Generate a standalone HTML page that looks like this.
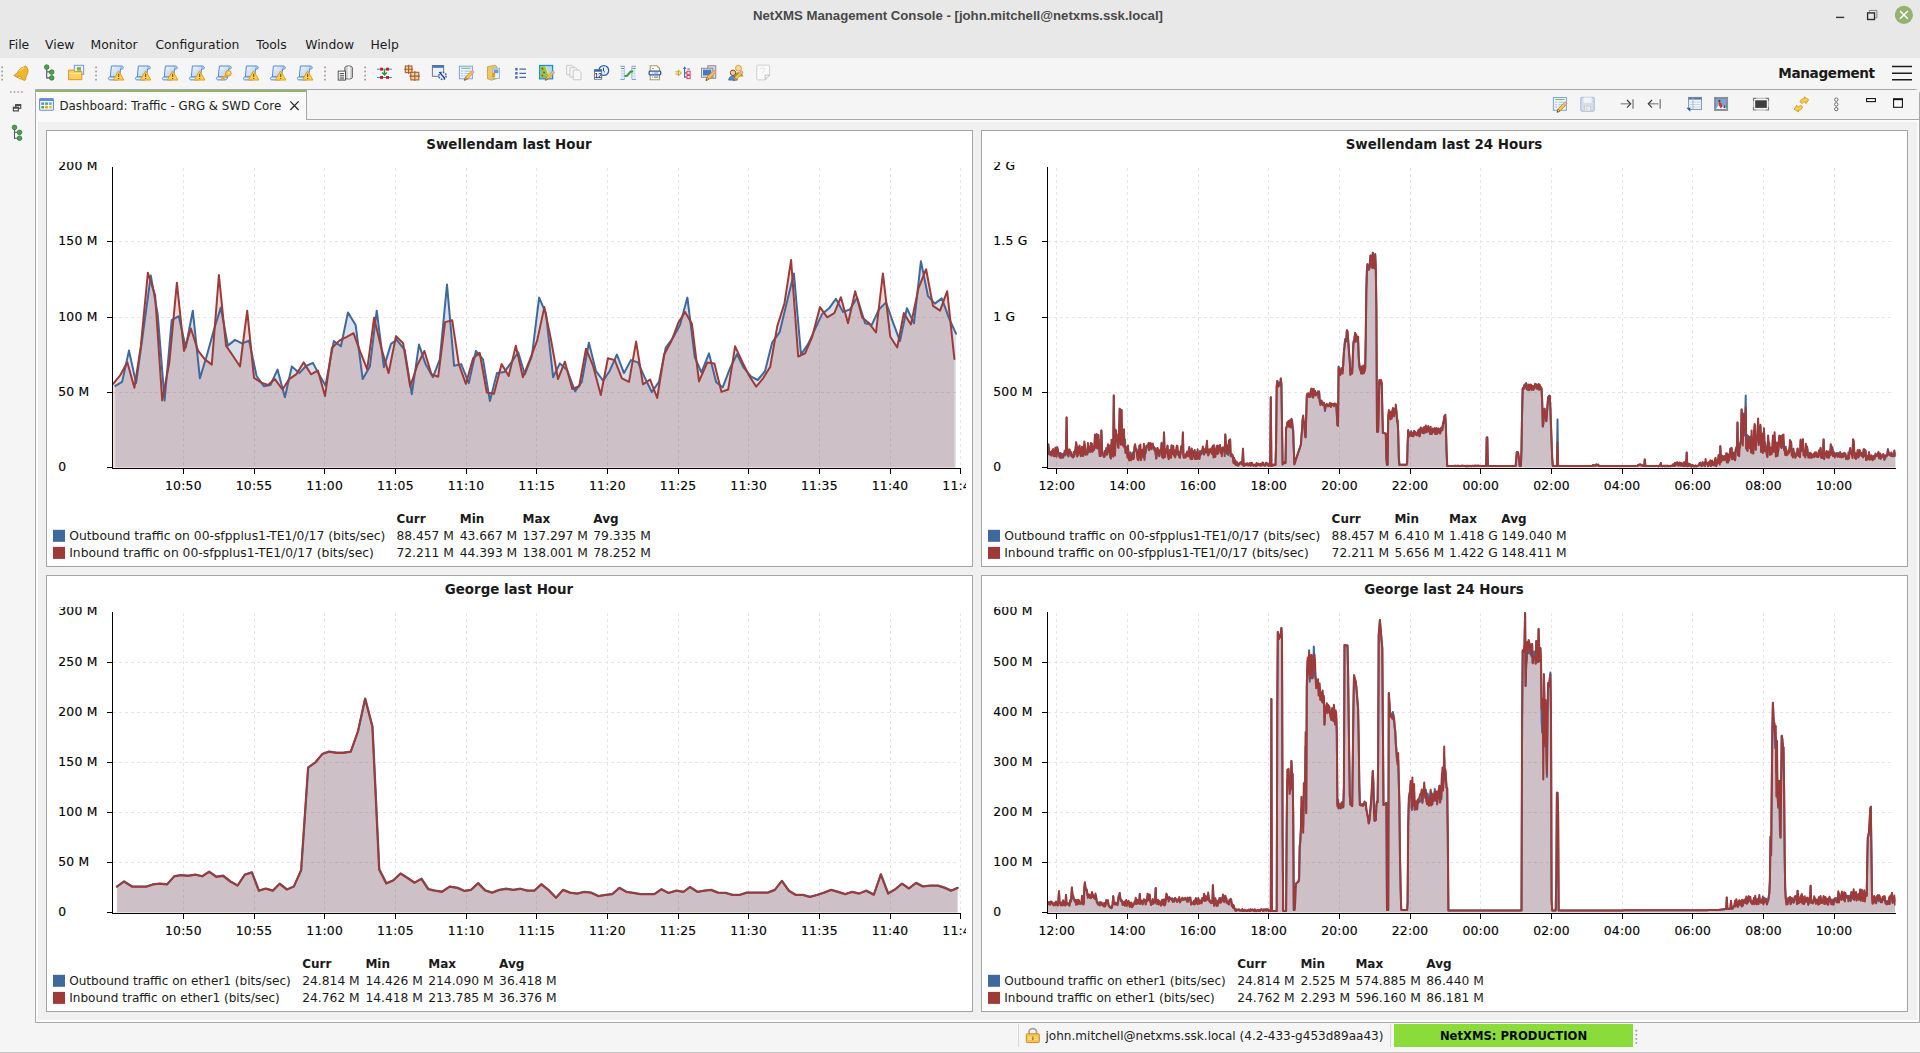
<!DOCTYPE html><html><head><meta charset="utf-8"><title>NetXMS Management Console</title><style>
html,body{margin:0;padding:0}
body{width:1920px;height:1053px;overflow:hidden;background:#f0f0f0;position:relative;font-family:'DejaVu Sans','Liberation Sans',sans-serif;color:#1a1a1a}
div{position:absolute;box-sizing:border-box}
svg{position:absolute;overflow:hidden}
.t{white-space:nowrap}
#titlebar{left:0;top:0;width:1920px;height:58px;background:#e8e8e8}
#title{left:0;width:1916px;top:6.700px;text-align:center;font:bold 13.2px/18px 'Liberation Sans',sans-serif;color:#484848}
.menu{top:36px;font-size:12.4px;line-height:18px;color:#1c1c1c}
#toolbar{left:0;top:58px;width:1920px;height:31px;background:#f5f5f5}
#persp{left:1778.3px;top:63.200px;letter-spacing:-0.36px;font-size:13.6px;font-weight:bold;line-height:20px;color:#1a1a1a}
#side{left:0;top:89px;width:35px;height:962px;background:#f5f5f5}
#tabarea{left:35px;top:89px;width:1885px;height:934px;background:#f0f0f0;border:1px solid #a8a8a8;border-radius:0 5px 0 0}
#tabinner{left:0;top:30px;width:1883px;height:902px;border:2px solid #fbfbfb;background:#f0f0f0}
#tabstrip{left:0;top:0;width:1883px;height:30px;background:#f5f5f5;border-bottom:1px solid #a8a8a8}
#tab{left:-1px;top:-1px;width:272px;height:31px;background:#fafafa;border:1px solid #a8a8a8;border-bottom:none;border-radius:3px 0 0 0}
#tabgreen{left:0;top:0;width:270px;height:2px;background:#8fb56a}
#tabtext{left:23.500px;top:6.800px;font-size:11.820px;line-height:18px;color:#222}
.panel{background:#fff;border:1px solid #a3a3a8;width:927px;height:437px}
.chart{left:0;top:0}
.ct{font:bold 13.4px 'DejaVu Sans',sans-serif;fill:#1a1a1a}
.al text{font:12.35px 'DejaVu Sans',sans-serif;letter-spacing:0.22px;fill:#000;stroke:#000;stroke-width:0.14px}
.lg text{font:12.3px 'DejaVu Sans',sans-serif;fill:#1a1a1a}
.lg text.lh{font-weight:bold;font-size:12px}
#status{left:0;top:1023px;width:1920px;height:30px;background:#f5f5f5}
#user{left:1045.5px;top:1027px;font-size:12.05px;line-height:18px;color:#1c1c1c}
#prod{left:1394px;top:1024px;width:239px;height:22.5px;background:#8bdc3a;text-align:center;color:#000;font:bold 11.600px/25px 'DejaVu Sans',sans-serif;color:#0a0a0a}
#winbottom{left:0;top:1052px;width:1920px;height:1px;background:#bdbdbd}
</style></head><body>
<div id="titlebar"></div>
<div id="title" class="t">NetXMS Management Console - [john.mitchell@netxms.ssk.local]</div>
<div class="menu t" style="left:8.5px">File</div>
<div class="menu t" style="left:45.1px">View</div>
<div class="menu t" style="left:90.5px">Monitor</div>
<div class="menu t" style="left:155.4px">Configuration</div>
<div class="menu t" style="left:256.2px">Tools</div>
<div class="menu t" style="left:305.2px">Window</div>
<div class="menu t" style="left:370.5px">Help</div>
<div id="toolbar"></div>
<div id="persp" class="t">Management</div>
<div id="side"></div>
<div id="status"></div>
<div id="tabarea"><div id="tabinner"></div><div id="tabstrip"></div><div id="tab"><div id="tabgreen"></div><div id="tabtext" class="t">Dashboard: Traffic - GRG &amp; SWD Core</div></div></div>
<div class="panel" style="left:46px;top:130px"></div>
<div class="panel" style="left:981px;top:130px"></div>
<div class="panel" style="left:46px;top:575px"></div>
<div class="panel" style="left:981px;top:575px"></div>
<svg class="chart" style="left:46px;top:130px" width="927" height="437" viewBox="46 130 927 437">
<path d="M113 392.5 H957.6 M113 317.5 H957.6 M113 241.5 H957.6 M183.5 167.7 V467.5 M254.5 167.7 V467.5 M324.5 167.7 V467.5 M395.5 167.7 V467.5 M466.5 167.7 V467.5 M536.5 167.7 V467.5 M607.5 167.7 V467.5 M678.5 167.7 V467.5 M748.5 167.7 V467.5 M819.5 167.7 V467.5 M890.5 167.7 V467.5 M960.5 167.7 V467.5" stroke="#e5e5e5" stroke-width="1" stroke-dasharray="3 3" fill="none" shape-rendering="crispEdges"/>
<clipPath id="c46_130"><rect x="112.5" y="166.7" width="848.1" height="301.3"/></clipPath>
<g clip-path="url(#c46_130)">
<path d="M115.4 385.9 L122.1 381.9 L129 350.6 L136.1 383.1 L142.7 335.6 L150.8 275.6 L157.7 314.3 L164.6 400.4 L171.7 320.2 L178.8 316.2 L185.7 347.5 L192.8 310.7 L199.9 378.3 L206.8 355.8 L213.9 329.7 L220.8 307.6 L227.9 345.6 L235 339.9 L241.9 343.4 L249.1 340.8 L256.6 376 L263.8 386.2 L270.4 385 L277.5 369.6 L284.9 397.3 L291.8 366.5 L299.4 373.1 L306 366 L312.9 362.9 L319.5 375.3 L325.5 385.5 L333.8 341.1 L340.9 346.3 L348 312.4 L355.6 324.9 L362.7 379.1 L369.9 366.5 L376.7 310.7 L383.9 367.2 L391 343.9 L396.7 339.9 L404.7 349.9 L411.8 394.2 L419 344.6 L425.6 364.1 L433 377.2 L439.8 359.4 L447 284.6 L454.1 365.8 L461.2 364.1 L468.8 383.1 L475.9 351 L483 359.4 L489.9 400.9 L497 373.1 L504.4 371.9 L511 362.9 L518.2 352.2 L524.8 374.3 L531.9 355.8 L539.1 297.6 L545.9 313.1 L553.1 377.2 L559.9 363.4 L567.1 370 L575.1 391.4 L581.8 381.9 L588.9 342.7 L596 371.2 L603.1 380.7 L609.5 371.2 L616.9 354.6 L624 373.1 L630.9 360.1 L638 362.4 L645.1 378.3 L651.8 392.1 L658.9 381.9 L665.8 347.5 L672.9 338 L680 324.9 L687.4 297.6 L694.7 357 L701.4 372.4 L709 353.4 L716.1 381.9 L722.7 387.4 L729.8 368.8 L737 354.1 L743.6 367.7 L751.2 376.7 L757.8 380 L765 371.2 L772.1 342.7 L779.7 332.1 L786.8 302.4 L793.9 273.4 L801 354.6 L808.2 343.9 L814.8 329.7 L821.9 314.3 L829.1 308.3 L835.9 298.8 L843.1 311.9 L849.9 309.5 L857.1 297.6 L865.1 323.3 L871.8 324.9 L878.9 309.5 L886 302.4 L893.1 322.6 L900 341.1 L906.9 308.3 L914 323.3 L920.9 261.3 L928 296 L934.9 303.6 L941.8 298.4 L948.9 317.8 L956 333.7 L956 467.5 L115.4 467.5 Z" fill="#3f699d" fill-opacity="0.2" stroke="none"/>
<path d="M113.1 383.8 L120.2 375.3 L127.3 362.2 L134.4 387.8 L140.8 346.3 L147.9 272.7 L155.1 295.3 L162.2 400.4 L169.3 362.9 L176.9 282.7 L184 351 L190.9 328.5 L198 350.6 L204.9 359.4 L211.8 364.6 L218.9 275.1 L226 345.6 L232.9 355.8 L240 366.5 L247.2 310.7 L254 377.9 L261.4 382.6 L268 385 L274.9 379.1 L282.5 389.5 L289.2 379.1 L296.5 374.1 L303.6 362.4 L311 374.3 L317.9 370.5 L325 396.1 L331.9 348 L339.7 340.4 L346.8 336.8 L353.5 333.2 L360.4 352.2 L367.2 369.3 L374.1 317.8 L381.5 348.7 L388.6 373.1 L396 336.1 L403.1 343.2 L410.2 386.6 L417.3 365.3 L424.4 351 L431.5 374.3 L438.2 376.7 L445.1 322.1 L452.2 320.2 L458.8 364.1 L465.9 383.8 L473.1 358.2 L479.7 352.9 L486.8 392.6 L494 393.8 L501.6 364.1 L508.7 376 L515.8 345.8 L522.9 377.2 L530 359.4 L537.2 340.4 L544.3 307.1 L550.9 339.2 L558 379.1 L564.9 361.7 L572.3 389 L579.2 386.2 L586 348.7 L592.9 365.3 L600.8 395 L607.9 358.2 L614.8 360.1 L621.9 378.3 L629 381.9 L636.1 341.6 L643 384.3 L650.1 379.5 L657.2 398 L664.1 354.6 L671.2 341.6 L678.4 322.6 L685 311.9 L691.9 323.8 L699 381.4 L707.3 362.4 L714.4 363.4 L721.5 391.9 L728.2 389.5 L735.1 346.3 L742.2 361.7 L749.3 376 L756.2 386.6 L763.1 378.3 L770.2 366.9 L777.3 326.1 L784.4 303.6 L791.1 260.1 L798.2 356.5 L805.1 353.4 L812.2 336.8 L820 307.1 L827.2 317.3 L834.3 313.1 L840.9 297.2 L848 323.3 L855.2 291.2 L862.3 317.8 L869.2 323.3 L876 332.5 L882.9 273.4 L890.3 336.8 L897.2 347.5 L903.8 313.1 L910.9 324.5 L918.5 288.1 L926.1 269.2 L933 305.9 L940.1 310.7 L947.2 291.2 L954.4 358.9 L954.4 467.5 L113.1 467.5 Z" fill="#9e3b39" fill-opacity="0.2" stroke="none"/>
<path d="M115.4 385.9 L122.1 381.9 L129 350.6 L136.1 383.1 L142.7 335.6 L150.8 275.6 L157.7 314.3 L164.6 400.4 L171.7 320.2 L178.8 316.2 L185.7 347.5 L192.8 310.7 L199.9 378.3 L206.8 355.8 L213.9 329.7 L220.8 307.6 L227.9 345.6 L235 339.9 L241.9 343.4 L249.1 340.8 L256.6 376 L263.8 386.2 L270.4 385 L277.5 369.6 L284.9 397.3 L291.8 366.5 L299.4 373.1 L306 366 L312.9 362.9 L319.5 375.3 L325.5 385.5 L333.8 341.1 L340.9 346.3 L348 312.4 L355.6 324.9 L362.7 379.1 L369.9 366.5 L376.7 310.7 L383.9 367.2 L391 343.9 L396.7 339.9 L404.7 349.9 L411.8 394.2 L419 344.6 L425.6 364.1 L433 377.2 L439.8 359.4 L447 284.6 L454.1 365.8 L461.2 364.1 L468.8 383.1 L475.9 351 L483 359.4 L489.9 400.9 L497 373.1 L504.4 371.9 L511 362.9 L518.2 352.2 L524.8 374.3 L531.9 355.8 L539.1 297.6 L545.9 313.1 L553.1 377.2 L559.9 363.4 L567.1 370 L575.1 391.4 L581.8 381.9 L588.9 342.7 L596 371.2 L603.1 380.7 L609.5 371.2 L616.9 354.6 L624 373.1 L630.9 360.1 L638 362.4 L645.1 378.3 L651.8 392.1 L658.9 381.9 L665.8 347.5 L672.9 338 L680 324.9 L687.4 297.6 L694.7 357 L701.4 372.4 L709 353.4 L716.1 381.9 L722.7 387.4 L729.8 368.8 L737 354.1 L743.6 367.7 L751.2 376.7 L757.8 380 L765 371.2 L772.1 342.7 L779.7 332.1 L786.8 302.4 L793.9 273.4 L801 354.6 L808.2 343.9 L814.8 329.7 L821.9 314.3 L829.1 308.3 L835.9 298.8 L843.1 311.9 L849.9 309.5 L857.1 297.6 L865.1 323.3 L871.8 324.9 L878.9 309.5 L886 302.4 L893.1 322.6 L900 341.1 L906.9 308.3 L914 323.3 L920.9 261.3 L928 296 L934.9 303.6 L941.8 298.4 L948.9 317.8 L956 333.7" fill="none" stroke="#3f699d" stroke-width="2" stroke-linejoin="round" stroke-linecap="round"/>
<path d="M113.1 383.8 L120.2 375.3 L127.3 362.2 L134.4 387.8 L140.8 346.3 L147.9 272.7 L155.1 295.3 L162.2 400.4 L169.3 362.9 L176.9 282.7 L184 351 L190.9 328.5 L198 350.6 L204.9 359.4 L211.8 364.6 L218.9 275.1 L226 345.6 L232.9 355.8 L240 366.5 L247.2 310.7 L254 377.9 L261.4 382.6 L268 385 L274.9 379.1 L282.5 389.5 L289.2 379.1 L296.5 374.1 L303.6 362.4 L311 374.3 L317.9 370.5 L325 396.1 L331.9 348 L339.7 340.4 L346.8 336.8 L353.5 333.2 L360.4 352.2 L367.2 369.3 L374.1 317.8 L381.5 348.7 L388.6 373.1 L396 336.1 L403.1 343.2 L410.2 386.6 L417.3 365.3 L424.4 351 L431.5 374.3 L438.2 376.7 L445.1 322.1 L452.2 320.2 L458.8 364.1 L465.9 383.8 L473.1 358.2 L479.7 352.9 L486.8 392.6 L494 393.8 L501.6 364.1 L508.7 376 L515.8 345.8 L522.9 377.2 L530 359.4 L537.2 340.4 L544.3 307.1 L550.9 339.2 L558 379.1 L564.9 361.7 L572.3 389 L579.2 386.2 L586 348.7 L592.9 365.3 L600.8 395 L607.9 358.2 L614.8 360.1 L621.9 378.3 L629 381.9 L636.1 341.6 L643 384.3 L650.1 379.5 L657.2 398 L664.1 354.6 L671.2 341.6 L678.4 322.6 L685 311.9 L691.9 323.8 L699 381.4 L707.3 362.4 L714.4 363.4 L721.5 391.9 L728.2 389.5 L735.1 346.3 L742.2 361.7 L749.3 376 L756.2 386.6 L763.1 378.3 L770.2 366.9 L777.3 326.1 L784.4 303.6 L791.1 260.1 L798.2 356.5 L805.1 353.4 L812.2 336.8 L820 307.1 L827.2 317.3 L834.3 313.1 L840.9 297.2 L848 323.3 L855.2 291.2 L862.3 317.8 L869.2 323.3 L876 332.5 L882.9 273.4 L890.3 336.8 L897.2 347.5 L903.8 313.1 L910.9 324.5 L918.5 288.1 L926.1 269.2 L933 305.9 L940.1 310.7 L947.2 291.2 L954.4 358.9" fill="none" stroke="#9e3b39" stroke-width="2" stroke-linejoin="round" stroke-linecap="round"/>
</g>
<path d="M112.5 166.7 V468.5 M112 468.4 H961.1 M106.9 467.5 H112.5 M106.9 392.5 H112.5 M106.9 317.5 H112.5 M106.9 241.5 H112.5 M183.5 467.5 V473.5 M254.5 467.5 V473.5 M324.5 467.5 V473.5 M395.5 467.5 V473.5 M466.5 467.5 V473.5 M536.5 467.5 V473.5 M607.5 467.5 V473.5 M678.5 467.5 V473.5 M748.5 467.5 V473.5 M819.5 467.5 V473.5 M890.5 467.5 V473.5 M960.5 467.5 V473.5" stroke="#000" stroke-width="1" fill="none" shape-rendering="crispEdges"/>
<text x="509" y="149" text-anchor="middle" class="ct">Swellendam last Hour</text>
<clipPath id="yc46_130"><rect x="46" y="162" width="70" height="320"/></clipPath>
<g clip-path="url(#yc46_130)" class="al">
<text x="58.3" y="470.8">0</text>
<text x="58.3" y="395.8">50 M</text>
<text x="58.3" y="320.8">100 M</text>
<text x="58.3" y="244.8">150 M</text>
<text x="58.3" y="170">200 M</text>
</g>
<clipPath id="xc46_130"><rect x="46" y="472.5" width="920" height="30"/></clipPath>
<g clip-path="url(#xc46_130)" class="al" text-anchor="middle">
<text x="183.4" y="490.3">10:50</text>
<text x="254.1" y="490.3">10:55</text>
<text x="324.7" y="490.3">11:00</text>
<text x="395.4" y="490.3">11:05</text>
<text x="466.1" y="490.3">11:10</text>
<text x="536.7" y="490.3">11:15</text>
<text x="607.4" y="490.3">11:20</text>
<text x="678.1" y="490.3">11:25</text>
<text x="748.7" y="490.3">11:30</text>
<text x="819.4" y="490.3">11:35</text>
<text x="890.1" y="490.3">11:40</text>
<text x="960.7" y="490.3">11:45</text>
</g>
<g class="lg">
<text x="396.4" y="522.5" class="lh">Curr</text>
<text x="459.7" y="522.5" class="lh">Min</text>
<text x="522.5" y="522.5" class="lh">Max</text>
<text x="593.3" y="522.5" class="lh">Avg</text>
<rect x="53" y="529.8" width="12" height="12" fill="#3f699d"/>
<text x="69.2" y="539.5" textLength="316.2" lengthAdjust="spacingAndGlyphs">Outbound traffic on 00-sfpplus1-TE1/0/17 (bits/sec)</text>
<text x="396.4" y="539.5">88.457 M</text>
<text x="459.7" y="539.5">43.667 M</text>
<text x="522.5" y="539.5">137.297 M</text>
<text x="593.3" y="539.5">79.335 M</text>
<rect x="53" y="546.9" width="12" height="12" fill="#9e3b39"/>
<text x="69.2" y="556.6" textLength="304.6" lengthAdjust="spacingAndGlyphs">Inbound traffic on 00-sfpplus1-TE1/0/17 (bits/sec)</text>
<text x="396.4" y="556.6">72.211 M</text>
<text x="459.7" y="556.6">44.393 M</text>
<text x="522.5" y="556.6">138.001 M</text>
<text x="593.3" y="556.6">78.252 M</text>
</g>
</svg>
<svg class="chart" style="left:981px;top:130px" width="927" height="437" viewBox="981 130 927 437">
<path d="M1048 392.5 H1892.6 M1048 317.5 H1892.6 M1048 241.5 H1892.6 M1056.5 167.7 V467.5 M1127.5 167.7 V467.5 M1198.5 167.7 V467.5 M1268.5 167.7 V467.5 M1339.5 167.7 V467.5 M1410.5 167.7 V467.5 M1480.5 167.7 V467.5 M1551.5 167.7 V467.5 M1622.5 167.7 V467.5 M1692.5 167.7 V467.5 M1763.5 167.7 V467.5 M1834.5 167.7 V467.5" stroke="#e5e5e5" stroke-width="1" stroke-dasharray="3 3" fill="none" shape-rendering="crispEdges"/>
<clipPath id="c981_130"><rect x="1047.5" y="166.7" width="848.1" height="301.3"/></clipPath>
<g clip-path="url(#c981_130)">
<path d="M1047.8 453.9 L1048.3 444.4 L1048.9 450.5 L1049.5 454.5 L1050.1 454.4 L1050.7 452.9 L1051.3 455.3 L1051.9 451.2 L1052.5 450.8 L1053.1 449.8 L1053.6 454.3 L1054.2 452.6 L1054.8 456 L1055.4 449.5 L1056 451.6 L1056.6 452.6 L1057.2 451 L1057.8 449.5 L1058.4 454.8 L1059 453.1 L1059.5 456.5 L1060.1 456.7 L1060.7 452.9 L1061.3 457.7 L1061.9 457.1 L1062.5 454 L1063.1 456.4 L1063.7 455.8 L1064.3 452.8 L1064.9 450.6 L1065.4 455.5 L1066 453.9 L1066.6 417.5 L1067.2 454.1 L1067.8 454.2 L1068.4 456.5 L1069 450.7 L1069.6 452.7 L1070.2 453.4 L1070.8 452 L1071.3 455.7 L1071.9 456 L1072.5 455.1 L1073.1 456.4 L1073.7 453.3 L1074.3 456.2 L1074.9 451.5 L1075.5 448.8 L1076.1 442.3 L1076.7 447.4 L1077.2 455.5 L1077.8 454.7 L1078.4 448.4 L1079 451.5 L1079.6 449.6 L1080.2 453.8 L1080.8 455.1 L1081.4 450.2 L1082 446.7 L1082.6 452.9 L1083.1 456.1 L1083.7 449.6 L1084.3 445.3 L1084.9 446.7 L1085.5 454.3 L1086.1 451.8 L1086.7 452.9 L1087.3 450.1 L1087.9 447.2 L1088.5 450.3 L1089 448.9 L1089.6 446.7 L1090.2 451.9 L1090.8 445.8 L1091.4 450.5 L1092 443.8 L1092.6 451.7 L1093.2 446.6 L1093.8 449.9 L1094.4 448.7 L1094.9 438.7 L1095.5 436.3 L1096.1 446 L1096.7 434 L1097.3 448.5 L1097.9 440.3 L1098.5 439.4 L1099.1 448.6 L1099.7 453.6 L1100.3 447 L1100.8 455.9 L1101.4 430.6 L1102 449 L1102.6 454.3 L1103.2 454.9 L1103.8 456.9 L1104.4 456.9 L1105 450.8 L1105.6 451.1 L1106.2 448 L1106.7 453.1 L1107.3 454.6 L1107.9 448.3 L1108.5 450.1 L1109.1 448.9 L1109.7 447 L1110.3 456.9 L1110.9 455.3 L1111.5 444.5 L1112.1 444.4 L1112.6 455.8 L1113.2 449.5 L1113.8 395.6 L1114.4 446 L1115 454.8 L1115.6 430.6 L1116.2 436.7 L1116.8 434.8 L1117.4 441 L1118 442.6 L1118.5 443 L1119.1 435.8 L1119.7 408.8 L1120.3 439.3 L1120.9 441.3 L1121.5 410 L1122.1 441.5 L1122.7 438.9 L1123.3 444.3 L1123.9 429.4 L1124.4 445.1 L1125 439.4 L1125.6 452.7 L1126.2 448.8 L1126.8 449.2 L1127.4 452.3 L1128 446.9 L1128.6 457.2 L1129.2 457.2 L1129.8 452.9 L1130.3 452.3 L1130.9 457.2 L1131.5 458.1 L1132.1 456.6 L1132.7 452.5 L1133.3 456.9 L1133.9 457.7 L1134.5 448 L1135.1 444.9 L1135.7 449.6 L1136.2 448.4 L1136.8 449.5 L1137.4 456.4 L1138 455.2 L1138.6 458.3 L1139.2 451.2 L1139.8 452.3 L1140.4 449.4 L1141 454.2 L1141.6 450.8 L1142.1 453.5 L1142.7 450.2 L1143.3 457.7 L1143.9 447.5 L1144.5 455.9 L1145.1 454 L1145.7 452.7 L1146.3 449.5 L1146.9 447.4 L1147.5 445.9 L1148 447.6 L1148.6 446.7 L1149.2 450.2 L1149.8 446 L1150.4 443.9 L1151 444.7 L1151.6 446.6 L1152.2 446.7 L1152.8 447.3 L1153.4 447.9 L1153.9 447.7 L1154.5 450.5 L1155.1 448.2 L1155.7 454.5 L1156.3 458.2 L1156.9 454.3 L1157.5 448.3 L1158.1 453.5 L1158.7 453.5 L1159.3 456.3 L1159.8 454.1 L1160.4 450.6 L1161 452.4 L1161.6 442.8 L1162.2 454.6 L1162.8 446.9 L1163.4 457.7 L1164 432.5 L1164.6 452.2 L1165.2 453 L1165.7 452.5 L1166.3 453.3 L1166.9 449.4 L1167.5 446.2 L1168.1 456.8 L1168.7 456.5 L1169.3 453 L1169.9 451.9 L1170.5 454.5 L1171.1 454.8 L1171.6 445.2 L1172.2 451.1 L1172.8 452.4 L1173.4 449.8 L1174 453 L1174.6 452.4 L1175.2 455.7 L1175.8 454.6 L1176.4 451 L1177 450.6 L1177.5 450.6 L1178.1 453.8 L1178.7 453.7 L1179.3 457.1 L1179.9 454 L1180.5 454.4 L1181.1 446.3 L1181.7 448.9 L1182.3 452 L1182.9 432.5 L1183.4 453.1 L1184 457.3 L1184.6 456.2 L1185.2 455 L1185.8 454.1 L1186.4 454.2 L1187 451.4 L1187.6 454.6 L1188.2 454.8 L1188.8 452.3 L1189.3 450.3 L1189.9 455.1 L1190.5 457.5 L1191.1 457.6 L1191.7 449.1 L1192.3 458.6 L1192.9 453.7 L1193.5 454.7 L1194.1 452.7 L1194.7 451.5 L1195.2 459 L1195.8 454.6 L1196.4 452.3 L1197 455.2 L1197.6 451.9 L1198.2 454.7 L1198.8 457.5 L1199.4 458.7 L1200 450.9 L1200.6 452.6 L1201.1 454.4 L1201.7 450.6 L1202.3 453.4 L1202.9 450.1 L1203.5 452.5 L1204.1 454.5 L1204.7 451.1 L1205.3 448.9 L1205.9 451.2 L1206.5 446.8 L1207 444.3 L1207.6 452.8 L1208.2 451.8 L1208.8 453 L1209.4 452.5 L1210 451 L1210.6 451 L1211.2 450.2 L1211.8 453.1 L1212.4 448.6 L1212.9 446.4 L1213.5 455.3 L1214.1 447.2 L1214.7 450.4 L1215.3 454.3 L1215.9 453.4 L1216.5 451.7 L1217.1 448.2 L1217.7 452 L1218.3 452.9 L1218.8 445.8 L1219.4 449.5 L1220 445.6 L1220.6 451.4 L1221.2 447.9 L1221.8 453.5 L1222.4 450.6 L1223 449.8 L1223.6 450.4 L1224.2 448.7 L1224.7 452.4 L1225.3 434.4 L1225.9 449.7 L1226.5 449.5 L1227.1 454 L1227.7 450.7 L1228.3 455 L1228.9 445.9 L1229.5 447.2 L1230.1 439.4 L1230.6 452.7 L1231.2 453.7 L1231.8 454.2 L1232.4 454.9 L1233 456.8 L1233.6 462.9 L1234.2 459.7 L1234.8 461.7 L1235.4 461.2 L1236 464.9 L1236.5 463.8 L1237.1 463.1 L1237.7 464.8 L1238.3 465.3 L1238.9 464.5 L1239.5 464.2 L1240.1 463 L1240.7 462.8 L1241.3 462 L1241.9 464 L1242.4 462.3 L1243 448.8 L1243.6 465.7 L1244.2 463.8 L1244.8 465 L1245.4 463.8 L1246 465 L1246.6 465.1 L1247.2 463.8 L1247.8 464.2 L1248.3 464.6 L1248.9 464.6 L1249.5 464.1 L1250.1 463.9 L1250.7 464.8 L1251.3 463 L1251.9 463.6 L1252.5 465.2 L1253.1 464.5 L1253.7 465.4 L1254.2 465 L1254.8 465.3 L1255.4 464.8 L1256 465.6 L1256.6 464.2 L1257.2 464.8 L1257.8 464.4 L1258.4 463.8 L1259 465.1 L1259.6 465 L1260.1 464.5 L1260.7 464.9 L1261.3 464.2 L1261.9 465.1 L1262.5 463.2 L1263.1 463.2 L1263.7 464.9 L1264.3 464.7 L1264.9 465.5 L1265.5 464.9 L1266 462.7 L1266.6 463.7 L1267.2 464.5 L1267.8 465 L1268.4 465.6 L1269 464.3 L1269.6 463.9 L1270.2 465.6 L1270.8 397.2 L1271.4 465.7 L1271.9 464.8 L1272.5 465.6 L1273.1 464.8 L1273.7 464.9 L1274.3 465 L1274.9 464.8 L1275.5 464.8 L1276.1 442.7 L1276.7 385.7 L1277.3 380.9 L1277.8 386.3 L1278.4 384.7 L1279 382.5 L1279.6 384 L1280.2 385.8 L1280.8 378.6 L1281.4 384.6 L1282 422.2 L1282.6 464.4 L1283.2 463.4 L1283.7 462.8 L1284.3 463 L1284.9 462.3 L1285.5 463.1 L1286.1 427.8 L1286.7 426.7 L1287.3 422.3 L1287.9 423.8 L1288.5 422.8 L1289.1 426.5 L1289.6 425 L1290.2 420.9 L1290.8 427.2 L1291.4 420.9 L1292 420.7 L1292.6 426.5 L1293.2 430.1 L1293.8 449.5 L1294.4 464.2 L1295 462.4 L1295.5 460.7 L1296.1 458.9 L1296.7 457.1 L1297.3 455.4 L1297.9 453.6 L1298.5 451.8 L1299.1 450.1 L1299.7 448.3 L1300.3 446.5 L1300.9 444.7 L1301.4 437.3 L1302 430 L1302.6 419.9 L1303.2 418.5 L1303.8 425.1 L1304.4 426.7 L1305 434.6 L1305.6 437.3 L1306.2 416.8 L1306.8 395 L1307.3 394.3 L1307.9 394.1 L1308.5 393.3 L1309.1 394 L1309.7 396.9 L1310.3 396.6 L1310.9 390.3 L1311.5 388.9 L1312.1 389.2 L1312.7 395.9 L1313.2 396.7 L1313.8 392 L1314.4 392.3 L1315 391 L1315.6 394.7 L1316.2 392.7 L1316.8 394.7 L1317.4 394.1 L1318 391.2 L1318.6 397.6 L1319.1 391.8 L1319.7 401.7 L1320.3 402.8 L1320.9 401.7 L1321.5 400.9 L1322.1 403.3 L1322.7 405.2 L1323.3 404.1 L1323.9 403 L1324.5 404.8 L1325 411.1 L1325.6 406.5 L1326.2 405.1 L1326.8 404.5 L1327.4 404.6 L1328 405.2 L1328.6 405.4 L1329.2 405.8 L1329.8 403.3 L1330.4 405.1 L1330.9 405.7 L1331.5 405.2 L1332.1 404.4 L1332.7 404.9 L1333.3 404.5 L1333.9 405 L1334.5 405 L1335.1 404.7 L1335.7 404.5 L1336.3 404.4 L1336.8 414 L1337.4 424.9 L1338 425.6 L1338.6 366.4 L1339.2 367.5 L1339.8 370.6 L1340.4 374.1 L1341 372.9 L1341.6 370.6 L1342.2 371.1 L1342.7 369.5 L1343.3 365 L1343.9 352.1 L1344.5 346.7 L1345.1 339.1 L1345.7 340.8 L1346.3 341.5 L1346.9 330.3 L1347.5 332.3 L1348.1 338 L1348.6 347.1 L1349.2 355.6 L1349.8 362.4 L1350.4 374.2 L1351 369.8 L1351.6 368.7 L1352.2 371.6 L1352.8 356.7 L1353.4 341.4 L1354 340.8 L1354.5 338 L1355.1 333 L1355.7 341.8 L1356.3 338.1 L1356.9 338.8 L1357.5 340.5 L1358.1 340.5 L1358.7 357.3 L1359.3 366.6 L1359.9 369.7 L1360.4 367.5 L1361 372 L1361.6 369.3 L1362.2 366.2 L1362.8 370.5 L1363.4 368.1 L1364 370.4 L1364.6 371.1 L1365.2 367.7 L1365.8 334.3 L1366.3 291.9 L1366.9 269.5 L1367.5 264.2 L1368.1 268.7 L1368.7 269.8 L1369.3 269.5 L1369.9 261.3 L1370.5 255.5 L1371.1 264.3 L1371.7 266.5 L1372.2 263.6 L1372.8 252.8 L1373.4 261.7 L1374 264.2 L1374.6 267.3 L1375.2 254.2 L1375.8 268.8 L1376.4 310.1 L1377 431.7 L1377.6 431.7 L1378.1 431.7 L1378.7 407.7 L1379.3 381.2 L1379.9 381.3 L1380.5 383.9 L1381.1 381.6 L1381.7 382.9 L1382.3 407.3 L1382.9 432.9 L1383.5 433 L1384 433.1 L1384.6 433.3 L1385.2 433.4 L1385.8 433.5 L1386.4 458.9 L1387 464.8 L1387.6 464.8 L1388.2 415.6 L1388.8 413.2 L1389.4 413.1 L1389.9 415.8 L1390.5 418.9 L1391.1 413.9 L1391.7 416.6 L1392.3 414.9 L1392.9 408.5 L1393.5 413.6 L1394.1 409.7 L1394.7 408.7 L1395.3 412.3 L1395.8 407.8 L1396.4 411.7 L1397 421.8 L1397.6 420.7 L1398.2 431.5 L1398.8 457.4 L1399.4 464.8 L1400 464.8 L1400.6 464.8 L1401.2 464.8 L1401.7 464.8 L1402.3 464.8 L1402.9 464.8 L1403.5 464.8 L1404.1 464.8 L1404.7 464.8 L1405.3 464.8 L1405.9 464.8 L1406.5 464.8 L1407.1 463.2 L1407.6 445.7 L1408.2 430.7 L1408.8 435 L1409.4 436.2 L1410 432.6 L1410.6 433.7 L1411.2 431.1 L1411.8 436 L1412.4 433.8 L1413 434.9 L1413.5 435.8 L1414.1 430.8 L1414.7 433.7 L1415.3 433.7 L1415.9 434.8 L1416.5 434 L1417.1 432.7 L1417.7 432.3 L1418.3 430.9 L1418.9 431.2 L1419.4 436.3 L1420 432.4 L1420.6 430.1 L1421.2 431 L1421.8 429.3 L1422.4 430.6 L1423 432.2 L1423.6 433.3 L1424.2 427.1 L1424.8 432.8 L1425.3 428.8 L1425.9 428.7 L1426.5 432.3 L1427.1 431.4 L1427.7 429.4 L1428.3 426.3 L1428.9 429.7 L1429.5 431.3 L1430.1 433.9 L1430.7 429.4 L1431.2 433.4 L1431.8 431.4 L1432.4 428.6 L1433 432.2 L1433.6 430.2 L1434.2 429.8 L1434.8 430.1 L1435.4 434 L1436 433 L1436.6 428.1 L1437.1 433.5 L1437.7 430.8 L1438.3 430.6 L1438.9 428.9 L1439.5 432.9 L1440.1 432.1 L1440.7 430.5 L1441.3 427.4 L1441.9 429.4 L1442.5 426.3 L1443 424.2 L1443.6 421.3 L1444.2 417.4 L1444.8 415.4 L1445.4 418.5 L1446 430.6 L1446.6 452.6 L1447.2 465.9 L1447.8 465.9 L1448.4 465.9 L1448.9 465.9 L1449.5 465.9 L1450.1 465.9 L1450.7 465.9 L1451.3 465.9 L1451.9 465.9 L1452.5 465.9 L1453.1 465.9 L1453.7 465.9 L1454.3 465.9 L1454.8 465.8 L1455.4 465.9 L1456 465.8 L1456.6 466 L1457.2 465.9 L1457.8 465.9 L1458.4 465.8 L1459 465.9 L1459.6 466 L1460.2 465.9 L1460.7 466 L1461.3 465.9 L1461.9 465.7 L1462.5 466 L1463.1 465.7 L1463.7 466.1 L1464.3 465.9 L1464.9 465.9 L1465.5 466 L1466.1 466.2 L1466.6 465.9 L1467.2 465.9 L1467.8 466.2 L1468.4 465.9 L1469 465.9 L1469.6 465.9 L1470.2 465.9 L1470.8 466.1 L1471.4 466.1 L1472 465.9 L1472.5 466.1 L1473.1 465.8 L1473.7 466.1 L1474.3 466.2 L1474.9 465.8 L1475.5 465.7 L1476.1 465.9 L1476.7 465.7 L1477.3 465.7 L1477.9 465.7 L1478.4 465.8 L1479 466.1 L1479.6 465.8 L1480.2 466 L1480.8 466 L1481.4 466 L1482 466 L1482.6 466 L1483.2 466 L1483.8 466 L1484.3 466 L1484.9 466 L1485.5 466 L1486.1 466 L1486.7 437.4 L1487.3 437.5 L1487.9 466 L1488.5 466 L1489.1 466 L1489.7 466 L1490.2 466 L1490.8 466 L1491.4 466 L1492 466 L1492.6 466 L1493.2 466 L1493.8 466 L1494.4 466 L1495 466 L1495.6 466 L1496.1 466 L1496.7 466 L1497.3 466 L1497.9 466 L1498.5 466 L1499.1 466 L1499.7 466 L1500.3 466 L1500.9 466 L1501.5 466 L1502 466 L1502.6 466 L1503.2 466 L1503.8 466 L1504.4 466 L1505 466 L1505.6 466 L1506.2 466 L1506.8 466 L1507.4 466 L1507.9 466 L1508.5 466 L1509.1 466 L1509.7 466 L1510.3 466 L1510.9 466 L1511.5 466 L1512.1 466 L1512.7 466 L1513.3 466 L1513.8 466 L1514.4 466 L1515 466 L1515.6 466 L1516.2 460.1 L1516.8 452 L1517.4 452.2 L1518 452.4 L1518.6 456.2 L1519.2 461.1 L1519.7 466 L1520.3 466 L1520.9 466 L1521.5 449.1 L1522.1 412.7 L1522.7 388.1 L1523.3 388.6 L1523.9 386.8 L1524.5 385.6 L1525.1 386.8 L1525.6 385.4 L1526.2 383.3 L1526.8 389.5 L1527.4 385.8 L1528 389.7 L1528.6 384.6 L1529.2 388.2 L1529.8 386.5 L1530.4 385.1 L1531 385.7 L1531.5 389.1 L1532.1 388 L1532.7 386.5 L1533.3 388.4 L1533.9 386.9 L1534.5 388.7 L1535.1 384.7 L1535.7 386.4 L1536.3 384.5 L1536.9 388.1 L1537.4 385.9 L1538 388.7 L1538.6 386.2 L1539.2 387.6 L1539.8 386.9 L1540.4 387.3 L1541 388.2 L1541.6 388.9 L1542.2 402.2 L1542.8 426.5 L1543.3 423.7 L1543.9 414.4 L1544.5 408.7 L1545.1 413.2 L1545.7 417.7 L1546.3 421.2 L1546.9 413.3 L1547.5 405.5 L1548.1 397.6 L1548.7 396.5 L1549.2 396.1 L1549.8 395.7 L1550.4 408.3 L1551 425.7 L1551.6 442.1 L1552.2 458 L1552.8 466 L1553.4 466 L1554 466 L1554.6 466 L1555.1 466 L1555.7 466 L1556.3 466 L1556.9 466 L1557.5 419.4 L1558.1 466 L1558.7 466 L1559.3 466 L1559.9 466 L1560.5 466 L1561 466 L1561.6 466 L1562.2 466 L1562.8 466 L1563.4 466 L1564 466 L1564.6 466 L1565.2 466 L1565.8 466 L1566.4 466 L1566.9 466 L1567.5 466 L1568.1 466 L1568.7 466 L1569.3 466 L1569.9 466 L1570.5 466 L1571.1 466 L1571.7 466 L1572.3 466 L1572.8 466 L1573.4 466 L1574 466 L1574.6 466 L1575.2 466 L1575.8 466 L1576.4 466 L1577 466 L1577.6 466 L1578.2 466 L1578.7 466 L1579.3 466 L1579.9 466 L1580.5 466 L1581.1 466 L1581.7 466 L1582.3 466 L1582.9 466 L1583.5 466 L1584.1 466 L1584.6 466 L1585.2 466 L1585.8 466 L1586.4 466 L1587 466 L1587.6 466 L1588.2 466 L1588.8 466 L1589.4 466 L1590 466 L1590.5 466 L1591.1 466 L1591.7 466 L1592.3 466 L1592.9 465.4 L1593.5 465 L1594.1 465.6 L1594.7 465.5 L1595.3 465.5 L1595.9 464.6 L1596.4 464.9 L1597 465.2 L1597.6 465.3 L1598.2 464.7 L1598.8 465.5 L1599.4 466 L1600 466 L1600.6 466 L1601.2 466 L1601.8 466 L1602.3 466 L1602.9 466 L1603.5 466 L1604.1 466 L1604.7 466 L1605.3 466 L1605.9 466 L1606.5 466 L1607.1 466 L1607.7 466 L1608.2 466 L1608.8 466 L1609.4 466 L1610 466 L1610.6 466 L1611.2 466 L1611.8 466 L1612.4 466 L1613 466 L1613.6 466 L1614.1 466 L1614.7 466 L1615.3 466 L1615.9 466 L1616.5 466 L1617.1 466 L1617.7 466 L1618.3 466 L1618.9 466 L1619.5 466 L1620 466 L1620.6 466 L1621.2 466 L1621.8 466 L1622.4 466 L1623 466 L1623.6 466 L1624.2 466 L1624.8 466 L1625.4 466 L1625.9 466 L1626.5 466 L1627.1 466 L1627.7 466 L1628.3 466 L1628.9 466 L1629.5 466 L1630.1 466 L1630.7 466 L1631.3 466 L1631.8 466 L1632.4 466 L1633 466 L1633.6 466 L1634.2 466 L1634.8 466 L1635.4 466 L1636 466 L1636.6 466 L1637.2 466 L1637.7 465.7 L1638.3 464.9 L1638.9 465.1 L1639.5 464.8 L1640.1 465.1 L1640.7 464.5 L1641.3 465.3 L1641.9 465.5 L1642.5 465.5 L1643.1 465.9 L1643.6 466 L1644.2 466 L1644.8 459.4 L1645.4 466 L1646 466 L1646.6 466.1 L1647.2 466 L1647.8 465.9 L1648.4 465.9 L1649 466 L1649.5 465.9 L1650.1 466.1 L1650.7 466 L1651.3 466 L1651.9 466.1 L1652.5 466 L1653.1 466 L1653.7 466 L1654.3 466.1 L1654.9 466 L1655.4 466 L1656 466 L1656.6 466 L1657.2 466.1 L1657.8 466 L1658.4 466.2 L1659 465.8 L1659.6 465.6 L1660.2 466 L1660.8 463.1 L1661.3 466 L1661.9 465.8 L1662.5 466.2 L1663.1 465.9 L1663.7 466 L1664.3 465.8 L1664.9 466.2 L1665.5 465.7 L1666.1 466 L1666.7 465.9 L1667.2 465.8 L1667.8 466.1 L1668.4 466.1 L1669 466 L1669.6 465.9 L1670.2 466.2 L1670.8 465.7 L1671.4 465.7 L1672 466.1 L1672.6 466 L1673.1 464.9 L1673.7 464.7 L1674.3 465.9 L1674.9 464.1 L1675.5 465.6 L1676.1 464.5 L1676.7 463 L1677.3 462.5 L1677.9 464.3 L1678.5 465.8 L1679 464.2 L1679.6 462.7 L1680.2 462.9 L1680.8 464.6 L1681.4 463.1 L1682 464.7 L1682.6 464.3 L1683.2 466.1 L1683.8 462.6 L1684.4 463.9 L1684.9 465.5 L1685.5 464.1 L1686.1 465.3 L1686.7 452.5 L1687.3 465.6 L1687.9 465.9 L1688.5 463.9 L1689.1 466 L1689.7 464.6 L1690.3 464.7 L1690.8 465.5 L1691.4 466.5 L1692 465.7 L1692.6 465 L1693.2 465.9 L1693.8 466.1 L1694.4 466.2 L1695 465.7 L1695.6 465.6 L1696.2 465.9 L1696.7 466.1 L1697.3 465.9 L1697.9 465.8 L1698.5 465.2 L1699.1 464.4 L1699.7 462.9 L1700.3 462.8 L1700.9 465.1 L1701.5 466 L1702.1 464.7 L1702.6 462.5 L1703.2 463.5 L1703.8 464.7 L1704.4 464.2 L1705 464.9 L1705.6 461.9 L1706.2 463.5 L1706.8 464 L1707.4 462.7 L1708 466.1 L1708.5 463.2 L1709.1 463.2 L1709.7 464 L1710.3 462.5 L1710.9 463 L1711.5 465.4 L1712.1 461.9 L1712.7 463.4 L1713.3 463.8 L1713.9 462.1 L1714.4 462.8 L1715 461.7 L1715.6 459.8 L1716.2 465.7 L1716.8 462.6 L1717.4 461.4 L1718 462.2 L1718.6 455.7 L1719.2 460.3 L1719.8 463 L1720.3 446.2 L1720.9 459.9 L1721.5 458 L1722.1 459 L1722.7 457.5 L1723.3 458.2 L1723.9 458.7 L1724.5 456 L1725.1 458.7 L1725.7 459.7 L1726.2 456 L1726.8 459.4 L1727.4 454.6 L1728 462.6 L1728.6 455.1 L1729.2 457.5 L1729.8 457.3 L1730.4 448.6 L1731 449.2 L1731.6 447.7 L1732.1 458.9 L1732.7 453.3 L1733.3 456.6 L1733.9 454.3 L1734.5 455.3 L1735.1 460.1 L1735.7 448.7 L1736.3 450.5 L1736.9 450.9 L1737.5 422.5 L1738 452.1 L1738.6 452.2 L1739.2 447.5 L1739.8 447.8 L1740.4 444.6 L1741 435.2 L1741.6 409.4 L1742.2 431.3 L1742.8 440.8 L1743.4 413.5 L1743.9 423.2 L1744.5 435.6 L1745.1 423.1 L1745.7 395.6 L1746.3 449.1 L1746.9 434.7 L1747.5 450.4 L1748.1 435.7 L1748.7 438.8 L1749.3 437 L1749.8 446.1 L1750.4 436.6 L1751 445.3 L1751.6 438.8 L1752.2 453.2 L1752.8 451 L1753.4 446.5 L1754 440.5 L1754.6 435.8 L1755.2 432.3 L1755.7 449.8 L1756.3 439.7 L1756.9 435.2 L1757.5 440.5 L1758.1 420.8 L1758.7 443.6 L1759.3 439.7 L1759.9 437 L1760.5 426.7 L1761.1 451.9 L1761.6 438.2 L1762.2 441 L1762.8 442 L1763.4 445.3 L1764 430.3 L1764.6 447.2 L1765.2 442.3 L1765.8 446.5 L1766.4 451.9 L1767 455.8 L1767.5 449.4 L1768.1 443.1 L1768.7 447 L1769.3 448.9 L1769.9 450.5 L1770.5 449.2 L1771.1 451.5 L1771.7 447.9 L1772.3 451.9 L1772.9 440.4 L1773.4 449.3 L1774 452 L1774.6 439.9 L1775.2 444.9 L1775.8 449.3 L1776.4 450.5 L1777 446.7 L1777.6 446.6 L1778.2 451.1 L1778.8 446.8 L1779.3 435.6 L1779.9 440.4 L1780.5 442.7 L1781.1 446.7 L1781.7 443 L1782.3 440.5 L1782.9 446.3 L1783.5 441.3 L1784.1 450 L1784.7 448.5 L1785.2 453 L1785.8 446.7 L1786.4 453.5 L1787 454.3 L1787.6 453.5 L1788.2 452.6 L1788.8 452.1 L1789.4 449.2 L1790 446.1 L1790.6 447.5 L1791.1 441.5 L1791.7 451.9 L1792.3 453.2 L1792.9 453.9 L1793.5 452.1 L1794.1 455.5 L1794.7 452.5 L1795.3 454.7 L1795.9 454.5 L1796.5 454.5 L1797 454.8 L1797.6 448.8 L1798.2 452.3 L1798.8 453.9 L1799.4 454 L1800 456.6 L1800.6 440.6 L1801.2 450.9 L1801.8 444.1 L1802.4 442.7 L1802.9 439.2 L1803.5 451.7 L1804.1 453 L1804.7 453.9 L1805.3 452.3 L1805.9 448 L1806.5 455.3 L1807.1 448.1 L1807.7 452 L1808.3 453.7 L1808.8 454.7 L1809.4 454.3 L1810 452.7 L1810.6 457 L1811.2 454.2 L1811.8 456.7 L1812.4 456.5 L1813 455.9 L1813.6 454.8 L1814.2 455.9 L1814.7 454.3 L1815.3 455.1 L1815.9 453.5 L1816.5 454.1 L1817.1 454.7 L1817.7 454.9 L1818.3 456.2 L1818.9 453.2 L1819.5 454.7 L1820.1 454 L1820.6 448.5 L1821.2 455.2 L1821.8 458.1 L1822.4 457.2 L1823 453.3 L1823.6 439.4 L1824.2 457.5 L1824.8 456 L1825.4 454.2 L1826 452.6 L1826.5 453.4 L1827.1 457.4 L1827.7 455.9 L1828.3 453.8 L1828.9 457 L1829.5 454.8 L1830.1 455.5 L1830.7 448.9 L1831.3 449.3 L1831.9 451.3 L1832.4 447.2 L1833 452 L1833.6 452 L1834.2 453.7 L1834.8 453.9 L1835.4 453.4 L1836 454.2 L1836.6 453 L1837.2 453.1 L1837.8 455.6 L1838.3 455.4 L1838.9 453 L1839.5 453.7 L1840.1 453.8 L1840.7 455.8 L1841.3 454.8 L1841.9 453.5 L1842.5 455.8 L1843.1 454.7 L1843.7 454.9 L1844.2 454.8 L1844.8 456.2 L1845.4 454.4 L1846 457.9 L1846.6 457.5 L1847.2 456.3 L1847.8 458.9 L1848.4 452.5 L1849 452.6 L1849.6 452.4 L1850.1 452.1 L1850.7 453.4 L1851.3 451.8 L1851.9 454.1 L1852.5 452.3 L1853.1 439.4 L1853.7 446.3 L1854.3 453.8 L1854.9 454.1 L1855.5 453.3 L1856 456.9 L1856.6 457.3 L1857.2 455.3 L1857.8 451 L1858.4 456.1 L1859 456.3 L1859.6 453 L1860.2 451.7 L1860.8 455.6 L1861.4 452.9 L1861.9 454.2 L1862.5 455.3 L1863.1 456.1 L1863.7 449.3 L1864.3 452.3 L1864.9 454.2 L1865.5 451.3 L1866.1 457.7 L1866.7 459.8 L1867.3 456.1 L1867.8 458.3 L1868.4 458.7 L1869 452.4 L1869.6 459.3 L1870.2 458.5 L1870.8 458.8 L1871.4 457.1 L1872 458.9 L1872.6 458.5 L1873.2 455.9 L1873.7 456.1 L1874.3 459.1 L1874.9 457.1 L1875.5 453.6 L1876.1 455.9 L1876.7 454.6 L1877.3 456.3 L1877.9 454.9 L1878.5 455.2 L1879.1 456.4 L1879.6 456.2 L1880.2 454.2 L1880.8 458.8 L1881.4 455.8 L1882 455.9 L1882.6 457.2 L1883.2 455.8 L1883.8 455.2 L1884.4 459.5 L1885 457.2 L1885.5 457.8 L1886.1 456.4 L1886.7 456.3 L1887.3 454.9 L1887.9 449 L1888.5 452.1 L1889.1 454.2 L1889.7 455.3 L1890.3 453.4 L1890.9 455.7 L1891.4 454 L1892 455.3 L1892.6 455.8 L1893.2 453.6 L1893.8 454.4 L1894.4 450.7 L1895 455.5 L1895.6 453.3 L1895.6 467.5 L1047.8 467.5 Z" fill="#3f699d" fill-opacity="0.2" stroke="none"/>
<path d="M1047.8 454 L1048.3 444.4 L1048.9 449.5 L1049.5 453.5 L1050.1 453 L1050.7 452.1 L1051.3 455.5 L1051.9 452.5 L1052.5 451.1 L1053.1 448.9 L1053.6 456.1 L1054.2 454.3 L1054.8 456.2 L1055.4 447.5 L1056 449 L1056.6 456.7 L1057.2 447 L1057.8 448.8 L1058.4 453 L1059 453.3 L1059.5 457 L1060.1 457.8 L1060.7 454.1 L1061.3 457.6 L1061.9 456.8 L1062.5 456.5 L1063.1 457.7 L1063.7 454.7 L1064.3 454.9 L1064.9 451.1 L1065.4 454.2 L1066 453.1 L1066.6 417.5 L1067.2 452.9 L1067.8 454.8 L1068.4 456.2 L1069 449.4 L1069.6 449.4 L1070.2 451.1 L1070.8 452.4 L1071.3 455.9 L1071.9 456.6 L1072.5 456.1 L1073.1 457.5 L1073.7 451.9 L1074.3 455.2 L1074.9 451 L1075.5 452.8 L1076.1 442.5 L1076.7 446.3 L1077.2 456.6 L1077.8 455.3 L1078.4 447.3 L1079 452.5 L1079.6 445.4 L1080.2 453 L1080.8 456.3 L1081.4 449.6 L1082 446.9 L1082.6 454.2 L1083.1 455.9 L1083.7 452.8 L1084.3 441.5 L1084.9 445 L1085.5 454.8 L1086.1 452.9 L1086.7 454.5 L1087.3 454.5 L1087.9 442.9 L1088.5 452.5 L1089 446.7 L1089.6 448.2 L1090.2 451.3 L1090.8 443 L1091.4 451.6 L1092 443.7 L1092.6 451.4 L1093.2 446.9 L1093.8 449.9 L1094.4 448.8 L1094.9 434.4 L1095.5 437.7 L1096.1 447.3 L1096.7 434.7 L1097.3 448.2 L1097.9 445.1 L1098.5 434.9 L1099.1 446 L1099.7 456.1 L1100.3 446.6 L1100.8 455.4 L1101.4 430.6 L1102 449 L1102.6 454.3 L1103.2 454.7 L1103.8 456.8 L1104.4 456.7 L1105 451 L1105.6 455.4 L1106.2 450.6 L1106.7 453.8 L1107.3 452.7 L1107.9 444.2 L1108.5 452.2 L1109.1 450.7 L1109.7 445.4 L1110.3 457.2 L1110.9 458.6 L1111.5 439.8 L1112.1 442.4 L1112.6 455.9 L1113.2 456.7 L1113.8 395.6 L1114.4 438.9 L1115 455.5 L1115.6 429.8 L1116.2 431.5 L1116.8 438 L1117.4 441.8 L1118 447.2 L1118.5 447.9 L1119.1 429.3 L1119.7 408.8 L1120.3 435.6 L1120.9 444.8 L1121.5 410 L1122.1 438 L1122.7 444.1 L1123.3 446.1 L1123.9 429.4 L1124.4 447.6 L1125 446.1 L1125.6 452.7 L1126.2 446.9 L1126.8 451.7 L1127.4 457.4 L1128 445.6 L1128.6 458.5 L1129.2 460.5 L1129.8 457.5 L1130.3 454.8 L1130.9 460.2 L1131.5 459 L1132.1 456.6 L1132.7 453.6 L1133.3 459.3 L1133.9 456.1 L1134.5 446.6 L1135.1 444.3 L1135.7 450.6 L1136.2 450 L1136.8 452 L1137.4 458.8 L1138 459.9 L1138.6 460.1 L1139.2 445.7 L1139.8 449.9 L1140.4 444.6 L1141 460.2 L1141.6 451.2 L1142.1 454 L1142.7 449.4 L1143.3 456.7 L1143.9 443.8 L1144.5 459.9 L1145.1 452.9 L1145.7 449.3 L1146.3 445.8 L1146.9 445.4 L1147.5 445.8 L1148 444.6 L1148.6 442.9 L1149.2 450 L1149.8 446 L1150.4 443.1 L1151 443.5 L1151.6 449.3 L1152.2 444.6 L1152.8 443.6 L1153.4 447.5 L1153.9 446.8 L1154.5 449.7 L1155.1 448.7 L1155.7 453.3 L1156.3 458.7 L1156.9 452.9 L1157.5 448 L1158.1 449.7 L1158.7 451.7 L1159.3 455.9 L1159.8 451.6 L1160.4 449.6 L1161 450.9 L1161.6 443.5 L1162.2 457.1 L1162.8 446.5 L1163.4 458.2 L1164 432.5 L1164.6 453 L1165.2 457 L1165.7 449.6 L1166.3 453.1 L1166.9 451.1 L1167.5 445.5 L1168.1 456.7 L1168.7 459.3 L1169.3 456.1 L1169.9 450 L1170.5 457.4 L1171.1 457.8 L1171.6 445.8 L1172.2 450.3 L1172.8 454 L1173.4 446 L1174 455.7 L1174.6 450.2 L1175.2 457.4 L1175.8 454.1 L1176.4 447.7 L1177 445.6 L1177.5 446.3 L1178.1 454.9 L1178.7 451.7 L1179.3 455.8 L1179.9 458.1 L1180.5 453.1 L1181.1 447.1 L1181.7 447.2 L1182.3 450 L1182.9 432.5 L1183.4 456.7 L1184 457.9 L1184.6 454.7 L1185.2 456.8 L1185.8 457.5 L1186.4 455.2 L1187 452.4 L1187.6 454.2 L1188.2 456.4 L1188.8 449.2 L1189.3 446.9 L1189.9 454.7 L1190.5 458.8 L1191.1 459.1 L1191.7 448.6 L1192.3 459 L1192.9 451.1 L1193.5 453.1 L1194.1 456.5 L1194.7 449.9 L1195.2 459.1 L1195.8 458.3 L1196.4 454.7 L1197 459.1 L1197.6 449.3 L1198.2 457.3 L1198.8 458.2 L1199.4 459 L1200 452.3 L1200.6 454.8 L1201.1 452.3 L1201.7 451.9 L1202.3 449.7 L1202.9 446.4 L1203.5 449.5 L1204.1 454.4 L1204.7 449.5 L1205.3 452.1 L1205.9 452.5 L1206.5 445.1 L1207 440.7 L1207.6 453.5 L1208.2 455.4 L1208.8 454.5 L1209.4 449.2 L1210 452 L1210.6 450.6 L1211.2 448.3 L1211.8 453.8 L1212.4 447.7 L1212.9 445.7 L1213.5 457.4 L1214.1 445.2 L1214.7 448.8 L1215.3 457 L1215.9 453 L1216.5 450.4 L1217.1 445.6 L1217.7 454.1 L1218.3 451.3 L1218.8 446.2 L1219.4 447.6 L1220 445 L1220.6 452.8 L1221.2 450 L1221.8 456.2 L1222.4 448.8 L1223 447.2 L1223.6 450.1 L1224.2 448.9 L1224.7 456.1 L1225.3 434.4 L1225.9 444.4 L1226.5 444.4 L1227.1 451.8 L1227.7 446.2 L1228.3 453.5 L1228.9 440.6 L1229.5 441.5 L1230.1 439.4 L1230.6 456.3 L1231.2 456.4 L1231.8 456.2 L1232.4 454.8 L1233 458.8 L1233.6 462.9 L1234.2 457.9 L1234.8 464 L1235.4 460.4 L1236 464.9 L1236.5 464.6 L1237.1 462.3 L1237.7 465.5 L1238.3 465.6 L1238.9 464 L1239.5 463 L1240.1 462.5 L1240.7 463.4 L1241.3 462.1 L1241.9 464.5 L1242.4 462.3 L1243 448.8 L1243.6 465.8 L1244.2 464.6 L1244.8 465.6 L1245.4 463.7 L1246 464.1 L1246.6 464.6 L1247.2 463.2 L1247.8 464.5 L1248.3 465.5 L1248.9 465.3 L1249.5 463.2 L1250.1 463 L1250.7 465.9 L1251.3 463.3 L1251.9 462.7 L1252.5 464.7 L1253.1 464.6 L1253.7 465.9 L1254.2 464.7 L1254.8 464.9 L1255.4 464.5 L1256 466.3 L1256.6 462.9 L1257.2 464.9 L1257.8 465.3 L1258.4 463.7 L1259 464.7 L1259.6 464.8 L1260.1 463.7 L1260.7 465.9 L1261.3 464.3 L1261.9 464.8 L1262.5 462.4 L1263.1 462.6 L1263.7 465.3 L1264.3 464.6 L1264.9 465.8 L1265.5 464.7 L1266 463.1 L1266.6 462.7 L1267.2 464.6 L1267.8 465.2 L1268.4 465.6 L1269 464 L1269.6 462.7 L1270.2 465.8 L1270.8 397.2 L1271.4 466 L1271.9 465.7 L1272.5 465.6 L1273.1 464.5 L1273.7 465.2 L1274.3 465 L1274.9 464.7 L1275.5 464.9 L1276.1 442.3 L1276.7 387.1 L1277.3 380.9 L1277.8 386.3 L1278.4 386.6 L1279 384.2 L1279.6 384.8 L1280.2 385.3 L1280.8 378.6 L1281.4 383.7 L1282 424 L1282.6 464.4 L1283.2 462.8 L1283.7 462.8 L1284.3 463.2 L1284.9 461.8 L1285.5 462.9 L1286.1 428.1 L1286.7 427.4 L1287.3 423.1 L1287.9 422.2 L1288.5 421 L1289.1 426.6 L1289.6 426.6 L1290.2 420.1 L1290.8 427.3 L1291.4 418.7 L1292 419.9 L1292.6 427.9 L1293.2 431.7 L1293.8 449.3 L1294.4 464.2 L1295 462.4 L1295.5 460.7 L1296.1 458.9 L1296.7 457.1 L1297.3 455.4 L1297.9 453.6 L1298.5 451.8 L1299.1 450.1 L1299.7 448.3 L1300.3 446.5 L1300.9 444.7 L1301.4 436.8 L1302 430.2 L1302.6 419.6 L1303.2 415.5 L1303.8 422.5 L1304.4 421.7 L1305 435.2 L1305.6 437.4 L1306.2 416.8 L1306.8 397.7 L1307.3 393.7 L1307.9 394 L1308.5 393.5 L1309.1 397.1 L1309.7 396.8 L1310.3 396.7 L1310.9 390.4 L1311.5 388.6 L1312.1 389.3 L1312.7 397.4 L1313.2 397.6 L1313.8 388.8 L1314.4 394.3 L1315 391 L1315.6 395.6 L1316.2 394.2 L1316.8 393.7 L1317.4 394.5 L1318 392.7 L1318.6 397.8 L1319.1 391.5 L1319.7 399.6 L1320.3 404.9 L1320.9 403 L1321.5 400.6 L1322.1 403.4 L1322.7 404.9 L1323.3 405 L1323.9 402.6 L1324.5 405.7 L1325 409.8 L1325.6 406.8 L1326.2 404.7 L1326.8 403.8 L1327.4 405.2 L1328 406.4 L1328.6 405.3 L1329.2 405.9 L1329.8 403 L1330.4 404.1 L1330.9 407.1 L1331.5 403.4 L1332.1 404.5 L1332.7 404.3 L1333.3 404 L1333.9 406.4 L1334.5 403.5 L1335.1 403.6 L1335.7 404.8 L1336.3 404.3 L1336.8 413.6 L1337.4 425.2 L1338 425.6 L1338.6 368 L1339.2 368.8 L1339.8 370 L1340.4 375.2 L1341 371.8 L1341.6 368.1 L1342.2 368.5 L1342.7 373.4 L1343.3 361.2 L1343.9 351.8 L1344.5 346 L1345.1 340.8 L1345.7 340.5 L1346.3 339.6 L1346.9 330.3 L1347.5 331.3 L1348.1 340.2 L1348.6 344.6 L1349.2 353.7 L1349.8 360.5 L1350.4 375 L1351 369.6 L1351.6 368.5 L1352.2 373.5 L1352.8 358.5 L1353.4 344.1 L1354 341.1 L1354.5 339.7 L1355.1 333 L1355.7 341.5 L1356.3 334.5 L1356.9 339.1 L1357.5 339.8 L1358.1 336.7 L1358.7 357 L1359.3 363.8 L1359.9 368.3 L1360.4 366.4 L1361 373.6 L1361.6 369 L1362.2 367.3 L1362.8 373.8 L1363.4 365.5 L1364 373.1 L1364.6 370.5 L1365.2 368.5 L1365.8 333.9 L1366.3 291.2 L1366.9 272.2 L1367.5 264.2 L1368.1 269.8 L1368.7 268.7 L1369.3 267.9 L1369.9 266.5 L1370.5 255.5 L1371.1 260.7 L1371.7 266.5 L1372.2 268 L1372.8 252.8 L1373.4 267.8 L1374 264.2 L1374.6 268.6 L1375.2 254.2 L1375.8 269.8 L1376.4 309.4 L1377 431.7 L1377.6 431.7 L1378.1 431.7 L1378.7 407.9 L1379.3 380.1 L1379.9 380.1 L1380.5 383.9 L1381.1 379.9 L1381.7 383 L1382.3 407.9 L1382.9 432.9 L1383.5 433 L1384 433.1 L1384.6 433.3 L1385.2 433.4 L1385.8 433.5 L1386.4 458.9 L1387 464.8 L1387.6 464.8 L1388.2 418.7 L1388.8 410 L1389.4 413.2 L1389.9 417.5 L1390.5 419.4 L1391.1 411.5 L1391.7 418.6 L1392.3 413 L1392.9 408.1 L1393.5 412.6 L1394.1 416.3 L1394.7 409.6 L1395.3 413.1 L1395.8 404.6 L1396.4 410.5 L1397 417.8 L1397.6 420.8 L1398.2 432.9 L1398.8 458.2 L1399.4 464.8 L1400 464.8 L1400.6 464.8 L1401.2 464.8 L1401.7 464.8 L1402.3 464.8 L1402.9 464.8 L1403.5 464.8 L1404.1 464.8 L1404.7 464.8 L1405.3 464.8 L1405.9 464.8 L1406.5 464.8 L1407.1 463.1 L1407.6 445 L1408.2 430.1 L1408.8 436.4 L1409.4 436.3 L1410 435.1 L1410.6 433.9 L1411.2 432.2 L1411.8 436.1 L1412.4 432.9 L1413 436.3 L1413.5 436.2 L1414.1 431.6 L1414.7 432.7 L1415.3 431.9 L1415.9 434.2 L1416.5 433.3 L1417.1 435.4 L1417.7 434.4 L1418.3 430.6 L1418.9 429.5 L1419.4 436.3 L1420 435 L1420.6 427.6 L1421.2 429.5 L1421.8 428 L1422.4 433.1 L1423 431.4 L1423.6 432.8 L1424.2 427.5 L1424.8 431.9 L1425.3 429.2 L1425.9 425.5 L1426.5 432.2 L1427.1 430.2 L1427.7 428.2 L1428.3 426.3 L1428.9 431.3 L1429.5 431.9 L1430.1 433.9 L1430.7 426.8 L1431.2 434 L1431.8 434 L1432.4 430.1 L1433 430.8 L1433.6 428.8 L1434.2 432.4 L1434.8 427.9 L1435.4 434 L1436 433.1 L1436.6 429.1 L1437.1 434 L1437.7 432.4 L1438.3 428.4 L1438.9 428.8 L1439.5 432.6 L1440.1 433.6 L1440.7 432 L1441.3 428.1 L1441.9 429.7 L1442.5 430.1 L1443 422.8 L1443.6 423.2 L1444.2 417.4 L1444.8 415.7 L1445.4 414.7 L1446 430 L1446.6 452.4 L1447.2 465.9 L1447.8 465.9 L1448.4 465.9 L1448.9 465.9 L1449.5 465.9 L1450.1 465.9 L1450.7 465.9 L1451.3 465.9 L1451.9 465.9 L1452.5 465.9 L1453.1 465.9 L1453.7 466 L1454.3 465.9 L1454.8 465.8 L1455.4 465.9 L1456 465.8 L1456.6 465.9 L1457.2 466 L1457.8 465.8 L1458.4 465.8 L1459 466 L1459.6 466.1 L1460.2 465.9 L1460.7 465.9 L1461.3 465.9 L1461.9 465.7 L1462.5 465.9 L1463.1 465.8 L1463.7 466.1 L1464.3 465.9 L1464.9 465.8 L1465.5 466.2 L1466.1 466.2 L1466.6 465.8 L1467.2 465.6 L1467.8 466.2 L1468.4 465.8 L1469 466.2 L1469.6 465.8 L1470.2 465.8 L1470.8 466.1 L1471.4 466.2 L1472 465.7 L1472.5 465.9 L1473.1 465.7 L1473.7 466.1 L1474.3 466.1 L1474.9 465.5 L1475.5 465.8 L1476.1 466 L1476.7 465.9 L1477.3 465.7 L1477.9 465.7 L1478.4 465.5 L1479 466.1 L1479.6 465.9 L1480.2 466 L1480.8 466 L1481.4 466 L1482 466 L1482.6 466 L1483.2 466 L1483.8 466 L1484.3 466 L1484.9 466 L1485.5 466 L1486.1 466 L1486.7 437.4 L1487.3 437.5 L1487.9 466 L1488.5 466 L1489.1 466 L1489.7 466 L1490.2 466 L1490.8 466 L1491.4 466 L1492 466 L1492.6 466 L1493.2 466 L1493.8 466 L1494.4 466 L1495 466 L1495.6 466 L1496.1 466 L1496.7 466 L1497.3 466 L1497.9 466 L1498.5 466 L1499.1 466 L1499.7 466 L1500.3 466 L1500.9 466 L1501.5 466 L1502 466 L1502.6 466 L1503.2 466 L1503.8 466 L1504.4 466 L1505 466 L1505.6 466 L1506.2 466 L1506.8 466 L1507.4 466 L1507.9 466 L1508.5 466 L1509.1 466 L1509.7 466 L1510.3 466 L1510.9 466 L1511.5 466 L1512.1 466 L1512.7 466 L1513.3 466 L1513.8 466 L1514.4 466 L1515 466 L1515.6 466 L1516.2 460.1 L1516.8 452 L1517.4 452.2 L1518 452.4 L1518.6 456.2 L1519.2 461.1 L1519.7 466 L1520.3 466 L1520.9 466 L1521.5 449 L1522.1 412.7 L1522.7 388.9 L1523.3 388.6 L1523.9 389 L1524.5 384.4 L1525.1 387.3 L1525.6 386.4 L1526.2 383.3 L1526.8 389 L1527.4 387.1 L1528 389.7 L1528.6 385.3 L1529.2 390.2 L1529.8 384.8 L1530.4 384.6 L1531 384.8 L1531.5 390 L1532.1 389 L1532.7 385.7 L1533.3 389.9 L1533.9 387.6 L1534.5 387.6 L1535.1 383.7 L1535.7 386.8 L1536.3 384.5 L1536.9 388.8 L1537.4 385.1 L1538 388 L1538.6 384 L1539.2 389.9 L1539.8 384.8 L1540.4 389.3 L1541 387.1 L1541.6 388.7 L1542.2 402.2 L1542.8 426.5 L1543.3 423.7 L1543.9 414.4 L1544.5 408.7 L1545.1 413.2 L1545.7 417.7 L1546.3 421.2 L1546.9 413.3 L1547.5 405.5 L1548.1 397.6 L1548.7 396.5 L1549.2 396.1 L1549.8 395.7 L1550.4 408.3 L1551 425.7 L1551.6 442.1 L1552.2 458 L1552.8 466 L1553.4 466 L1554 466 L1554.6 466 L1555.1 466 L1555.7 466 L1556.3 466 L1556.9 466 L1557.5 442.5 L1558.1 466 L1558.7 466 L1559.3 466 L1559.9 466 L1560.5 466 L1561 466 L1561.6 466 L1562.2 466 L1562.8 466 L1563.4 466 L1564 466 L1564.6 466 L1565.2 466 L1565.8 466 L1566.4 466 L1566.9 466 L1567.5 466 L1568.1 466 L1568.7 466 L1569.3 466 L1569.9 466 L1570.5 466 L1571.1 466 L1571.7 466 L1572.3 466 L1572.8 466 L1573.4 466 L1574 466 L1574.6 466 L1575.2 466 L1575.8 466 L1576.4 466 L1577 466 L1577.6 466 L1578.2 466 L1578.7 466 L1579.3 466 L1579.9 466 L1580.5 466 L1581.1 466 L1581.7 466 L1582.3 466 L1582.9 466 L1583.5 466 L1584.1 466 L1584.6 466 L1585.2 466 L1585.8 466 L1586.4 466 L1587 466 L1587.6 466 L1588.2 466 L1588.8 466 L1589.4 466 L1590 466 L1590.5 466 L1591.1 466 L1591.7 466 L1592.3 466 L1592.9 465 L1593.5 465.2 L1594.1 465.6 L1594.7 465.3 L1595.3 465.9 L1595.9 464.9 L1596.4 464.3 L1597 465.3 L1597.6 464.9 L1598.2 464.6 L1598.8 465.9 L1599.4 466 L1600 466 L1600.6 466 L1601.2 466 L1601.8 466 L1602.3 466 L1602.9 466 L1603.5 466 L1604.1 466 L1604.7 466 L1605.3 466 L1605.9 466 L1606.5 466 L1607.1 466 L1607.7 466 L1608.2 466 L1608.8 466 L1609.4 466 L1610 466 L1610.6 466 L1611.2 466 L1611.8 466 L1612.4 466 L1613 466 L1613.6 466 L1614.1 466 L1614.7 466 L1615.3 466 L1615.9 466 L1616.5 466 L1617.1 466 L1617.7 466 L1618.3 466 L1618.9 466 L1619.5 466 L1620 466 L1620.6 466 L1621.2 466 L1621.8 466 L1622.4 466 L1623 466 L1623.6 466 L1624.2 466 L1624.8 466 L1625.4 466 L1625.9 466 L1626.5 466 L1627.1 466 L1627.7 466 L1628.3 466 L1628.9 466 L1629.5 466 L1630.1 466 L1630.7 466 L1631.3 466 L1631.8 466 L1632.4 466 L1633 466 L1633.6 466 L1634.2 466 L1634.8 466 L1635.4 466 L1636 466 L1636.6 466 L1637.2 466 L1637.7 465.5 L1638.3 464.8 L1638.9 465.4 L1639.5 464.3 L1640.1 464.6 L1640.7 464.6 L1641.3 465.5 L1641.9 465.5 L1642.5 465.2 L1643.1 465.8 L1643.6 466 L1644.2 466 L1644.8 459.4 L1645.4 466 L1646 466 L1646.6 466.1 L1647.2 466 L1647.8 465.9 L1648.4 465.9 L1649 466 L1649.5 465.9 L1650.1 466.1 L1650.7 466 L1651.3 466.1 L1651.9 466.1 L1652.5 466 L1653.1 466 L1653.7 466 L1654.3 466.2 L1654.9 465.9 L1655.4 466 L1656 466.1 L1656.6 466.1 L1657.2 466.1 L1657.8 466.1 L1658.4 466.2 L1659 465.7 L1659.6 465.6 L1660.2 465.9 L1660.8 463.1 L1661.3 466 L1661.9 465.7 L1662.5 466.2 L1663.1 465.8 L1663.7 465.9 L1664.3 465.7 L1664.9 466.2 L1665.5 465.8 L1666.1 466.2 L1666.7 466 L1667.2 465.6 L1667.8 466.3 L1668.4 466.2 L1669 466.1 L1669.6 466.1 L1670.2 466.3 L1670.8 465.7 L1671.4 465.7 L1672 466.1 L1672.6 466 L1673.1 464.2 L1673.7 466.1 L1674.3 466.1 L1674.9 462.7 L1675.5 465.3 L1676.1 464.6 L1676.7 462.6 L1677.3 462.3 L1677.9 464.7 L1678.5 465.6 L1679 465.3 L1679.6 462.6 L1680.2 462.8 L1680.8 465.9 L1681.4 463.1 L1682 465.3 L1682.6 464.8 L1683.2 466 L1683.8 462.8 L1684.4 462.2 L1684.9 465.9 L1685.5 464 L1686.1 465.9 L1686.7 452.5 L1687.3 466.3 L1687.9 466.2 L1688.5 463.8 L1689.1 465.7 L1689.7 463.9 L1690.3 464.4 L1690.8 465.2 L1691.4 466.4 L1692 465.5 L1692.6 465 L1693.2 466 L1693.8 466.5 L1694.4 466.3 L1695 466.2 L1695.6 465.5 L1696.2 466.4 L1696.7 466.4 L1697.3 466.3 L1697.9 465.6 L1698.5 465.3 L1699.1 465.5 L1699.7 463.5 L1700.3 462.8 L1700.9 464.8 L1701.5 466.1 L1702.1 465.7 L1702.6 462.2 L1703.2 463.3 L1703.8 465.4 L1704.4 462.6 L1705 466.2 L1705.6 458.9 L1706.2 463.8 L1706.8 463.1 L1707.4 463 L1708 466.3 L1708.5 462.3 L1709.1 464.9 L1709.7 465.1 L1710.3 460.3 L1710.9 466.1 L1711.5 464.8 L1712.1 460.6 L1712.7 465 L1713.3 464.8 L1713.9 462.5 L1714.4 465.4 L1715 458.9 L1715.6 457.8 L1716.2 466.2 L1716.8 463.1 L1717.4 460.2 L1718 463.3 L1718.6 454.9 L1719.2 460.3 L1719.8 464.5 L1720.3 446.2 L1720.9 456.9 L1721.5 461.7 L1722.1 457.4 L1722.7 455.9 L1723.3 459.9 L1723.9 460.2 L1724.5 456.8 L1725.1 458.8 L1725.7 459.7 L1726.2 453.3 L1726.8 462.4 L1727.4 453.6 L1728 462.1 L1728.6 454.8 L1729.2 460.6 L1729.8 456.6 L1730.4 449.1 L1731 448.7 L1731.6 448.6 L1732.1 459.3 L1732.7 454.6 L1733.3 459 L1733.9 452.6 L1734.5 453.9 L1735.1 460.3 L1735.7 450.7 L1736.3 447 L1736.9 449 L1737.5 422.5 L1738 455.3 L1738.6 455.2 L1739.2 456.1 L1739.8 443.6 L1740.4 443.5 L1741 441.2 L1741.6 409.4 L1742.2 421 L1742.8 445.5 L1743.4 415.1 L1743.9 430.5 L1744.5 432.2 L1745.1 422.3 L1745.7 407.5 L1746.3 448.3 L1746.9 443.8 L1747.5 451 L1748.1 445 L1748.7 436.8 L1749.3 440.9 L1749.8 447.9 L1750.4 440.3 L1751 452.4 L1751.6 430.4 L1752.2 451.9 L1752.8 450 L1753.4 453.5 L1754 431.2 L1754.6 424 L1755.2 425.8 L1755.7 449.7 L1756.3 438.5 L1756.9 438.5 L1757.5 440.6 L1758.1 418.6 L1758.7 445.2 L1759.3 438.3 L1759.9 432.4 L1760.5 424.7 L1761.1 451.2 L1761.6 443 L1762.2 433.5 L1762.8 453.1 L1763.4 448.9 L1764 428.3 L1764.6 451.2 L1765.2 445.7 L1765.8 450.5 L1766.4 449.7 L1767 456.5 L1767.5 457.2 L1768.1 435.4 L1768.7 442.1 L1769.3 443.1 L1769.9 455 L1770.5 454.4 L1771.1 447.4 L1771.7 454.2 L1772.3 449 L1772.9 435.4 L1773.4 450.9 L1774 451.3 L1774.6 432.2 L1775.2 443.5 L1775.8 456.6 L1776.4 449.1 L1777 442.5 L1777.6 456 L1778.2 450.4 L1778.8 441.3 L1779.3 436.4 L1779.9 444.2 L1780.5 436 L1781.1 447.4 L1781.7 448 L1782.3 435.2 L1782.9 446 L1783.5 434.6 L1784.1 449.4 L1784.7 450.5 L1785.2 455 L1785.8 449.1 L1786.4 455.2 L1787 454.7 L1787.6 454.6 L1788.2 450.6 L1788.8 453.2 L1789.4 451 L1790 439.9 L1790.6 446.7 L1791.1 442.7 L1791.7 455.6 L1792.3 452.7 L1792.9 457.5 L1793.5 448.8 L1794.1 454.3 L1794.7 455.5 L1795.3 457.9 L1795.9 456.6 L1796.5 455.9 L1797 454.6 L1797.6 448.4 L1798.2 451.4 L1798.8 456.1 L1799.4 455.4 L1800 457.1 L1800.6 439.6 L1801.2 450.8 L1801.8 442.8 L1802.4 443.7 L1802.9 439.6 L1803.5 455.5 L1804.1 452.3 L1804.7 452.5 L1805.3 457.4 L1805.9 443.8 L1806.5 454.3 L1807.1 446.6 L1807.7 451.4 L1808.3 457.7 L1808.8 453.6 L1809.4 455.8 L1810 457.8 L1810.6 457.1 L1811.2 453.5 L1811.8 457.7 L1812.4 455.9 L1813 455 L1813.6 454 L1814.2 457.2 L1814.7 452.5 L1815.3 456.3 L1815.9 452.3 L1816.5 452.8 L1817.1 457.1 L1817.7 457.1 L1818.3 457.1 L1818.9 450.4 L1819.5 455.4 L1820.1 455.6 L1820.6 447.7 L1821.2 457.8 L1821.8 456.9 L1822.4 456.2 L1823 457.9 L1823.6 439.4 L1824.2 459.2 L1824.8 454.2 L1825.4 455 L1826 452.7 L1826.5 450.9 L1827.1 457.3 L1827.7 454.1 L1828.3 451.5 L1828.9 457.9 L1829.5 453.9 L1830.1 453.3 L1830.7 444.2 L1831.3 445.7 L1831.9 454.7 L1832.4 449.4 L1833 456.1 L1833.6 452.3 L1834.2 453.6 L1834.8 457.4 L1835.4 455 L1836 455.5 L1836.6 453.9 L1837.2 456 L1837.8 457 L1838.3 454.8 L1838.9 454.1 L1839.5 456.9 L1840.1 452.1 L1840.7 456.3 L1841.3 457.4 L1841.9 455.4 L1842.5 454.7 L1843.1 457.2 L1843.7 453.7 L1844.2 452.8 L1844.8 454.6 L1845.4 453.5 L1846 459.1 L1846.6 456.9 L1847.2 457.4 L1847.8 459.2 L1848.4 455.4 L1849 458.5 L1849.6 451.2 L1850.1 448.1 L1850.7 450.6 L1851.3 453.5 L1851.9 454.8 L1852.5 458.1 L1853.1 439.4 L1853.7 440.7 L1854.3 451.3 L1854.9 458 L1855.5 453.8 L1856 459.1 L1856.6 456.2 L1857.2 454.4 L1857.8 449.9 L1858.4 457.4 L1859 454.9 L1859.6 450 L1860.2 452 L1860.8 453 L1861.4 453 L1861.9 455.9 L1862.5 455.8 L1863.1 457.5 L1863.7 449.9 L1864.3 449.2 L1864.9 456.2 L1865.5 450.3 L1866.1 460.1 L1866.7 459.7 L1867.3 456.8 L1867.8 458.5 L1868.4 458.1 L1869 452.2 L1869.6 459.6 L1870.2 459.3 L1870.8 459.1 L1871.4 455.2 L1872 459 L1872.6 460.3 L1873.2 456.3 L1873.7 457.5 L1874.3 458.8 L1874.9 456.2 L1875.5 454.5 L1876.1 455.8 L1876.7 455.1 L1877.3 455.9 L1877.9 453.2 L1878.5 451.9 L1879.1 458.3 L1879.6 458.2 L1880.2 453.5 L1880.8 458.6 L1881.4 455.5 L1882 455.8 L1882.6 456.1 L1883.2 454 L1883.8 455.4 L1884.4 459.7 L1885 457.2 L1885.5 456.8 L1886.1 455 L1886.7 455.4 L1887.3 455 L1887.9 449.9 L1888.5 452.3 L1889.1 455.1 L1889.7 455 L1890.3 454.3 L1890.9 455.6 L1891.4 452.5 L1892 455.9 L1892.6 456.3 L1893.2 456.3 L1893.8 456.1 L1894.4 450.4 L1895 456 L1895.6 453.1 L1895.6 467.5 L1047.8 467.5 Z" fill="#9e3b39" fill-opacity="0.2" stroke="none"/>
<path d="M1047.8 453.9 L1048.3 444.4 L1048.9 450.5 L1049.5 454.5 L1050.1 454.4 L1050.7 452.9 L1051.3 455.3 L1051.9 451.2 L1052.5 450.8 L1053.1 449.8 L1053.6 454.3 L1054.2 452.6 L1054.8 456 L1055.4 449.5 L1056 451.6 L1056.6 452.6 L1057.2 451 L1057.8 449.5 L1058.4 454.8 L1059 453.1 L1059.5 456.5 L1060.1 456.7 L1060.7 452.9 L1061.3 457.7 L1061.9 457.1 L1062.5 454 L1063.1 456.4 L1063.7 455.8 L1064.3 452.8 L1064.9 450.6 L1065.4 455.5 L1066 453.9 L1066.6 417.5 L1067.2 454.1 L1067.8 454.2 L1068.4 456.5 L1069 450.7 L1069.6 452.7 L1070.2 453.4 L1070.8 452 L1071.3 455.7 L1071.9 456 L1072.5 455.1 L1073.1 456.4 L1073.7 453.3 L1074.3 456.2 L1074.9 451.5 L1075.5 448.8 L1076.1 442.3 L1076.7 447.4 L1077.2 455.5 L1077.8 454.7 L1078.4 448.4 L1079 451.5 L1079.6 449.6 L1080.2 453.8 L1080.8 455.1 L1081.4 450.2 L1082 446.7 L1082.6 452.9 L1083.1 456.1 L1083.7 449.6 L1084.3 445.3 L1084.9 446.7 L1085.5 454.3 L1086.1 451.8 L1086.7 452.9 L1087.3 450.1 L1087.9 447.2 L1088.5 450.3 L1089 448.9 L1089.6 446.7 L1090.2 451.9 L1090.8 445.8 L1091.4 450.5 L1092 443.8 L1092.6 451.7 L1093.2 446.6 L1093.8 449.9 L1094.4 448.7 L1094.9 438.7 L1095.5 436.3 L1096.1 446 L1096.7 434 L1097.3 448.5 L1097.9 440.3 L1098.5 439.4 L1099.1 448.6 L1099.7 453.6 L1100.3 447 L1100.8 455.9 L1101.4 430.6 L1102 449 L1102.6 454.3 L1103.2 454.9 L1103.8 456.9 L1104.4 456.9 L1105 450.8 L1105.6 451.1 L1106.2 448 L1106.7 453.1 L1107.3 454.6 L1107.9 448.3 L1108.5 450.1 L1109.1 448.9 L1109.7 447 L1110.3 456.9 L1110.9 455.3 L1111.5 444.5 L1112.1 444.4 L1112.6 455.8 L1113.2 449.5 L1113.8 395.6 L1114.4 446 L1115 454.8 L1115.6 430.6 L1116.2 436.7 L1116.8 434.8 L1117.4 441 L1118 442.6 L1118.5 443 L1119.1 435.8 L1119.7 408.8 L1120.3 439.3 L1120.9 441.3 L1121.5 410 L1122.1 441.5 L1122.7 438.9 L1123.3 444.3 L1123.9 429.4 L1124.4 445.1 L1125 439.4 L1125.6 452.7 L1126.2 448.8 L1126.8 449.2 L1127.4 452.3 L1128 446.9 L1128.6 457.2 L1129.2 457.2 L1129.8 452.9 L1130.3 452.3 L1130.9 457.2 L1131.5 458.1 L1132.1 456.6 L1132.7 452.5 L1133.3 456.9 L1133.9 457.7 L1134.5 448 L1135.1 444.9 L1135.7 449.6 L1136.2 448.4 L1136.8 449.5 L1137.4 456.4 L1138 455.2 L1138.6 458.3 L1139.2 451.2 L1139.8 452.3 L1140.4 449.4 L1141 454.2 L1141.6 450.8 L1142.1 453.5 L1142.7 450.2 L1143.3 457.7 L1143.9 447.5 L1144.5 455.9 L1145.1 454 L1145.7 452.7 L1146.3 449.5 L1146.9 447.4 L1147.5 445.9 L1148 447.6 L1148.6 446.7 L1149.2 450.2 L1149.8 446 L1150.4 443.9 L1151 444.7 L1151.6 446.6 L1152.2 446.7 L1152.8 447.3 L1153.4 447.9 L1153.9 447.7 L1154.5 450.5 L1155.1 448.2 L1155.7 454.5 L1156.3 458.2 L1156.9 454.3 L1157.5 448.3 L1158.1 453.5 L1158.7 453.5 L1159.3 456.3 L1159.8 454.1 L1160.4 450.6 L1161 452.4 L1161.6 442.8 L1162.2 454.6 L1162.8 446.9 L1163.4 457.7 L1164 432.5 L1164.6 452.2 L1165.2 453 L1165.7 452.5 L1166.3 453.3 L1166.9 449.4 L1167.5 446.2 L1168.1 456.8 L1168.7 456.5 L1169.3 453 L1169.9 451.9 L1170.5 454.5 L1171.1 454.8 L1171.6 445.2 L1172.2 451.1 L1172.8 452.4 L1173.4 449.8 L1174 453 L1174.6 452.4 L1175.2 455.7 L1175.8 454.6 L1176.4 451 L1177 450.6 L1177.5 450.6 L1178.1 453.8 L1178.7 453.7 L1179.3 457.1 L1179.9 454 L1180.5 454.4 L1181.1 446.3 L1181.7 448.9 L1182.3 452 L1182.9 432.5 L1183.4 453.1 L1184 457.3 L1184.6 456.2 L1185.2 455 L1185.8 454.1 L1186.4 454.2 L1187 451.4 L1187.6 454.6 L1188.2 454.8 L1188.8 452.3 L1189.3 450.3 L1189.9 455.1 L1190.5 457.5 L1191.1 457.6 L1191.7 449.1 L1192.3 458.6 L1192.9 453.7 L1193.5 454.7 L1194.1 452.7 L1194.7 451.5 L1195.2 459 L1195.8 454.6 L1196.4 452.3 L1197 455.2 L1197.6 451.9 L1198.2 454.7 L1198.8 457.5 L1199.4 458.7 L1200 450.9 L1200.6 452.6 L1201.1 454.4 L1201.7 450.6 L1202.3 453.4 L1202.9 450.1 L1203.5 452.5 L1204.1 454.5 L1204.7 451.1 L1205.3 448.9 L1205.9 451.2 L1206.5 446.8 L1207 444.3 L1207.6 452.8 L1208.2 451.8 L1208.8 453 L1209.4 452.5 L1210 451 L1210.6 451 L1211.2 450.2 L1211.8 453.1 L1212.4 448.6 L1212.9 446.4 L1213.5 455.3 L1214.1 447.2 L1214.7 450.4 L1215.3 454.3 L1215.9 453.4 L1216.5 451.7 L1217.1 448.2 L1217.7 452 L1218.3 452.9 L1218.8 445.8 L1219.4 449.5 L1220 445.6 L1220.6 451.4 L1221.2 447.9 L1221.8 453.5 L1222.4 450.6 L1223 449.8 L1223.6 450.4 L1224.2 448.7 L1224.7 452.4 L1225.3 434.4 L1225.9 449.7 L1226.5 449.5 L1227.1 454 L1227.7 450.7 L1228.3 455 L1228.9 445.9 L1229.5 447.2 L1230.1 439.4 L1230.6 452.7 L1231.2 453.7 L1231.8 454.2 L1232.4 454.9 L1233 456.8 L1233.6 462.9 L1234.2 459.7 L1234.8 461.7 L1235.4 461.2 L1236 464.9 L1236.5 463.8 L1237.1 463.1 L1237.7 464.8 L1238.3 465.3 L1238.9 464.5 L1239.5 464.2 L1240.1 463 L1240.7 462.8 L1241.3 462 L1241.9 464 L1242.4 462.3 L1243 448.8 L1243.6 465.7 L1244.2 463.8 L1244.8 465 L1245.4 463.8 L1246 465 L1246.6 465.1 L1247.2 463.8 L1247.8 464.2 L1248.3 464.6 L1248.9 464.6 L1249.5 464.1 L1250.1 463.9 L1250.7 464.8 L1251.3 463 L1251.9 463.6 L1252.5 465.2 L1253.1 464.5 L1253.7 465.4 L1254.2 465 L1254.8 465.3 L1255.4 464.8 L1256 465.6 L1256.6 464.2 L1257.2 464.8 L1257.8 464.4 L1258.4 463.8 L1259 465.1 L1259.6 465 L1260.1 464.5 L1260.7 464.9 L1261.3 464.2 L1261.9 465.1 L1262.5 463.2 L1263.1 463.2 L1263.7 464.9 L1264.3 464.7 L1264.9 465.5 L1265.5 464.9 L1266 462.7 L1266.6 463.7 L1267.2 464.5 L1267.8 465 L1268.4 465.6 L1269 464.3 L1269.6 463.9 L1270.2 465.6 L1270.8 397.2 L1271.4 465.7 L1271.9 464.8 L1272.5 465.6 L1273.1 464.8 L1273.7 464.9 L1274.3 465 L1274.9 464.8 L1275.5 464.8 L1276.1 442.7 L1276.7 385.7 L1277.3 380.9 L1277.8 386.3 L1278.4 384.7 L1279 382.5 L1279.6 384 L1280.2 385.8 L1280.8 378.6 L1281.4 384.6 L1282 422.2 L1282.6 464.4 L1283.2 463.4 L1283.7 462.8 L1284.3 463 L1284.9 462.3 L1285.5 463.1 L1286.1 427.8 L1286.7 426.7 L1287.3 422.3 L1287.9 423.8 L1288.5 422.8 L1289.1 426.5 L1289.6 425 L1290.2 420.9 L1290.8 427.2 L1291.4 420.9 L1292 420.7 L1292.6 426.5 L1293.2 430.1 L1293.8 449.5 L1294.4 464.2 L1295 462.4 L1295.5 460.7 L1296.1 458.9 L1296.7 457.1 L1297.3 455.4 L1297.9 453.6 L1298.5 451.8 L1299.1 450.1 L1299.7 448.3 L1300.3 446.5 L1300.9 444.7 L1301.4 437.3 L1302 430 L1302.6 419.9 L1303.2 418.5 L1303.8 425.1 L1304.4 426.7 L1305 434.6 L1305.6 437.3 L1306.2 416.8 L1306.8 395 L1307.3 394.3 L1307.9 394.1 L1308.5 393.3 L1309.1 394 L1309.7 396.9 L1310.3 396.6 L1310.9 390.3 L1311.5 388.9 L1312.1 389.2 L1312.7 395.9 L1313.2 396.7 L1313.8 392 L1314.4 392.3 L1315 391 L1315.6 394.7 L1316.2 392.7 L1316.8 394.7 L1317.4 394.1 L1318 391.2 L1318.6 397.6 L1319.1 391.8 L1319.7 401.7 L1320.3 402.8 L1320.9 401.7 L1321.5 400.9 L1322.1 403.3 L1322.7 405.2 L1323.3 404.1 L1323.9 403 L1324.5 404.8 L1325 411.1 L1325.6 406.5 L1326.2 405.1 L1326.8 404.5 L1327.4 404.6 L1328 405.2 L1328.6 405.4 L1329.2 405.8 L1329.8 403.3 L1330.4 405.1 L1330.9 405.7 L1331.5 405.2 L1332.1 404.4 L1332.7 404.9 L1333.3 404.5 L1333.9 405 L1334.5 405 L1335.1 404.7 L1335.7 404.5 L1336.3 404.4 L1336.8 414 L1337.4 424.9 L1338 425.6 L1338.6 366.4 L1339.2 367.5 L1339.8 370.6 L1340.4 374.1 L1341 372.9 L1341.6 370.6 L1342.2 371.1 L1342.7 369.5 L1343.3 365 L1343.9 352.1 L1344.5 346.7 L1345.1 339.1 L1345.7 340.8 L1346.3 341.5 L1346.9 330.3 L1347.5 332.3 L1348.1 338 L1348.6 347.1 L1349.2 355.6 L1349.8 362.4 L1350.4 374.2 L1351 369.8 L1351.6 368.7 L1352.2 371.6 L1352.8 356.7 L1353.4 341.4 L1354 340.8 L1354.5 338 L1355.1 333 L1355.7 341.8 L1356.3 338.1 L1356.9 338.8 L1357.5 340.5 L1358.1 340.5 L1358.7 357.3 L1359.3 366.6 L1359.9 369.7 L1360.4 367.5 L1361 372 L1361.6 369.3 L1362.2 366.2 L1362.8 370.5 L1363.4 368.1 L1364 370.4 L1364.6 371.1 L1365.2 367.7 L1365.8 334.3 L1366.3 291.9 L1366.9 269.5 L1367.5 264.2 L1368.1 268.7 L1368.7 269.8 L1369.3 269.5 L1369.9 261.3 L1370.5 255.5 L1371.1 264.3 L1371.7 266.5 L1372.2 263.6 L1372.8 252.8 L1373.4 261.7 L1374 264.2 L1374.6 267.3 L1375.2 254.2 L1375.8 268.8 L1376.4 310.1 L1377 431.7 L1377.6 431.7 L1378.1 431.7 L1378.7 407.7 L1379.3 381.2 L1379.9 381.3 L1380.5 383.9 L1381.1 381.6 L1381.7 382.9 L1382.3 407.3 L1382.9 432.9 L1383.5 433 L1384 433.1 L1384.6 433.3 L1385.2 433.4 L1385.8 433.5 L1386.4 458.9 L1387 464.8 L1387.6 464.8 L1388.2 415.6 L1388.8 413.2 L1389.4 413.1 L1389.9 415.8 L1390.5 418.9 L1391.1 413.9 L1391.7 416.6 L1392.3 414.9 L1392.9 408.5 L1393.5 413.6 L1394.1 409.7 L1394.7 408.7 L1395.3 412.3 L1395.8 407.8 L1396.4 411.7 L1397 421.8 L1397.6 420.7 L1398.2 431.5 L1398.8 457.4 L1399.4 464.8 L1400 464.8 L1400.6 464.8 L1401.2 464.8 L1401.7 464.8 L1402.3 464.8 L1402.9 464.8 L1403.5 464.8 L1404.1 464.8 L1404.7 464.8 L1405.3 464.8 L1405.9 464.8 L1406.5 464.8 L1407.1 463.2 L1407.6 445.7 L1408.2 430.7 L1408.8 435 L1409.4 436.2 L1410 432.6 L1410.6 433.7 L1411.2 431.1 L1411.8 436 L1412.4 433.8 L1413 434.9 L1413.5 435.8 L1414.1 430.8 L1414.7 433.7 L1415.3 433.7 L1415.9 434.8 L1416.5 434 L1417.1 432.7 L1417.7 432.3 L1418.3 430.9 L1418.9 431.2 L1419.4 436.3 L1420 432.4 L1420.6 430.1 L1421.2 431 L1421.8 429.3 L1422.4 430.6 L1423 432.2 L1423.6 433.3 L1424.2 427.1 L1424.8 432.8 L1425.3 428.8 L1425.9 428.7 L1426.5 432.3 L1427.1 431.4 L1427.7 429.4 L1428.3 426.3 L1428.9 429.7 L1429.5 431.3 L1430.1 433.9 L1430.7 429.4 L1431.2 433.4 L1431.8 431.4 L1432.4 428.6 L1433 432.2 L1433.6 430.2 L1434.2 429.8 L1434.8 430.1 L1435.4 434 L1436 433 L1436.6 428.1 L1437.1 433.5 L1437.7 430.8 L1438.3 430.6 L1438.9 428.9 L1439.5 432.9 L1440.1 432.1 L1440.7 430.5 L1441.3 427.4 L1441.9 429.4 L1442.5 426.3 L1443 424.2 L1443.6 421.3 L1444.2 417.4 L1444.8 415.4 L1445.4 418.5 L1446 430.6 L1446.6 452.6 L1447.2 465.9 L1447.8 465.9 L1448.4 465.9 L1448.9 465.9 L1449.5 465.9 L1450.1 465.9 L1450.7 465.9 L1451.3 465.9 L1451.9 465.9 L1452.5 465.9 L1453.1 465.9 L1453.7 465.9 L1454.3 465.9 L1454.8 465.8 L1455.4 465.9 L1456 465.8 L1456.6 466 L1457.2 465.9 L1457.8 465.9 L1458.4 465.8 L1459 465.9 L1459.6 466 L1460.2 465.9 L1460.7 466 L1461.3 465.9 L1461.9 465.7 L1462.5 466 L1463.1 465.7 L1463.7 466.1 L1464.3 465.9 L1464.9 465.9 L1465.5 466 L1466.1 466.2 L1466.6 465.9 L1467.2 465.9 L1467.8 466.2 L1468.4 465.9 L1469 465.9 L1469.6 465.9 L1470.2 465.9 L1470.8 466.1 L1471.4 466.1 L1472 465.9 L1472.5 466.1 L1473.1 465.8 L1473.7 466.1 L1474.3 466.2 L1474.9 465.8 L1475.5 465.7 L1476.1 465.9 L1476.7 465.7 L1477.3 465.7 L1477.9 465.7 L1478.4 465.8 L1479 466.1 L1479.6 465.8 L1480.2 466 L1480.8 466 L1481.4 466 L1482 466 L1482.6 466 L1483.2 466 L1483.8 466 L1484.3 466 L1484.9 466 L1485.5 466 L1486.1 466 L1486.7 437.4 L1487.3 437.5 L1487.9 466 L1488.5 466 L1489.1 466 L1489.7 466 L1490.2 466 L1490.8 466 L1491.4 466 L1492 466 L1492.6 466 L1493.2 466 L1493.8 466 L1494.4 466 L1495 466 L1495.6 466 L1496.1 466 L1496.7 466 L1497.3 466 L1497.9 466 L1498.5 466 L1499.1 466 L1499.7 466 L1500.3 466 L1500.9 466 L1501.5 466 L1502 466 L1502.6 466 L1503.2 466 L1503.8 466 L1504.4 466 L1505 466 L1505.6 466 L1506.2 466 L1506.8 466 L1507.4 466 L1507.9 466 L1508.5 466 L1509.1 466 L1509.7 466 L1510.3 466 L1510.9 466 L1511.5 466 L1512.1 466 L1512.7 466 L1513.3 466 L1513.8 466 L1514.4 466 L1515 466 L1515.6 466 L1516.2 460.1 L1516.8 452 L1517.4 452.2 L1518 452.4 L1518.6 456.2 L1519.2 461.1 L1519.7 466 L1520.3 466 L1520.9 466 L1521.5 449.1 L1522.1 412.7 L1522.7 388.1 L1523.3 388.6 L1523.9 386.8 L1524.5 385.6 L1525.1 386.8 L1525.6 385.4 L1526.2 383.3 L1526.8 389.5 L1527.4 385.8 L1528 389.7 L1528.6 384.6 L1529.2 388.2 L1529.8 386.5 L1530.4 385.1 L1531 385.7 L1531.5 389.1 L1532.1 388 L1532.7 386.5 L1533.3 388.4 L1533.9 386.9 L1534.5 388.7 L1535.1 384.7 L1535.7 386.4 L1536.3 384.5 L1536.9 388.1 L1537.4 385.9 L1538 388.7 L1538.6 386.2 L1539.2 387.6 L1539.8 386.9 L1540.4 387.3 L1541 388.2 L1541.6 388.9 L1542.2 402.2 L1542.8 426.5 L1543.3 423.7 L1543.9 414.4 L1544.5 408.7 L1545.1 413.2 L1545.7 417.7 L1546.3 421.2 L1546.9 413.3 L1547.5 405.5 L1548.1 397.6 L1548.7 396.5 L1549.2 396.1 L1549.8 395.7 L1550.4 408.3 L1551 425.7 L1551.6 442.1 L1552.2 458 L1552.8 466 L1553.4 466 L1554 466 L1554.6 466 L1555.1 466 L1555.7 466 L1556.3 466 L1556.9 466 L1557.5 419.4 L1558.1 466 L1558.7 466 L1559.3 466 L1559.9 466 L1560.5 466 L1561 466 L1561.6 466 L1562.2 466 L1562.8 466 L1563.4 466 L1564 466 L1564.6 466 L1565.2 466 L1565.8 466 L1566.4 466 L1566.9 466 L1567.5 466 L1568.1 466 L1568.7 466 L1569.3 466 L1569.9 466 L1570.5 466 L1571.1 466 L1571.7 466 L1572.3 466 L1572.8 466 L1573.4 466 L1574 466 L1574.6 466 L1575.2 466 L1575.8 466 L1576.4 466 L1577 466 L1577.6 466 L1578.2 466 L1578.7 466 L1579.3 466 L1579.9 466 L1580.5 466 L1581.1 466 L1581.7 466 L1582.3 466 L1582.9 466 L1583.5 466 L1584.1 466 L1584.6 466 L1585.2 466 L1585.8 466 L1586.4 466 L1587 466 L1587.6 466 L1588.2 466 L1588.8 466 L1589.4 466 L1590 466 L1590.5 466 L1591.1 466 L1591.7 466 L1592.3 466 L1592.9 465.4 L1593.5 465 L1594.1 465.6 L1594.7 465.5 L1595.3 465.5 L1595.9 464.6 L1596.4 464.9 L1597 465.2 L1597.6 465.3 L1598.2 464.7 L1598.8 465.5 L1599.4 466 L1600 466 L1600.6 466 L1601.2 466 L1601.8 466 L1602.3 466 L1602.9 466 L1603.5 466 L1604.1 466 L1604.7 466 L1605.3 466 L1605.9 466 L1606.5 466 L1607.1 466 L1607.7 466 L1608.2 466 L1608.8 466 L1609.4 466 L1610 466 L1610.6 466 L1611.2 466 L1611.8 466 L1612.4 466 L1613 466 L1613.6 466 L1614.1 466 L1614.7 466 L1615.3 466 L1615.9 466 L1616.5 466 L1617.1 466 L1617.7 466 L1618.3 466 L1618.9 466 L1619.5 466 L1620 466 L1620.6 466 L1621.2 466 L1621.8 466 L1622.4 466 L1623 466 L1623.6 466 L1624.2 466 L1624.8 466 L1625.4 466 L1625.9 466 L1626.5 466 L1627.1 466 L1627.7 466 L1628.3 466 L1628.9 466 L1629.5 466 L1630.1 466 L1630.7 466 L1631.3 466 L1631.8 466 L1632.4 466 L1633 466 L1633.6 466 L1634.2 466 L1634.8 466 L1635.4 466 L1636 466 L1636.6 466 L1637.2 466 L1637.7 465.7 L1638.3 464.9 L1638.9 465.1 L1639.5 464.8 L1640.1 465.1 L1640.7 464.5 L1641.3 465.3 L1641.9 465.5 L1642.5 465.5 L1643.1 465.9 L1643.6 466 L1644.2 466 L1644.8 459.4 L1645.4 466 L1646 466 L1646.6 466.1 L1647.2 466 L1647.8 465.9 L1648.4 465.9 L1649 466 L1649.5 465.9 L1650.1 466.1 L1650.7 466 L1651.3 466 L1651.9 466.1 L1652.5 466 L1653.1 466 L1653.7 466 L1654.3 466.1 L1654.9 466 L1655.4 466 L1656 466 L1656.6 466 L1657.2 466.1 L1657.8 466 L1658.4 466.2 L1659 465.8 L1659.6 465.6 L1660.2 466 L1660.8 463.1 L1661.3 466 L1661.9 465.8 L1662.5 466.2 L1663.1 465.9 L1663.7 466 L1664.3 465.8 L1664.9 466.2 L1665.5 465.7 L1666.1 466 L1666.7 465.9 L1667.2 465.8 L1667.8 466.1 L1668.4 466.1 L1669 466 L1669.6 465.9 L1670.2 466.2 L1670.8 465.7 L1671.4 465.7 L1672 466.1 L1672.6 466 L1673.1 464.9 L1673.7 464.7 L1674.3 465.9 L1674.9 464.1 L1675.5 465.6 L1676.1 464.5 L1676.7 463 L1677.3 462.5 L1677.9 464.3 L1678.5 465.8 L1679 464.2 L1679.6 462.7 L1680.2 462.9 L1680.8 464.6 L1681.4 463.1 L1682 464.7 L1682.6 464.3 L1683.2 466.1 L1683.8 462.6 L1684.4 463.9 L1684.9 465.5 L1685.5 464.1 L1686.1 465.3 L1686.7 452.5 L1687.3 465.6 L1687.9 465.9 L1688.5 463.9 L1689.1 466 L1689.7 464.6 L1690.3 464.7 L1690.8 465.5 L1691.4 466.5 L1692 465.7 L1692.6 465 L1693.2 465.9 L1693.8 466.1 L1694.4 466.2 L1695 465.7 L1695.6 465.6 L1696.2 465.9 L1696.7 466.1 L1697.3 465.9 L1697.9 465.8 L1698.5 465.2 L1699.1 464.4 L1699.7 462.9 L1700.3 462.8 L1700.9 465.1 L1701.5 466 L1702.1 464.7 L1702.6 462.5 L1703.2 463.5 L1703.8 464.7 L1704.4 464.2 L1705 464.9 L1705.6 461.9 L1706.2 463.5 L1706.8 464 L1707.4 462.7 L1708 466.1 L1708.5 463.2 L1709.1 463.2 L1709.7 464 L1710.3 462.5 L1710.9 463 L1711.5 465.4 L1712.1 461.9 L1712.7 463.4 L1713.3 463.8 L1713.9 462.1 L1714.4 462.8 L1715 461.7 L1715.6 459.8 L1716.2 465.7 L1716.8 462.6 L1717.4 461.4 L1718 462.2 L1718.6 455.7 L1719.2 460.3 L1719.8 463 L1720.3 446.2 L1720.9 459.9 L1721.5 458 L1722.1 459 L1722.7 457.5 L1723.3 458.2 L1723.9 458.7 L1724.5 456 L1725.1 458.7 L1725.7 459.7 L1726.2 456 L1726.8 459.4 L1727.4 454.6 L1728 462.6 L1728.6 455.1 L1729.2 457.5 L1729.8 457.3 L1730.4 448.6 L1731 449.2 L1731.6 447.7 L1732.1 458.9 L1732.7 453.3 L1733.3 456.6 L1733.9 454.3 L1734.5 455.3 L1735.1 460.1 L1735.7 448.7 L1736.3 450.5 L1736.9 450.9 L1737.5 422.5 L1738 452.1 L1738.6 452.2 L1739.2 447.5 L1739.8 447.8 L1740.4 444.6 L1741 435.2 L1741.6 409.4 L1742.2 431.3 L1742.8 440.8 L1743.4 413.5 L1743.9 423.2 L1744.5 435.6 L1745.1 423.1 L1745.7 395.6 L1746.3 449.1 L1746.9 434.7 L1747.5 450.4 L1748.1 435.7 L1748.7 438.8 L1749.3 437 L1749.8 446.1 L1750.4 436.6 L1751 445.3 L1751.6 438.8 L1752.2 453.2 L1752.8 451 L1753.4 446.5 L1754 440.5 L1754.6 435.8 L1755.2 432.3 L1755.7 449.8 L1756.3 439.7 L1756.9 435.2 L1757.5 440.5 L1758.1 420.8 L1758.7 443.6 L1759.3 439.7 L1759.9 437 L1760.5 426.7 L1761.1 451.9 L1761.6 438.2 L1762.2 441 L1762.8 442 L1763.4 445.3 L1764 430.3 L1764.6 447.2 L1765.2 442.3 L1765.8 446.5 L1766.4 451.9 L1767 455.8 L1767.5 449.4 L1768.1 443.1 L1768.7 447 L1769.3 448.9 L1769.9 450.5 L1770.5 449.2 L1771.1 451.5 L1771.7 447.9 L1772.3 451.9 L1772.9 440.4 L1773.4 449.3 L1774 452 L1774.6 439.9 L1775.2 444.9 L1775.8 449.3 L1776.4 450.5 L1777 446.7 L1777.6 446.6 L1778.2 451.1 L1778.8 446.8 L1779.3 435.6 L1779.9 440.4 L1780.5 442.7 L1781.1 446.7 L1781.7 443 L1782.3 440.5 L1782.9 446.3 L1783.5 441.3 L1784.1 450 L1784.7 448.5 L1785.2 453 L1785.8 446.7 L1786.4 453.5 L1787 454.3 L1787.6 453.5 L1788.2 452.6 L1788.8 452.1 L1789.4 449.2 L1790 446.1 L1790.6 447.5 L1791.1 441.5 L1791.7 451.9 L1792.3 453.2 L1792.9 453.9 L1793.5 452.1 L1794.1 455.5 L1794.7 452.5 L1795.3 454.7 L1795.9 454.5 L1796.5 454.5 L1797 454.8 L1797.6 448.8 L1798.2 452.3 L1798.8 453.9 L1799.4 454 L1800 456.6 L1800.6 440.6 L1801.2 450.9 L1801.8 444.1 L1802.4 442.7 L1802.9 439.2 L1803.5 451.7 L1804.1 453 L1804.7 453.9 L1805.3 452.3 L1805.9 448 L1806.5 455.3 L1807.1 448.1 L1807.7 452 L1808.3 453.7 L1808.8 454.7 L1809.4 454.3 L1810 452.7 L1810.6 457 L1811.2 454.2 L1811.8 456.7 L1812.4 456.5 L1813 455.9 L1813.6 454.8 L1814.2 455.9 L1814.7 454.3 L1815.3 455.1 L1815.9 453.5 L1816.5 454.1 L1817.1 454.7 L1817.7 454.9 L1818.3 456.2 L1818.9 453.2 L1819.5 454.7 L1820.1 454 L1820.6 448.5 L1821.2 455.2 L1821.8 458.1 L1822.4 457.2 L1823 453.3 L1823.6 439.4 L1824.2 457.5 L1824.8 456 L1825.4 454.2 L1826 452.6 L1826.5 453.4 L1827.1 457.4 L1827.7 455.9 L1828.3 453.8 L1828.9 457 L1829.5 454.8 L1830.1 455.5 L1830.7 448.9 L1831.3 449.3 L1831.9 451.3 L1832.4 447.2 L1833 452 L1833.6 452 L1834.2 453.7 L1834.8 453.9 L1835.4 453.4 L1836 454.2 L1836.6 453 L1837.2 453.1 L1837.8 455.6 L1838.3 455.4 L1838.9 453 L1839.5 453.7 L1840.1 453.8 L1840.7 455.8 L1841.3 454.8 L1841.9 453.5 L1842.5 455.8 L1843.1 454.7 L1843.7 454.9 L1844.2 454.8 L1844.8 456.2 L1845.4 454.4 L1846 457.9 L1846.6 457.5 L1847.2 456.3 L1847.8 458.9 L1848.4 452.5 L1849 452.6 L1849.6 452.4 L1850.1 452.1 L1850.7 453.4 L1851.3 451.8 L1851.9 454.1 L1852.5 452.3 L1853.1 439.4 L1853.7 446.3 L1854.3 453.8 L1854.9 454.1 L1855.5 453.3 L1856 456.9 L1856.6 457.3 L1857.2 455.3 L1857.8 451 L1858.4 456.1 L1859 456.3 L1859.6 453 L1860.2 451.7 L1860.8 455.6 L1861.4 452.9 L1861.9 454.2 L1862.5 455.3 L1863.1 456.1 L1863.7 449.3 L1864.3 452.3 L1864.9 454.2 L1865.5 451.3 L1866.1 457.7 L1866.7 459.8 L1867.3 456.1 L1867.8 458.3 L1868.4 458.7 L1869 452.4 L1869.6 459.3 L1870.2 458.5 L1870.8 458.8 L1871.4 457.1 L1872 458.9 L1872.6 458.5 L1873.2 455.9 L1873.7 456.1 L1874.3 459.1 L1874.9 457.1 L1875.5 453.6 L1876.1 455.9 L1876.7 454.6 L1877.3 456.3 L1877.9 454.9 L1878.5 455.2 L1879.1 456.4 L1879.6 456.2 L1880.2 454.2 L1880.8 458.8 L1881.4 455.8 L1882 455.9 L1882.6 457.2 L1883.2 455.8 L1883.8 455.2 L1884.4 459.5 L1885 457.2 L1885.5 457.8 L1886.1 456.4 L1886.7 456.3 L1887.3 454.9 L1887.9 449 L1888.5 452.1 L1889.1 454.2 L1889.7 455.3 L1890.3 453.4 L1890.9 455.7 L1891.4 454 L1892 455.3 L1892.6 455.8 L1893.2 453.6 L1893.8 454.4 L1894.4 450.7 L1895 455.5 L1895.6 453.3" fill="none" stroke="#3f699d" stroke-width="2" stroke-linejoin="round" stroke-linecap="round"/>
<path d="M1047.8 454 L1048.3 444.4 L1048.9 449.5 L1049.5 453.5 L1050.1 453 L1050.7 452.1 L1051.3 455.5 L1051.9 452.5 L1052.5 451.1 L1053.1 448.9 L1053.6 456.1 L1054.2 454.3 L1054.8 456.2 L1055.4 447.5 L1056 449 L1056.6 456.7 L1057.2 447 L1057.8 448.8 L1058.4 453 L1059 453.3 L1059.5 457 L1060.1 457.8 L1060.7 454.1 L1061.3 457.6 L1061.9 456.8 L1062.5 456.5 L1063.1 457.7 L1063.7 454.7 L1064.3 454.9 L1064.9 451.1 L1065.4 454.2 L1066 453.1 L1066.6 417.5 L1067.2 452.9 L1067.8 454.8 L1068.4 456.2 L1069 449.4 L1069.6 449.4 L1070.2 451.1 L1070.8 452.4 L1071.3 455.9 L1071.9 456.6 L1072.5 456.1 L1073.1 457.5 L1073.7 451.9 L1074.3 455.2 L1074.9 451 L1075.5 452.8 L1076.1 442.5 L1076.7 446.3 L1077.2 456.6 L1077.8 455.3 L1078.4 447.3 L1079 452.5 L1079.6 445.4 L1080.2 453 L1080.8 456.3 L1081.4 449.6 L1082 446.9 L1082.6 454.2 L1083.1 455.9 L1083.7 452.8 L1084.3 441.5 L1084.9 445 L1085.5 454.8 L1086.1 452.9 L1086.7 454.5 L1087.3 454.5 L1087.9 442.9 L1088.5 452.5 L1089 446.7 L1089.6 448.2 L1090.2 451.3 L1090.8 443 L1091.4 451.6 L1092 443.7 L1092.6 451.4 L1093.2 446.9 L1093.8 449.9 L1094.4 448.8 L1094.9 434.4 L1095.5 437.7 L1096.1 447.3 L1096.7 434.7 L1097.3 448.2 L1097.9 445.1 L1098.5 434.9 L1099.1 446 L1099.7 456.1 L1100.3 446.6 L1100.8 455.4 L1101.4 430.6 L1102 449 L1102.6 454.3 L1103.2 454.7 L1103.8 456.8 L1104.4 456.7 L1105 451 L1105.6 455.4 L1106.2 450.6 L1106.7 453.8 L1107.3 452.7 L1107.9 444.2 L1108.5 452.2 L1109.1 450.7 L1109.7 445.4 L1110.3 457.2 L1110.9 458.6 L1111.5 439.8 L1112.1 442.4 L1112.6 455.9 L1113.2 456.7 L1113.8 395.6 L1114.4 438.9 L1115 455.5 L1115.6 429.8 L1116.2 431.5 L1116.8 438 L1117.4 441.8 L1118 447.2 L1118.5 447.9 L1119.1 429.3 L1119.7 408.8 L1120.3 435.6 L1120.9 444.8 L1121.5 410 L1122.1 438 L1122.7 444.1 L1123.3 446.1 L1123.9 429.4 L1124.4 447.6 L1125 446.1 L1125.6 452.7 L1126.2 446.9 L1126.8 451.7 L1127.4 457.4 L1128 445.6 L1128.6 458.5 L1129.2 460.5 L1129.8 457.5 L1130.3 454.8 L1130.9 460.2 L1131.5 459 L1132.1 456.6 L1132.7 453.6 L1133.3 459.3 L1133.9 456.1 L1134.5 446.6 L1135.1 444.3 L1135.7 450.6 L1136.2 450 L1136.8 452 L1137.4 458.8 L1138 459.9 L1138.6 460.1 L1139.2 445.7 L1139.8 449.9 L1140.4 444.6 L1141 460.2 L1141.6 451.2 L1142.1 454 L1142.7 449.4 L1143.3 456.7 L1143.9 443.8 L1144.5 459.9 L1145.1 452.9 L1145.7 449.3 L1146.3 445.8 L1146.9 445.4 L1147.5 445.8 L1148 444.6 L1148.6 442.9 L1149.2 450 L1149.8 446 L1150.4 443.1 L1151 443.5 L1151.6 449.3 L1152.2 444.6 L1152.8 443.6 L1153.4 447.5 L1153.9 446.8 L1154.5 449.7 L1155.1 448.7 L1155.7 453.3 L1156.3 458.7 L1156.9 452.9 L1157.5 448 L1158.1 449.7 L1158.7 451.7 L1159.3 455.9 L1159.8 451.6 L1160.4 449.6 L1161 450.9 L1161.6 443.5 L1162.2 457.1 L1162.8 446.5 L1163.4 458.2 L1164 432.5 L1164.6 453 L1165.2 457 L1165.7 449.6 L1166.3 453.1 L1166.9 451.1 L1167.5 445.5 L1168.1 456.7 L1168.7 459.3 L1169.3 456.1 L1169.9 450 L1170.5 457.4 L1171.1 457.8 L1171.6 445.8 L1172.2 450.3 L1172.8 454 L1173.4 446 L1174 455.7 L1174.6 450.2 L1175.2 457.4 L1175.8 454.1 L1176.4 447.7 L1177 445.6 L1177.5 446.3 L1178.1 454.9 L1178.7 451.7 L1179.3 455.8 L1179.9 458.1 L1180.5 453.1 L1181.1 447.1 L1181.7 447.2 L1182.3 450 L1182.9 432.5 L1183.4 456.7 L1184 457.9 L1184.6 454.7 L1185.2 456.8 L1185.8 457.5 L1186.4 455.2 L1187 452.4 L1187.6 454.2 L1188.2 456.4 L1188.8 449.2 L1189.3 446.9 L1189.9 454.7 L1190.5 458.8 L1191.1 459.1 L1191.7 448.6 L1192.3 459 L1192.9 451.1 L1193.5 453.1 L1194.1 456.5 L1194.7 449.9 L1195.2 459.1 L1195.8 458.3 L1196.4 454.7 L1197 459.1 L1197.6 449.3 L1198.2 457.3 L1198.8 458.2 L1199.4 459 L1200 452.3 L1200.6 454.8 L1201.1 452.3 L1201.7 451.9 L1202.3 449.7 L1202.9 446.4 L1203.5 449.5 L1204.1 454.4 L1204.7 449.5 L1205.3 452.1 L1205.9 452.5 L1206.5 445.1 L1207 440.7 L1207.6 453.5 L1208.2 455.4 L1208.8 454.5 L1209.4 449.2 L1210 452 L1210.6 450.6 L1211.2 448.3 L1211.8 453.8 L1212.4 447.7 L1212.9 445.7 L1213.5 457.4 L1214.1 445.2 L1214.7 448.8 L1215.3 457 L1215.9 453 L1216.5 450.4 L1217.1 445.6 L1217.7 454.1 L1218.3 451.3 L1218.8 446.2 L1219.4 447.6 L1220 445 L1220.6 452.8 L1221.2 450 L1221.8 456.2 L1222.4 448.8 L1223 447.2 L1223.6 450.1 L1224.2 448.9 L1224.7 456.1 L1225.3 434.4 L1225.9 444.4 L1226.5 444.4 L1227.1 451.8 L1227.7 446.2 L1228.3 453.5 L1228.9 440.6 L1229.5 441.5 L1230.1 439.4 L1230.6 456.3 L1231.2 456.4 L1231.8 456.2 L1232.4 454.8 L1233 458.8 L1233.6 462.9 L1234.2 457.9 L1234.8 464 L1235.4 460.4 L1236 464.9 L1236.5 464.6 L1237.1 462.3 L1237.7 465.5 L1238.3 465.6 L1238.9 464 L1239.5 463 L1240.1 462.5 L1240.7 463.4 L1241.3 462.1 L1241.9 464.5 L1242.4 462.3 L1243 448.8 L1243.6 465.8 L1244.2 464.6 L1244.8 465.6 L1245.4 463.7 L1246 464.1 L1246.6 464.6 L1247.2 463.2 L1247.8 464.5 L1248.3 465.5 L1248.9 465.3 L1249.5 463.2 L1250.1 463 L1250.7 465.9 L1251.3 463.3 L1251.9 462.7 L1252.5 464.7 L1253.1 464.6 L1253.7 465.9 L1254.2 464.7 L1254.8 464.9 L1255.4 464.5 L1256 466.3 L1256.6 462.9 L1257.2 464.9 L1257.8 465.3 L1258.4 463.7 L1259 464.7 L1259.6 464.8 L1260.1 463.7 L1260.7 465.9 L1261.3 464.3 L1261.9 464.8 L1262.5 462.4 L1263.1 462.6 L1263.7 465.3 L1264.3 464.6 L1264.9 465.8 L1265.5 464.7 L1266 463.1 L1266.6 462.7 L1267.2 464.6 L1267.8 465.2 L1268.4 465.6 L1269 464 L1269.6 462.7 L1270.2 465.8 L1270.8 397.2 L1271.4 466 L1271.9 465.7 L1272.5 465.6 L1273.1 464.5 L1273.7 465.2 L1274.3 465 L1274.9 464.7 L1275.5 464.9 L1276.1 442.3 L1276.7 387.1 L1277.3 380.9 L1277.8 386.3 L1278.4 386.6 L1279 384.2 L1279.6 384.8 L1280.2 385.3 L1280.8 378.6 L1281.4 383.7 L1282 424 L1282.6 464.4 L1283.2 462.8 L1283.7 462.8 L1284.3 463.2 L1284.9 461.8 L1285.5 462.9 L1286.1 428.1 L1286.7 427.4 L1287.3 423.1 L1287.9 422.2 L1288.5 421 L1289.1 426.6 L1289.6 426.6 L1290.2 420.1 L1290.8 427.3 L1291.4 418.7 L1292 419.9 L1292.6 427.9 L1293.2 431.7 L1293.8 449.3 L1294.4 464.2 L1295 462.4 L1295.5 460.7 L1296.1 458.9 L1296.7 457.1 L1297.3 455.4 L1297.9 453.6 L1298.5 451.8 L1299.1 450.1 L1299.7 448.3 L1300.3 446.5 L1300.9 444.7 L1301.4 436.8 L1302 430.2 L1302.6 419.6 L1303.2 415.5 L1303.8 422.5 L1304.4 421.7 L1305 435.2 L1305.6 437.4 L1306.2 416.8 L1306.8 397.7 L1307.3 393.7 L1307.9 394 L1308.5 393.5 L1309.1 397.1 L1309.7 396.8 L1310.3 396.7 L1310.9 390.4 L1311.5 388.6 L1312.1 389.3 L1312.7 397.4 L1313.2 397.6 L1313.8 388.8 L1314.4 394.3 L1315 391 L1315.6 395.6 L1316.2 394.2 L1316.8 393.7 L1317.4 394.5 L1318 392.7 L1318.6 397.8 L1319.1 391.5 L1319.7 399.6 L1320.3 404.9 L1320.9 403 L1321.5 400.6 L1322.1 403.4 L1322.7 404.9 L1323.3 405 L1323.9 402.6 L1324.5 405.7 L1325 409.8 L1325.6 406.8 L1326.2 404.7 L1326.8 403.8 L1327.4 405.2 L1328 406.4 L1328.6 405.3 L1329.2 405.9 L1329.8 403 L1330.4 404.1 L1330.9 407.1 L1331.5 403.4 L1332.1 404.5 L1332.7 404.3 L1333.3 404 L1333.9 406.4 L1334.5 403.5 L1335.1 403.6 L1335.7 404.8 L1336.3 404.3 L1336.8 413.6 L1337.4 425.2 L1338 425.6 L1338.6 368 L1339.2 368.8 L1339.8 370 L1340.4 375.2 L1341 371.8 L1341.6 368.1 L1342.2 368.5 L1342.7 373.4 L1343.3 361.2 L1343.9 351.8 L1344.5 346 L1345.1 340.8 L1345.7 340.5 L1346.3 339.6 L1346.9 330.3 L1347.5 331.3 L1348.1 340.2 L1348.6 344.6 L1349.2 353.7 L1349.8 360.5 L1350.4 375 L1351 369.6 L1351.6 368.5 L1352.2 373.5 L1352.8 358.5 L1353.4 344.1 L1354 341.1 L1354.5 339.7 L1355.1 333 L1355.7 341.5 L1356.3 334.5 L1356.9 339.1 L1357.5 339.8 L1358.1 336.7 L1358.7 357 L1359.3 363.8 L1359.9 368.3 L1360.4 366.4 L1361 373.6 L1361.6 369 L1362.2 367.3 L1362.8 373.8 L1363.4 365.5 L1364 373.1 L1364.6 370.5 L1365.2 368.5 L1365.8 333.9 L1366.3 291.2 L1366.9 272.2 L1367.5 264.2 L1368.1 269.8 L1368.7 268.7 L1369.3 267.9 L1369.9 266.5 L1370.5 255.5 L1371.1 260.7 L1371.7 266.5 L1372.2 268 L1372.8 252.8 L1373.4 267.8 L1374 264.2 L1374.6 268.6 L1375.2 254.2 L1375.8 269.8 L1376.4 309.4 L1377 431.7 L1377.6 431.7 L1378.1 431.7 L1378.7 407.9 L1379.3 380.1 L1379.9 380.1 L1380.5 383.9 L1381.1 379.9 L1381.7 383 L1382.3 407.9 L1382.9 432.9 L1383.5 433 L1384 433.1 L1384.6 433.3 L1385.2 433.4 L1385.8 433.5 L1386.4 458.9 L1387 464.8 L1387.6 464.8 L1388.2 418.7 L1388.8 410 L1389.4 413.2 L1389.9 417.5 L1390.5 419.4 L1391.1 411.5 L1391.7 418.6 L1392.3 413 L1392.9 408.1 L1393.5 412.6 L1394.1 416.3 L1394.7 409.6 L1395.3 413.1 L1395.8 404.6 L1396.4 410.5 L1397 417.8 L1397.6 420.8 L1398.2 432.9 L1398.8 458.2 L1399.4 464.8 L1400 464.8 L1400.6 464.8 L1401.2 464.8 L1401.7 464.8 L1402.3 464.8 L1402.9 464.8 L1403.5 464.8 L1404.1 464.8 L1404.7 464.8 L1405.3 464.8 L1405.9 464.8 L1406.5 464.8 L1407.1 463.1 L1407.6 445 L1408.2 430.1 L1408.8 436.4 L1409.4 436.3 L1410 435.1 L1410.6 433.9 L1411.2 432.2 L1411.8 436.1 L1412.4 432.9 L1413 436.3 L1413.5 436.2 L1414.1 431.6 L1414.7 432.7 L1415.3 431.9 L1415.9 434.2 L1416.5 433.3 L1417.1 435.4 L1417.7 434.4 L1418.3 430.6 L1418.9 429.5 L1419.4 436.3 L1420 435 L1420.6 427.6 L1421.2 429.5 L1421.8 428 L1422.4 433.1 L1423 431.4 L1423.6 432.8 L1424.2 427.5 L1424.8 431.9 L1425.3 429.2 L1425.9 425.5 L1426.5 432.2 L1427.1 430.2 L1427.7 428.2 L1428.3 426.3 L1428.9 431.3 L1429.5 431.9 L1430.1 433.9 L1430.7 426.8 L1431.2 434 L1431.8 434 L1432.4 430.1 L1433 430.8 L1433.6 428.8 L1434.2 432.4 L1434.8 427.9 L1435.4 434 L1436 433.1 L1436.6 429.1 L1437.1 434 L1437.7 432.4 L1438.3 428.4 L1438.9 428.8 L1439.5 432.6 L1440.1 433.6 L1440.7 432 L1441.3 428.1 L1441.9 429.7 L1442.5 430.1 L1443 422.8 L1443.6 423.2 L1444.2 417.4 L1444.8 415.7 L1445.4 414.7 L1446 430 L1446.6 452.4 L1447.2 465.9 L1447.8 465.9 L1448.4 465.9 L1448.9 465.9 L1449.5 465.9 L1450.1 465.9 L1450.7 465.9 L1451.3 465.9 L1451.9 465.9 L1452.5 465.9 L1453.1 465.9 L1453.7 466 L1454.3 465.9 L1454.8 465.8 L1455.4 465.9 L1456 465.8 L1456.6 465.9 L1457.2 466 L1457.8 465.8 L1458.4 465.8 L1459 466 L1459.6 466.1 L1460.2 465.9 L1460.7 465.9 L1461.3 465.9 L1461.9 465.7 L1462.5 465.9 L1463.1 465.8 L1463.7 466.1 L1464.3 465.9 L1464.9 465.8 L1465.5 466.2 L1466.1 466.2 L1466.6 465.8 L1467.2 465.6 L1467.8 466.2 L1468.4 465.8 L1469 466.2 L1469.6 465.8 L1470.2 465.8 L1470.8 466.1 L1471.4 466.2 L1472 465.7 L1472.5 465.9 L1473.1 465.7 L1473.7 466.1 L1474.3 466.1 L1474.9 465.5 L1475.5 465.8 L1476.1 466 L1476.7 465.9 L1477.3 465.7 L1477.9 465.7 L1478.4 465.5 L1479 466.1 L1479.6 465.9 L1480.2 466 L1480.8 466 L1481.4 466 L1482 466 L1482.6 466 L1483.2 466 L1483.8 466 L1484.3 466 L1484.9 466 L1485.5 466 L1486.1 466 L1486.7 437.4 L1487.3 437.5 L1487.9 466 L1488.5 466 L1489.1 466 L1489.7 466 L1490.2 466 L1490.8 466 L1491.4 466 L1492 466 L1492.6 466 L1493.2 466 L1493.8 466 L1494.4 466 L1495 466 L1495.6 466 L1496.1 466 L1496.7 466 L1497.3 466 L1497.9 466 L1498.5 466 L1499.1 466 L1499.7 466 L1500.3 466 L1500.9 466 L1501.5 466 L1502 466 L1502.6 466 L1503.2 466 L1503.8 466 L1504.4 466 L1505 466 L1505.6 466 L1506.2 466 L1506.8 466 L1507.4 466 L1507.9 466 L1508.5 466 L1509.1 466 L1509.7 466 L1510.3 466 L1510.9 466 L1511.5 466 L1512.1 466 L1512.7 466 L1513.3 466 L1513.8 466 L1514.4 466 L1515 466 L1515.6 466 L1516.2 460.1 L1516.8 452 L1517.4 452.2 L1518 452.4 L1518.6 456.2 L1519.2 461.1 L1519.7 466 L1520.3 466 L1520.9 466 L1521.5 449 L1522.1 412.7 L1522.7 388.9 L1523.3 388.6 L1523.9 389 L1524.5 384.4 L1525.1 387.3 L1525.6 386.4 L1526.2 383.3 L1526.8 389 L1527.4 387.1 L1528 389.7 L1528.6 385.3 L1529.2 390.2 L1529.8 384.8 L1530.4 384.6 L1531 384.8 L1531.5 390 L1532.1 389 L1532.7 385.7 L1533.3 389.9 L1533.9 387.6 L1534.5 387.6 L1535.1 383.7 L1535.7 386.8 L1536.3 384.5 L1536.9 388.8 L1537.4 385.1 L1538 388 L1538.6 384 L1539.2 389.9 L1539.8 384.8 L1540.4 389.3 L1541 387.1 L1541.6 388.7 L1542.2 402.2 L1542.8 426.5 L1543.3 423.7 L1543.9 414.4 L1544.5 408.7 L1545.1 413.2 L1545.7 417.7 L1546.3 421.2 L1546.9 413.3 L1547.5 405.5 L1548.1 397.6 L1548.7 396.5 L1549.2 396.1 L1549.8 395.7 L1550.4 408.3 L1551 425.7 L1551.6 442.1 L1552.2 458 L1552.8 466 L1553.4 466 L1554 466 L1554.6 466 L1555.1 466 L1555.7 466 L1556.3 466 L1556.9 466 L1557.5 442.5 L1558.1 466 L1558.7 466 L1559.3 466 L1559.9 466 L1560.5 466 L1561 466 L1561.6 466 L1562.2 466 L1562.8 466 L1563.4 466 L1564 466 L1564.6 466 L1565.2 466 L1565.8 466 L1566.4 466 L1566.9 466 L1567.5 466 L1568.1 466 L1568.7 466 L1569.3 466 L1569.9 466 L1570.5 466 L1571.1 466 L1571.7 466 L1572.3 466 L1572.8 466 L1573.4 466 L1574 466 L1574.6 466 L1575.2 466 L1575.8 466 L1576.4 466 L1577 466 L1577.6 466 L1578.2 466 L1578.7 466 L1579.3 466 L1579.9 466 L1580.5 466 L1581.1 466 L1581.7 466 L1582.3 466 L1582.9 466 L1583.5 466 L1584.1 466 L1584.6 466 L1585.2 466 L1585.8 466 L1586.4 466 L1587 466 L1587.6 466 L1588.2 466 L1588.8 466 L1589.4 466 L1590 466 L1590.5 466 L1591.1 466 L1591.7 466 L1592.3 466 L1592.9 465 L1593.5 465.2 L1594.1 465.6 L1594.7 465.3 L1595.3 465.9 L1595.9 464.9 L1596.4 464.3 L1597 465.3 L1597.6 464.9 L1598.2 464.6 L1598.8 465.9 L1599.4 466 L1600 466 L1600.6 466 L1601.2 466 L1601.8 466 L1602.3 466 L1602.9 466 L1603.5 466 L1604.1 466 L1604.7 466 L1605.3 466 L1605.9 466 L1606.5 466 L1607.1 466 L1607.7 466 L1608.2 466 L1608.8 466 L1609.4 466 L1610 466 L1610.6 466 L1611.2 466 L1611.8 466 L1612.4 466 L1613 466 L1613.6 466 L1614.1 466 L1614.7 466 L1615.3 466 L1615.9 466 L1616.5 466 L1617.1 466 L1617.7 466 L1618.3 466 L1618.9 466 L1619.5 466 L1620 466 L1620.6 466 L1621.2 466 L1621.8 466 L1622.4 466 L1623 466 L1623.6 466 L1624.2 466 L1624.8 466 L1625.4 466 L1625.9 466 L1626.5 466 L1627.1 466 L1627.7 466 L1628.3 466 L1628.9 466 L1629.5 466 L1630.1 466 L1630.7 466 L1631.3 466 L1631.8 466 L1632.4 466 L1633 466 L1633.6 466 L1634.2 466 L1634.8 466 L1635.4 466 L1636 466 L1636.6 466 L1637.2 466 L1637.7 465.5 L1638.3 464.8 L1638.9 465.4 L1639.5 464.3 L1640.1 464.6 L1640.7 464.6 L1641.3 465.5 L1641.9 465.5 L1642.5 465.2 L1643.1 465.8 L1643.6 466 L1644.2 466 L1644.8 459.4 L1645.4 466 L1646 466 L1646.6 466.1 L1647.2 466 L1647.8 465.9 L1648.4 465.9 L1649 466 L1649.5 465.9 L1650.1 466.1 L1650.7 466 L1651.3 466.1 L1651.9 466.1 L1652.5 466 L1653.1 466 L1653.7 466 L1654.3 466.2 L1654.9 465.9 L1655.4 466 L1656 466.1 L1656.6 466.1 L1657.2 466.1 L1657.8 466.1 L1658.4 466.2 L1659 465.7 L1659.6 465.6 L1660.2 465.9 L1660.8 463.1 L1661.3 466 L1661.9 465.7 L1662.5 466.2 L1663.1 465.8 L1663.7 465.9 L1664.3 465.7 L1664.9 466.2 L1665.5 465.8 L1666.1 466.2 L1666.7 466 L1667.2 465.6 L1667.8 466.3 L1668.4 466.2 L1669 466.1 L1669.6 466.1 L1670.2 466.3 L1670.8 465.7 L1671.4 465.7 L1672 466.1 L1672.6 466 L1673.1 464.2 L1673.7 466.1 L1674.3 466.1 L1674.9 462.7 L1675.5 465.3 L1676.1 464.6 L1676.7 462.6 L1677.3 462.3 L1677.9 464.7 L1678.5 465.6 L1679 465.3 L1679.6 462.6 L1680.2 462.8 L1680.8 465.9 L1681.4 463.1 L1682 465.3 L1682.6 464.8 L1683.2 466 L1683.8 462.8 L1684.4 462.2 L1684.9 465.9 L1685.5 464 L1686.1 465.9 L1686.7 452.5 L1687.3 466.3 L1687.9 466.2 L1688.5 463.8 L1689.1 465.7 L1689.7 463.9 L1690.3 464.4 L1690.8 465.2 L1691.4 466.4 L1692 465.5 L1692.6 465 L1693.2 466 L1693.8 466.5 L1694.4 466.3 L1695 466.2 L1695.6 465.5 L1696.2 466.4 L1696.7 466.4 L1697.3 466.3 L1697.9 465.6 L1698.5 465.3 L1699.1 465.5 L1699.7 463.5 L1700.3 462.8 L1700.9 464.8 L1701.5 466.1 L1702.1 465.7 L1702.6 462.2 L1703.2 463.3 L1703.8 465.4 L1704.4 462.6 L1705 466.2 L1705.6 458.9 L1706.2 463.8 L1706.8 463.1 L1707.4 463 L1708 466.3 L1708.5 462.3 L1709.1 464.9 L1709.7 465.1 L1710.3 460.3 L1710.9 466.1 L1711.5 464.8 L1712.1 460.6 L1712.7 465 L1713.3 464.8 L1713.9 462.5 L1714.4 465.4 L1715 458.9 L1715.6 457.8 L1716.2 466.2 L1716.8 463.1 L1717.4 460.2 L1718 463.3 L1718.6 454.9 L1719.2 460.3 L1719.8 464.5 L1720.3 446.2 L1720.9 456.9 L1721.5 461.7 L1722.1 457.4 L1722.7 455.9 L1723.3 459.9 L1723.9 460.2 L1724.5 456.8 L1725.1 458.8 L1725.7 459.7 L1726.2 453.3 L1726.8 462.4 L1727.4 453.6 L1728 462.1 L1728.6 454.8 L1729.2 460.6 L1729.8 456.6 L1730.4 449.1 L1731 448.7 L1731.6 448.6 L1732.1 459.3 L1732.7 454.6 L1733.3 459 L1733.9 452.6 L1734.5 453.9 L1735.1 460.3 L1735.7 450.7 L1736.3 447 L1736.9 449 L1737.5 422.5 L1738 455.3 L1738.6 455.2 L1739.2 456.1 L1739.8 443.6 L1740.4 443.5 L1741 441.2 L1741.6 409.4 L1742.2 421 L1742.8 445.5 L1743.4 415.1 L1743.9 430.5 L1744.5 432.2 L1745.1 422.3 L1745.7 407.5 L1746.3 448.3 L1746.9 443.8 L1747.5 451 L1748.1 445 L1748.7 436.8 L1749.3 440.9 L1749.8 447.9 L1750.4 440.3 L1751 452.4 L1751.6 430.4 L1752.2 451.9 L1752.8 450 L1753.4 453.5 L1754 431.2 L1754.6 424 L1755.2 425.8 L1755.7 449.7 L1756.3 438.5 L1756.9 438.5 L1757.5 440.6 L1758.1 418.6 L1758.7 445.2 L1759.3 438.3 L1759.9 432.4 L1760.5 424.7 L1761.1 451.2 L1761.6 443 L1762.2 433.5 L1762.8 453.1 L1763.4 448.9 L1764 428.3 L1764.6 451.2 L1765.2 445.7 L1765.8 450.5 L1766.4 449.7 L1767 456.5 L1767.5 457.2 L1768.1 435.4 L1768.7 442.1 L1769.3 443.1 L1769.9 455 L1770.5 454.4 L1771.1 447.4 L1771.7 454.2 L1772.3 449 L1772.9 435.4 L1773.4 450.9 L1774 451.3 L1774.6 432.2 L1775.2 443.5 L1775.8 456.6 L1776.4 449.1 L1777 442.5 L1777.6 456 L1778.2 450.4 L1778.8 441.3 L1779.3 436.4 L1779.9 444.2 L1780.5 436 L1781.1 447.4 L1781.7 448 L1782.3 435.2 L1782.9 446 L1783.5 434.6 L1784.1 449.4 L1784.7 450.5 L1785.2 455 L1785.8 449.1 L1786.4 455.2 L1787 454.7 L1787.6 454.6 L1788.2 450.6 L1788.8 453.2 L1789.4 451 L1790 439.9 L1790.6 446.7 L1791.1 442.7 L1791.7 455.6 L1792.3 452.7 L1792.9 457.5 L1793.5 448.8 L1794.1 454.3 L1794.7 455.5 L1795.3 457.9 L1795.9 456.6 L1796.5 455.9 L1797 454.6 L1797.6 448.4 L1798.2 451.4 L1798.8 456.1 L1799.4 455.4 L1800 457.1 L1800.6 439.6 L1801.2 450.8 L1801.8 442.8 L1802.4 443.7 L1802.9 439.6 L1803.5 455.5 L1804.1 452.3 L1804.7 452.5 L1805.3 457.4 L1805.9 443.8 L1806.5 454.3 L1807.1 446.6 L1807.7 451.4 L1808.3 457.7 L1808.8 453.6 L1809.4 455.8 L1810 457.8 L1810.6 457.1 L1811.2 453.5 L1811.8 457.7 L1812.4 455.9 L1813 455 L1813.6 454 L1814.2 457.2 L1814.7 452.5 L1815.3 456.3 L1815.9 452.3 L1816.5 452.8 L1817.1 457.1 L1817.7 457.1 L1818.3 457.1 L1818.9 450.4 L1819.5 455.4 L1820.1 455.6 L1820.6 447.7 L1821.2 457.8 L1821.8 456.9 L1822.4 456.2 L1823 457.9 L1823.6 439.4 L1824.2 459.2 L1824.8 454.2 L1825.4 455 L1826 452.7 L1826.5 450.9 L1827.1 457.3 L1827.7 454.1 L1828.3 451.5 L1828.9 457.9 L1829.5 453.9 L1830.1 453.3 L1830.7 444.2 L1831.3 445.7 L1831.9 454.7 L1832.4 449.4 L1833 456.1 L1833.6 452.3 L1834.2 453.6 L1834.8 457.4 L1835.4 455 L1836 455.5 L1836.6 453.9 L1837.2 456 L1837.8 457 L1838.3 454.8 L1838.9 454.1 L1839.5 456.9 L1840.1 452.1 L1840.7 456.3 L1841.3 457.4 L1841.9 455.4 L1842.5 454.7 L1843.1 457.2 L1843.7 453.7 L1844.2 452.8 L1844.8 454.6 L1845.4 453.5 L1846 459.1 L1846.6 456.9 L1847.2 457.4 L1847.8 459.2 L1848.4 455.4 L1849 458.5 L1849.6 451.2 L1850.1 448.1 L1850.7 450.6 L1851.3 453.5 L1851.9 454.8 L1852.5 458.1 L1853.1 439.4 L1853.7 440.7 L1854.3 451.3 L1854.9 458 L1855.5 453.8 L1856 459.1 L1856.6 456.2 L1857.2 454.4 L1857.8 449.9 L1858.4 457.4 L1859 454.9 L1859.6 450 L1860.2 452 L1860.8 453 L1861.4 453 L1861.9 455.9 L1862.5 455.8 L1863.1 457.5 L1863.7 449.9 L1864.3 449.2 L1864.9 456.2 L1865.5 450.3 L1866.1 460.1 L1866.7 459.7 L1867.3 456.8 L1867.8 458.5 L1868.4 458.1 L1869 452.2 L1869.6 459.6 L1870.2 459.3 L1870.8 459.1 L1871.4 455.2 L1872 459 L1872.6 460.3 L1873.2 456.3 L1873.7 457.5 L1874.3 458.8 L1874.9 456.2 L1875.5 454.5 L1876.1 455.8 L1876.7 455.1 L1877.3 455.9 L1877.9 453.2 L1878.5 451.9 L1879.1 458.3 L1879.6 458.2 L1880.2 453.5 L1880.8 458.6 L1881.4 455.5 L1882 455.8 L1882.6 456.1 L1883.2 454 L1883.8 455.4 L1884.4 459.7 L1885 457.2 L1885.5 456.8 L1886.1 455 L1886.7 455.4 L1887.3 455 L1887.9 449.9 L1888.5 452.3 L1889.1 455.1 L1889.7 455 L1890.3 454.3 L1890.9 455.6 L1891.4 452.5 L1892 455.9 L1892.6 456.3 L1893.2 456.3 L1893.8 456.1 L1894.4 450.4 L1895 456 L1895.6 453.1" fill="none" stroke="#9e3b39" stroke-width="2" stroke-linejoin="round" stroke-linecap="round"/>
</g>
<path d="M1047.5 166.7 V468.5 M1047 468.4 H1896.1 M1041.9 467.5 H1047.5 M1041.9 392.5 H1047.5 M1041.9 317.5 H1047.5 M1041.9 241.5 H1047.5 M1056.5 467.5 V473.5 M1127.5 467.5 V473.5 M1198.5 467.5 V473.5 M1268.5 467.5 V473.5 M1339.5 467.5 V473.5 M1410.5 467.5 V473.5 M1480.5 467.5 V473.5 M1551.5 467.5 V473.5 M1622.5 467.5 V473.5 M1692.5 467.5 V473.5 M1763.5 467.5 V473.5 M1834.5 467.5 V473.5" stroke="#000" stroke-width="1" fill="none" shape-rendering="crispEdges"/>
<text x="1444" y="149" text-anchor="middle" class="ct">Swellendam last 24 Hours</text>
<clipPath id="yc981_130"><rect x="981" y="162" width="70" height="320"/></clipPath>
<g clip-path="url(#yc981_130)" class="al">
<text x="993.3" y="470.8">0</text>
<text x="993.3" y="395.8">500 M</text>
<text x="993.3" y="320.8">1 G</text>
<text x="993.3" y="244.8">1.5 G</text>
<text x="993.3" y="170">2 G</text>
</g>
<clipPath id="xc981_130"><rect x="981" y="472.5" width="920" height="30"/></clipPath>
<g clip-path="url(#xc981_130)" class="al" text-anchor="middle">
<text x="1056.8" y="490.3">12:00</text>
<text x="1127.5" y="490.3">14:00</text>
<text x="1198.1" y="490.3">16:00</text>
<text x="1268.8" y="490.3">18:00</text>
<text x="1339.5" y="490.3">20:00</text>
<text x="1410.1" y="490.3">22:00</text>
<text x="1480.8" y="490.3">00:00</text>
<text x="1551.5" y="490.3">02:00</text>
<text x="1622.1" y="490.3">04:00</text>
<text x="1692.8" y="490.3">06:00</text>
<text x="1763.5" y="490.3">08:00</text>
<text x="1834.1" y="490.3">10:00</text>
</g>
<g class="lg">
<text x="1331.6" y="522.5" class="lh">Curr</text>
<text x="1394.4" y="522.5" class="lh">Min</text>
<text x="1449.1" y="522.5" class="lh">Max</text>
<text x="1501.3" y="522.5" class="lh">Avg</text>
<rect x="988" y="529.8" width="12" height="12" fill="#3f699d"/>
<text x="1004.2" y="539.5" textLength="316.2" lengthAdjust="spacingAndGlyphs">Outbound traffic on 00-sfpplus1-TE1/0/17 (bits/sec)</text>
<text x="1331.6" y="539.5">88.457 M</text>
<text x="1394.4" y="539.5">6.410 M</text>
<text x="1449.1" y="539.5">1.418 G</text>
<text x="1501.3" y="539.5">149.040 M</text>
<rect x="988" y="546.9" width="12" height="12" fill="#9e3b39"/>
<text x="1004.2" y="556.6" textLength="304.6" lengthAdjust="spacingAndGlyphs">Inbound traffic on 00-sfpplus1-TE1/0/17 (bits/sec)</text>
<text x="1331.6" y="556.6">72.211 M</text>
<text x="1394.4" y="556.6">5.656 M</text>
<text x="1449.1" y="556.6">1.422 G</text>
<text x="1501.3" y="556.6">148.411 M</text>
</g>
</svg>
<svg class="chart" style="left:46px;top:575px" width="927" height="437" viewBox="46 575 927 437">
<path d="M113 862.5 H957.6 M113 812.5 H957.6 M113 762.5 H957.6 M113 712.5 H957.6 M113 662.5 H957.6 M183.5 612.7 V912.5 M254.5 612.7 V912.5 M324.5 612.7 V912.5 M395.5 612.7 V912.5 M466.5 612.7 V912.5 M536.5 612.7 V912.5 M607.5 612.7 V912.5 M678.5 612.7 V912.5 M748.5 612.7 V912.5 M819.5 612.7 V912.5 M890.5 612.7 V912.5 M960.5 612.7 V912.5" stroke="#e5e5e5" stroke-width="1" stroke-dasharray="3 3" fill="none" shape-rendering="crispEdges"/>
<clipPath id="c46_575"><rect x="112.5" y="611.7" width="848.1" height="301.3"/></clipPath>
<g clip-path="url(#c46_575)">
<path d="M117.1 886.4 L124.2 881.3 L132.2 886.4 L139.5 886.4 L146.6 886.4 L153.2 884.3 L160 883.4 L167.1 884.3 L174.4 876.1 L181.2 875 L188.5 875.6 L195.5 874.5 L202.4 876.1 L209.2 871.5 L216.5 876.6 L223.3 875.6 L230.6 881.3 L237.7 885.4 L245 874.5 L252 872.2 L259.1 890.5 L265.9 888.4 L273 890.5 L279.8 883.6 L287.1 889.3 L294 886.4 L301.3 870 L308.3 767.4 L315.6 762.2 L322.5 753.8 L329.3 751.5 L336.6 752.6 L343.6 752.6 L350.9 751.5 L358.2 731 L365.3 698.4 L372.6 726.4 L379.4 869.3 L386.5 883.2 L393.5 880.2 L400.6 873.4 L407.4 877.5 L414.7 882.5 L421.6 878.6 L428.4 888.9 L435.2 890.5 L442.1 891.6 L450 886.4 L457.7 887.7 L464.8 890.8 L471.2 889.7 L478.3 883 L485.3 890.3 L492.3 892.5 L499.4 889.7 L506.4 888.6 L513.4 889.7 L520.5 888.6 L527.5 890.5 L534.5 890.5 L541.5 884.1 L548.6 889.7 L556.2 897.6 L563.2 889.7 L570.2 892.5 L577.3 893.4 L584.3 891.7 L591.3 892.5 L598.4 895.9 L605.7 894.8 L612.4 893.9 L619.5 887.7 L626.5 891.7 L633.5 892.8 L640.5 893.9 L647.6 893.9 L654.6 893.9 L661.6 889.1 L668.7 892.8 L676.5 890.5 L683.6 891.7 L690 886.9 L697.6 891.7 L704.7 890.5 L711.1 889.7 L718.2 892.5 L725.8 892.8 L732.8 894.8 L739.8 894.8 L746.9 892.5 L753.9 892.5 L760.9 892.5 L768 892.5 L775 889.7 L782 880.7 L789 890.5 L796.1 894.8 L803.1 894.8 L810.1 896.7 L817.2 894.8 L824.2 892.5 L831.2 889.7 L838.3 891.7 L845.3 893.9 L852.3 891.7 L859.4 893.4 L866.4 890.5 L874 894.5 L881 874.2 L888.3 893.4 L895.4 889.1 L902.1 883.5 L909.1 888.3 L916.2 882.7 L923.2 886.3 L930.2 885.5 L938.1 885.5 L944.6 887.5 L951.3 890.5 L957.8 887.7 L957.8 912.5 L117.1 912.5 Z" fill="#3f699d" fill-opacity="0.2" stroke="none"/>
<path d="M116.8 886.7 L123.9 881.6 L131.9 886.7 L139.2 886.7 L146.3 886.7 L152.9 884.6 L159.7 883.7 L166.8 884.6 L174.1 876.4 L180.9 875.3 L188.2 875.9 L195.2 874.8 L202.1 876.4 L208.9 871.8 L216.2 876.9 L223 875.9 L230.3 881.6 L237.4 885.7 L244.7 874.8 L251.7 872.5 L258.8 890.8 L265.6 888.7 L272.7 890.8 L279.5 883.9 L286.8 889.6 L293.7 886.7 L301 870.3 L308 767.7 L315.3 762.5 L322.2 754.1 L329 751.8 L336.3 752.9 L343.3 752.9 L350.6 751.8 L357.9 731.3 L365 698.7 L372.3 726.7 L379.1 869.6 L386.2 883.5 L393.2 880.5 L400.3 873.7 L407.1 877.8 L414.4 882.8 L421.3 878.9 L428.1 889.2 L434.9 890.8 L441.8 891.9 L449.7 886.7 L457.4 888 L464.5 891.1 L470.9 890 L478 883.2 L485 890.6 L492 892.8 L499.1 890 L506.1 888.9 L513.1 890 L520.2 888.9 L527.2 890.8 L534.2 890.8 L541.2 884.4 L548.3 890 L555.9 897.9 L562.9 890 L569.9 892.8 L577 893.7 L584 892 L591 892.8 L598.1 896.2 L605.4 895.1 L612.1 894.2 L619.2 888 L626.2 892 L633.2 893.1 L640.2 894.2 L647.3 894.2 L654.3 894.2 L661.3 889.4 L668.4 893.1 L676.2 890.8 L683.3 892 L689.8 887.2 L697.3 892 L704.4 890.8 L710.8 890 L717.9 892.8 L725.5 893.1 L732.5 895.1 L739.5 895.1 L746.6 892.8 L753.6 892.8 L760.6 892.8 L767.7 892.8 L774.7 890 L781.7 881 L788.8 890.8 L795.8 895.1 L802.8 895.1 L809.8 897 L816.9 895.1 L823.9 892.8 L830.9 890 L838 892 L845 894.2 L852 892 L859.1 893.7 L866.1 890.8 L873.7 894.8 L880.7 874.5 L888 893.7 L895.1 889.4 L901.8 883.8 L908.8 888.6 L915.9 883 L922.9 886.6 L929.9 885.8 L937.8 885.8 L944.3 887.8 L951 890.8 L957.5 888 L957.5 912.5 L116.8 912.5 Z" fill="#9e3b39" fill-opacity="0.2" stroke="none"/>
<path d="M117.1 886.4 L124.2 881.3 L132.2 886.4 L139.5 886.4 L146.6 886.4 L153.2 884.3 L160 883.4 L167.1 884.3 L174.4 876.1 L181.2 875 L188.5 875.6 L195.5 874.5 L202.4 876.1 L209.2 871.5 L216.5 876.6 L223.3 875.6 L230.6 881.3 L237.7 885.4 L245 874.5 L252 872.2 L259.1 890.5 L265.9 888.4 L273 890.5 L279.8 883.6 L287.1 889.3 L294 886.4 L301.3 870 L308.3 767.4 L315.6 762.2 L322.5 753.8 L329.3 751.5 L336.6 752.6 L343.6 752.6 L350.9 751.5 L358.2 731 L365.3 698.4 L372.6 726.4 L379.4 869.3 L386.5 883.2 L393.5 880.2 L400.6 873.4 L407.4 877.5 L414.7 882.5 L421.6 878.6 L428.4 888.9 L435.2 890.5 L442.1 891.6 L450 886.4 L457.7 887.7 L464.8 890.8 L471.2 889.7 L478.3 883 L485.3 890.3 L492.3 892.5 L499.4 889.7 L506.4 888.6 L513.4 889.7 L520.5 888.6 L527.5 890.5 L534.5 890.5 L541.5 884.1 L548.6 889.7 L556.2 897.6 L563.2 889.7 L570.2 892.5 L577.3 893.4 L584.3 891.7 L591.3 892.5 L598.4 895.9 L605.7 894.8 L612.4 893.9 L619.5 887.7 L626.5 891.7 L633.5 892.8 L640.5 893.9 L647.6 893.9 L654.6 893.9 L661.6 889.1 L668.7 892.8 L676.5 890.5 L683.6 891.7 L690 886.9 L697.6 891.7 L704.7 890.5 L711.1 889.7 L718.2 892.5 L725.8 892.8 L732.8 894.8 L739.8 894.8 L746.9 892.5 L753.9 892.5 L760.9 892.5 L768 892.5 L775 889.7 L782 880.7 L789 890.5 L796.1 894.8 L803.1 894.8 L810.1 896.7 L817.2 894.8 L824.2 892.5 L831.2 889.7 L838.3 891.7 L845.3 893.9 L852.3 891.7 L859.4 893.4 L866.4 890.5 L874 894.5 L881 874.2 L888.3 893.4 L895.4 889.1 L902.1 883.5 L909.1 888.3 L916.2 882.7 L923.2 886.3 L930.2 885.5 L938.1 885.5 L944.6 887.5 L951.3 890.5 L957.8 887.7" fill="none" stroke="#3f699d" stroke-width="2" stroke-linejoin="round" stroke-linecap="round"/>
<path d="M116.8 886.7 L123.9 881.6 L131.9 886.7 L139.2 886.7 L146.3 886.7 L152.9 884.6 L159.7 883.7 L166.8 884.6 L174.1 876.4 L180.9 875.3 L188.2 875.9 L195.2 874.8 L202.1 876.4 L208.9 871.8 L216.2 876.9 L223 875.9 L230.3 881.6 L237.4 885.7 L244.7 874.8 L251.7 872.5 L258.8 890.8 L265.6 888.7 L272.7 890.8 L279.5 883.9 L286.8 889.6 L293.7 886.7 L301 870.3 L308 767.7 L315.3 762.5 L322.2 754.1 L329 751.8 L336.3 752.9 L343.3 752.9 L350.6 751.8 L357.9 731.3 L365 698.7 L372.3 726.7 L379.1 869.6 L386.2 883.5 L393.2 880.5 L400.3 873.7 L407.1 877.8 L414.4 882.8 L421.3 878.9 L428.1 889.2 L434.9 890.8 L441.8 891.9 L449.7 886.7 L457.4 888 L464.5 891.1 L470.9 890 L478 883.2 L485 890.6 L492 892.8 L499.1 890 L506.1 888.9 L513.1 890 L520.2 888.9 L527.2 890.8 L534.2 890.8 L541.2 884.4 L548.3 890 L555.9 897.9 L562.9 890 L569.9 892.8 L577 893.7 L584 892 L591 892.8 L598.1 896.2 L605.4 895.1 L612.1 894.2 L619.2 888 L626.2 892 L633.2 893.1 L640.2 894.2 L647.3 894.2 L654.3 894.2 L661.3 889.4 L668.4 893.1 L676.2 890.8 L683.3 892 L689.8 887.2 L697.3 892 L704.4 890.8 L710.8 890 L717.9 892.8 L725.5 893.1 L732.5 895.1 L739.5 895.1 L746.6 892.8 L753.6 892.8 L760.6 892.8 L767.7 892.8 L774.7 890 L781.7 881 L788.8 890.8 L795.8 895.1 L802.8 895.1 L809.8 897 L816.9 895.1 L823.9 892.8 L830.9 890 L838 892 L845 894.2 L852 892 L859.1 893.7 L866.1 890.8 L873.7 894.8 L880.7 874.5 L888 893.7 L895.1 889.4 L901.8 883.8 L908.8 888.6 L915.9 883 L922.9 886.6 L929.9 885.8 L937.8 885.8 L944.3 887.8 L951 890.8 L957.5 888" fill="none" stroke="#9e3b39" stroke-width="2" stroke-linejoin="round" stroke-linecap="round"/>
</g>
<path d="M112.5 611.7 V913.5 M112 913.4 H961.1 M106.9 912.5 H112.5 M106.9 862.5 H112.5 M106.9 812.5 H112.5 M106.9 762.5 H112.5 M106.9 712.5 H112.5 M106.9 662.5 H112.5 M183.5 912.5 V918.5 M254.5 912.5 V918.5 M324.5 912.5 V918.5 M395.5 912.5 V918.5 M466.5 912.5 V918.5 M536.5 912.5 V918.5 M607.5 912.5 V918.5 M678.5 912.5 V918.5 M748.5 912.5 V918.5 M819.5 912.5 V918.5 M890.5 912.5 V918.5 M960.5 912.5 V918.5" stroke="#000" stroke-width="1" fill="none" shape-rendering="crispEdges"/>
<text x="509" y="594" text-anchor="middle" class="ct">George last Hour</text>
<clipPath id="yc46_575"><rect x="46" y="607" width="70" height="320"/></clipPath>
<g clip-path="url(#yc46_575)" class="al">
<text x="58.3" y="915.8">0</text>
<text x="58.3" y="865.8">50 M</text>
<text x="58.3" y="815.8">100 M</text>
<text x="58.3" y="765.8">150 M</text>
<text x="58.3" y="715.8">200 M</text>
<text x="58.3" y="665.8">250 M</text>
<text x="58.3" y="615">300 M</text>
</g>
<clipPath id="xc46_575"><rect x="46" y="917.5" width="920" height="30"/></clipPath>
<g clip-path="url(#xc46_575)" class="al" text-anchor="middle">
<text x="183.4" y="935.3">10:50</text>
<text x="254.1" y="935.3">10:55</text>
<text x="324.7" y="935.3">11:00</text>
<text x="395.4" y="935.3">11:05</text>
<text x="466.1" y="935.3">11:10</text>
<text x="536.7" y="935.3">11:15</text>
<text x="607.4" y="935.3">11:20</text>
<text x="678.1" y="935.3">11:25</text>
<text x="748.7" y="935.3">11:30</text>
<text x="819.4" y="935.3">11:35</text>
<text x="890.1" y="935.3">11:40</text>
<text x="960.7" y="935.3">11:45</text>
</g>
<g class="lg">
<text x="302.2" y="967.5" class="lh">Curr</text>
<text x="365.4" y="967.5" class="lh">Min</text>
<text x="428.2" y="967.5" class="lh">Max</text>
<text x="499.1" y="967.5" class="lh">Avg</text>
<rect x="53" y="974.8" width="12" height="12" fill="#3f699d"/>
<text x="69.2" y="984.5" textLength="221.6" lengthAdjust="spacingAndGlyphs">Outbound traffic on ether1 (bits/sec)</text>
<text x="302.2" y="984.5">24.814 M</text>
<text x="365.4" y="984.5">14.426 M</text>
<text x="428.2" y="984.5">214.090 M</text>
<text x="499.1" y="984.5">36.418 M</text>
<rect x="53" y="991.9" width="12" height="12" fill="#9e3b39"/>
<text x="69.2" y="1001.6" textLength="210.6" lengthAdjust="spacingAndGlyphs">Inbound traffic on ether1 (bits/sec)</text>
<text x="302.2" y="1001.6">24.762 M</text>
<text x="365.4" y="1001.6">14.418 M</text>
<text x="428.2" y="1001.6">213.785 M</text>
<text x="499.1" y="1001.6">36.376 M</text>
</g>
</svg>
<svg class="chart" style="left:981px;top:575px" width="927" height="437" viewBox="981 575 927 437">
<path d="M1048 862.5 H1892.6 M1048 812.5 H1892.6 M1048 762.5 H1892.6 M1048 712.5 H1892.6 M1048 662.5 H1892.6 M1056.5 612.7 V912.5 M1127.5 612.7 V912.5 M1198.5 612.7 V912.5 M1268.5 612.7 V912.5 M1339.5 612.7 V912.5 M1410.5 612.7 V912.5 M1480.5 612.7 V912.5 M1551.5 612.7 V912.5 M1622.5 612.7 V912.5 M1692.5 612.7 V912.5 M1763.5 612.7 V912.5 M1834.5 612.7 V912.5" stroke="#e5e5e5" stroke-width="1" stroke-dasharray="3 3" fill="none" shape-rendering="crispEdges"/>
<clipPath id="c981_575"><rect x="1047.5" y="611.7" width="848.1" height="301.3"/></clipPath>
<g clip-path="url(#c981_575)">
<path d="M1047.8 903 L1048.3 903.2 L1048.9 903.6 L1049.5 902.1 L1050.1 904.6 L1050.7 902.9 L1051.3 901.9 L1051.9 903.5 L1052.5 902.3 L1053.1 904.6 L1053.6 903.4 L1054.2 904.1 L1054.8 902.8 L1055.4 903.5 L1056 901.9 L1056.6 903.1 L1057.2 903.7 L1057.8 905.5 L1058.4 900.6 L1059 891.2 L1059.5 902.4 L1060.1 903.7 L1060.7 903.9 L1061.3 903.8 L1061.9 902.4 L1062.5 904 L1063.1 900.5 L1063.7 903.8 L1064.3 904.1 L1064.9 902.1 L1065.4 905.2 L1066 895 L1066.6 904.2 L1067.2 902.8 L1067.8 903.1 L1068.4 903.4 L1069 905.3 L1069.6 904.2 L1070.2 900.7 L1070.8 901.7 L1071.3 899.1 L1071.9 887.5 L1072.5 897.9 L1073.1 895.4 L1073.7 899.9 L1074.3 900.1 L1074.9 901.8 L1075.5 900.2 L1076.1 902.3 L1076.7 903 L1077.2 901.3 L1077.8 903.5 L1078.4 901.4 L1079 901.1 L1079.6 903.2 L1080.2 903.7 L1080.8 903.1 L1081.4 903.2 L1082 899.1 L1082.6 899.5 L1083.1 903.7 L1083.7 903.2 L1084.3 889.5 L1084.9 882.7 L1085.5 887.3 L1086.1 890.1 L1086.7 890.2 L1087.3 895.2 L1087.9 895.2 L1088.5 895.9 L1089 895.1 L1089.6 895.4 L1090.2 897.7 L1090.8 897.7 L1091.4 897.4 L1092 894.7 L1092.6 896.5 L1093.2 894.4 L1093.8 896.4 L1094.4 898.4 L1094.9 897.1 L1095.5 895.7 L1096.1 897.6 L1096.7 900.9 L1097.3 902.5 L1097.9 904.6 L1098.5 902.9 L1099.1 903.5 L1099.7 905.3 L1100.3 903.2 L1100.8 902.3 L1101.4 904.2 L1102 903.8 L1102.6 904.6 L1103.2 905.1 L1103.8 906.1 L1104.4 903.1 L1105 905.3 L1105.6 904 L1106.2 900 L1106.7 902.5 L1107.3 902.7 L1107.9 900.8 L1108.5 904.5 L1109.1 906.2 L1109.7 906.5 L1110.3 906.7 L1110.9 907.6 L1111.5 908.2 L1112.1 905.7 L1112.6 905 L1113.2 896.2 L1113.8 903.8 L1114.4 904.3 L1115 903.9 L1115.6 903.4 L1116.2 904.2 L1116.8 903.9 L1117.4 904.7 L1118 902.5 L1118.5 898 L1119.1 896.8 L1119.7 893.1 L1120.3 897.5 L1120.9 901.1 L1121.5 900.9 L1122.1 900.8 L1122.7 905 L1123.3 903.9 L1123.9 904.1 L1124.4 902.4 L1125 904.1 L1125.6 901.9 L1126.2 901.4 L1126.8 905.4 L1127.4 903.6 L1128 903.3 L1128.6 902.7 L1129.2 904 L1129.8 906.9 L1130.3 904.7 L1130.9 903.3 L1131.5 904.7 L1132.1 906.5 L1132.7 905.1 L1133.3 904.4 L1133.9 903.3 L1134.5 902.9 L1135.1 901.9 L1135.7 900.5 L1136.2 899.9 L1136.8 901 L1137.4 899.7 L1138 903 L1138.6 901.2 L1139.2 903.8 L1139.8 894 L1140.4 902.1 L1141 901.6 L1141.6 902.2 L1142.1 902.1 L1142.7 903.1 L1143.3 901.9 L1143.9 899.5 L1144.5 899.7 L1145.1 900.7 L1145.7 903.9 L1146.3 900.9 L1146.9 899.6 L1147.5 896.4 L1148 900.1 L1148.6 896.9 L1149.2 897 L1149.8 895.6 L1150.4 900.8 L1151 903 L1151.6 901.3 L1152.2 904 L1152.8 900.7 L1153.4 902 L1153.9 901.6 L1154.5 902.5 L1155.1 899.8 L1155.7 888.1 L1156.3 903.3 L1156.9 904 L1157.5 902.6 L1158.1 901.8 L1158.7 904 L1159.3 901.1 L1159.8 904 L1160.4 902.9 L1161 903.7 L1161.6 901.7 L1162.2 901.1 L1162.8 903.1 L1163.4 905 L1164 899.8 L1164.6 904.1 L1165.2 902.4 L1165.7 898.1 L1166.3 896.6 L1166.9 897.1 L1167.5 899 L1168.1 898 L1168.7 898.9 L1169.3 896.7 L1169.9 899.2 L1170.5 898.2 L1171.1 898.4 L1171.6 899.5 L1172.2 898.2 L1172.8 899.6 L1173.4 899.8 L1174 899.9 L1174.6 898.5 L1175.2 898.4 L1175.8 899.7 L1176.4 900.9 L1177 901.8 L1177.5 901.6 L1178.1 899.1 L1178.7 900.2 L1179.3 899.2 L1179.9 902 L1180.5 901.2 L1181.1 900.5 L1181.7 899.8 L1182.3 899.4 L1182.9 899.3 L1183.4 900 L1184 899.7 L1184.6 898.9 L1185.2 899.4 L1185.8 899.5 L1186.4 898.7 L1187 900 L1187.6 899 L1188.2 901.7 L1188.8 898.8 L1189.3 899.1 L1189.9 899.2 L1190.5 900.1 L1191.1 904.2 L1191.7 903.1 L1192.3 903.5 L1192.9 903.3 L1193.5 901.5 L1194.1 900.5 L1194.7 904.3 L1195.2 902.7 L1195.8 898.6 L1196.4 900.6 L1197 903 L1197.6 903.7 L1198.2 899.9 L1198.8 899.5 L1199.4 902.7 L1200 902.6 L1200.6 900.7 L1201.1 902 L1201.7 902.2 L1202.3 898.6 L1202.9 899.3 L1203.5 899.6 L1204.1 896.1 L1204.7 901.1 L1205.3 897.9 L1205.9 900.5 L1206.5 897.2 L1207 897.7 L1207.6 899.4 L1208.2 894.7 L1208.8 897.6 L1209.4 901 L1210 901.7 L1210.6 900.7 L1211.2 902.2 L1211.8 902.2 L1212.4 902.8 L1212.9 885.2 L1213.5 898 L1214.1 905 L1214.7 901.1 L1215.3 899.7 L1215.9 902.4 L1216.5 904.9 L1217.1 900.9 L1217.7 904.3 L1218.3 900.7 L1218.8 901.4 L1219.4 897.9 L1220 899.6 L1220.6 899.2 L1221.2 900.7 L1221.8 899 L1222.4 898.8 L1223 895.8 L1223.6 900.7 L1224.2 900.8 L1224.7 898.1 L1225.3 895.9 L1225.9 899.1 L1226.5 898.4 L1227.1 901.1 L1227.7 903.6 L1228.3 902.4 L1228.9 904.5 L1229.5 900.2 L1230.1 901.8 L1230.6 900 L1231.2 901.1 L1231.8 904.3 L1232.4 905.3 L1233 906.7 L1233.6 905.6 L1234.2 908.2 L1234.8 909.5 L1235.4 910.6 L1236 910.5 L1236.5 909.8 L1237.1 910.3 L1237.7 910 L1238.3 909.8 L1238.9 909.9 L1239.5 909.8 L1240.1 910.4 L1240.7 910.7 L1241.3 910.8 L1241.9 910.1 L1242.4 909.5 L1243 911 L1243.6 911.1 L1244.2 910.2 L1244.8 910.1 L1245.4 910.7 L1246 910.6 L1246.6 910.5 L1247.2 910.7 L1247.8 910.5 L1248.3 910.2 L1248.9 909.6 L1249.5 911 L1250.1 911.1 L1250.7 909.9 L1251.3 909.9 L1251.9 910.4 L1252.5 909.5 L1253.1 909.8 L1253.7 910.4 L1254.2 910.9 L1254.8 909.5 L1255.4 910.9 L1256 910.5 L1256.6 910.6 L1257.2 910.6 L1257.8 910.3 L1258.4 910.7 L1259 910.3 L1259.6 909.9 L1260.1 910.3 L1260.7 909.8 L1261.3 909.5 L1261.9 909.6 L1262.5 910.1 L1263.1 911 L1263.7 909.5 L1264.3 909.4 L1264.9 910.4 L1265.5 909.9 L1266 910 L1266.6 910.5 L1267.2 909.4 L1267.8 909.9 L1268.4 910.2 L1269 910.9 L1269.6 910.5 L1270.2 911 L1270.8 911 L1271.4 699 L1271.9 911 L1272.5 911 L1273.1 911 L1273.7 911 L1274.3 911 L1274.9 911 L1275.5 911 L1276.1 911 L1276.7 911 L1277.3 703.4 L1277.8 632 L1278.4 635.2 L1279 638.4 L1279.6 635.2 L1280.2 635.1 L1280.8 633.5 L1281.4 628 L1282 638 L1282.6 835.8 L1283.2 911 L1283.7 911 L1284.3 911 L1284.9 911 L1285.5 911 L1286.1 911 L1286.7 821.5 L1287.3 780.3 L1287.9 777.7 L1288.5 770 L1289.1 782.1 L1289.6 783.1 L1290.2 787.4 L1290.8 788.9 L1291.4 761 L1292 779 L1292.6 773.7 L1293.2 813 L1293.8 910 L1294.4 910 L1295 905.7 L1295.5 888.9 L1296.1 883.6 L1296.7 883.1 L1297.3 882.6 L1297.9 882 L1298.5 881.5 L1299.1 878.4 L1299.7 846.9 L1300.3 841.1 L1300.9 828.7 L1301.4 808.2 L1302 817.4 L1302.6 817.8 L1303.2 826.4 L1303.8 798.2 L1304.4 782.3 L1305 795.2 L1305.6 746.6 L1306.2 810.8 L1306.8 687.1 L1307.3 669.8 L1307.9 665.8 L1308.5 665.3 L1309.1 650.2 L1309.7 681.8 L1310.3 669 L1310.9 677.7 L1311.5 655 L1312.1 667.4 L1312.7 674.3 L1313.2 677.4 L1313.8 646.4 L1314.4 660.4 L1315 672 L1315.6 678.3 L1316.2 681.4 L1316.8 686.4 L1317.4 682.1 L1318 681.5 L1318.6 690.8 L1319.1 686.6 L1319.7 687.3 L1320.3 697.1 L1320.9 698.7 L1321.5 693.5 L1322.1 701.4 L1322.7 694.5 L1323.3 703.3 L1323.9 699.4 L1324.5 724.7 L1325 714.3 L1325.6 710.8 L1326.2 706.4 L1326.8 704.8 L1327.4 712.7 L1328 708.8 L1328.6 710.2 L1329.2 706.4 L1329.8 710.2 L1330.4 714.3 L1330.9 714.8 L1331.5 720.1 L1332.1 711.5 L1332.7 711.5 L1333.3 719.3 L1333.9 711.7 L1334.5 713.5 L1335.1 717.6 L1335.7 716 L1336.3 718.6 L1336.8 733.1 L1337.4 804.3 L1338 803 L1338.6 808.6 L1339.2 803.8 L1339.8 807.1 L1340.4 808.4 L1341 807 L1341.6 802.3 L1342.2 803.3 L1342.7 807.6 L1343.3 807.4 L1343.9 786.9 L1344.5 645.1 L1345.1 645.2 L1345.7 645.3 L1346.3 645.4 L1346.9 645.5 L1347.5 645.6 L1348.1 671.6 L1348.6 712.9 L1349.2 754.2 L1349.8 795.4 L1350.4 804.5 L1351 804.7 L1351.6 804.6 L1352.2 805.6 L1352.8 758.8 L1353.4 708.4 L1354 675.2 L1354.5 677.4 L1355.1 679.6 L1355.7 681.8 L1356.3 686.5 L1356.9 694 L1357.5 701.5 L1358.1 709 L1358.7 739.2 L1359.3 784.4 L1359.9 804.9 L1360.4 804.8 L1361 805 L1361.6 804.6 L1362.2 804 L1362.8 805.3 L1363.4 804.9 L1364 804 L1364.6 801.5 L1365.2 803.8 L1365.8 803 L1366.3 809 L1366.9 811.9 L1367.5 815.1 L1368.1 818.7 L1368.7 823.2 L1369.3 821.3 L1369.9 814.8 L1370.5 808.3 L1371.1 801.9 L1371.7 792.4 L1372.2 781.7 L1372.8 771 L1373.4 783.3 L1374 809.5 L1374.6 820.8 L1375.2 820.4 L1375.8 820 L1376.4 805.4 L1377 801.5 L1377.6 802.3 L1378.1 763.8 L1378.7 635.3 L1379.3 627.5 L1379.9 620 L1380.5 627.3 L1381.1 634.3 L1381.7 641.3 L1382.3 648.4 L1382.9 728 L1383.5 805 L1384 804.6 L1384.6 804.2 L1385.2 803.8 L1385.8 803.4 L1386.4 803 L1387 910 L1387.6 910 L1388.2 910 L1388.8 693 L1389.4 702 L1389.9 712.2 L1390.5 714.9 L1391.1 716.2 L1391.7 713.5 L1392.3 715.6 L1392.9 711.9 L1393.5 714.6 L1394.1 717.6 L1394.7 727.3 L1395.3 732.5 L1395.8 743.7 L1396.4 748.1 L1397 758.8 L1397.6 760.8 L1398.2 760.1 L1398.8 782.4 L1399.4 803.7 L1400 858.1 L1400.6 887.3 L1401.2 909.5 L1401.7 910 L1402.3 910 L1402.9 910 L1403.5 910 L1404.1 910 L1404.7 910 L1405.3 910 L1405.9 910 L1406.5 910 L1407.1 910.1 L1407.6 902.4 L1408.2 823.1 L1408.8 803.7 L1409.4 797.8 L1410 796.6 L1410.6 784.6 L1411.2 789.9 L1411.8 810.1 L1412.4 786.6 L1413 800.5 L1413.5 798.1 L1414.1 791.3 L1414.7 809.4 L1415.3 807.6 L1415.9 802.2 L1416.5 805.5 L1417.1 809.6 L1417.7 801.6 L1418.3 802.7 L1418.9 800.8 L1419.4 802.1 L1420 801.3 L1420.6 800.8 L1421.2 799.6 L1421.8 790.4 L1422.4 802.9 L1423 791.3 L1423.6 792 L1424.2 786.9 L1424.8 794.1 L1425.3 796.4 L1425.9 789.7 L1426.5 800.6 L1427.1 804 L1427.7 793.5 L1428.3 799.6 L1428.9 803.2 L1429.5 802.4 L1430.1 800.4 L1430.7 791.8 L1431.2 798.9 L1431.8 794.6 L1432.4 799.4 L1433 794.2 L1433.6 801 L1434.2 796.3 L1434.8 789 L1435.4 796.1 L1436 801 L1436.6 792.3 L1437.1 800.2 L1437.7 796.5 L1438.3 792.6 L1438.9 788.6 L1439.5 785.8 L1440.1 802.6 L1440.7 796 L1441.3 799.3 L1441.9 773.7 L1442.5 777.6 L1443 786.6 L1443.6 776.4 L1444.2 757.8 L1444.8 779.4 L1445.4 771.3 L1446 781.1 L1446.6 788 L1447.2 788 L1447.8 836.7 L1448.4 910.5 L1448.9 910.5 L1449.5 910.5 L1450.1 910.5 L1450.7 910.5 L1451.3 910.5 L1451.9 910.5 L1452.5 910.5 L1453.1 910.5 L1453.7 910.5 L1454.3 910.5 L1454.8 910.5 L1455.4 910.5 L1456 910.5 L1456.6 910.5 L1457.2 910.5 L1457.8 910.5 L1458.4 910.5 L1459 910.5 L1459.6 910.5 L1460.2 910.5 L1460.7 910.5 L1461.3 910.5 L1461.9 910.5 L1462.5 910.5 L1463.1 910.5 L1463.7 910.5 L1464.3 910.5 L1464.9 910.5 L1465.5 910.5 L1466.1 910.5 L1466.6 910.5 L1467.2 910.5 L1467.8 910.5 L1468.4 910.5 L1469 910.5 L1469.6 910.5 L1470.2 910.5 L1470.8 910.5 L1471.4 910.5 L1472 910.5 L1472.5 910.5 L1473.1 910.5 L1473.7 910.5 L1474.3 910.5 L1474.9 910.5 L1475.5 910.5 L1476.1 910.5 L1476.7 910.5 L1477.3 910.5 L1477.9 910.5 L1478.4 910.5 L1479 910.5 L1479.6 910.5 L1480.2 910.5 L1480.8 910.5 L1481.4 910.5 L1482 910.5 L1482.6 910.5 L1483.2 910.5 L1483.8 910.5 L1484.3 910.5 L1484.9 910.5 L1485.5 910.5 L1486.1 910.5 L1486.7 910.5 L1487.3 910.5 L1487.9 910.5 L1488.5 910.5 L1489.1 910.5 L1489.7 910.5 L1490.2 910.5 L1490.8 910.5 L1491.4 910.5 L1492 910.5 L1492.6 910.5 L1493.2 910.5 L1493.8 910.5 L1494.4 910.5 L1495 910.5 L1495.6 910.5 L1496.1 910.5 L1496.7 910.5 L1497.3 910.5 L1497.9 910.5 L1498.5 910.5 L1499.1 910.5 L1499.7 910.5 L1500.3 910.5 L1500.9 910.5 L1501.5 910.5 L1502 910.5 L1502.6 910.5 L1503.2 910.5 L1503.8 910.5 L1504.4 910.5 L1505 910.5 L1505.6 910.5 L1506.2 910.5 L1506.8 910.5 L1507.4 910.5 L1507.9 910.5 L1508.5 910.5 L1509.1 910.5 L1509.7 910.5 L1510.3 910.5 L1510.9 910.5 L1511.5 910.5 L1512.1 910.5 L1512.7 910.5 L1513.3 910.5 L1513.8 910.5 L1514.4 910.5 L1515 910.5 L1515.6 910.5 L1516.2 910.5 L1516.8 910.5 L1517.4 910.5 L1518 910.5 L1518.6 910.5 L1519.2 910.5 L1519.7 910.5 L1520.3 910.5 L1520.9 910.5 L1521.5 910.5 L1522.1 721 L1522.7 650.8 L1523.3 652.2 L1523.9 650 L1524.5 646 L1525.1 613 L1525.6 686 L1526.2 663.6 L1526.8 658.6 L1527.4 642 L1528 653.5 L1528.6 646 L1529.2 646.7 L1529.8 653.4 L1530.4 650.4 L1531 654.6 L1531.5 656.4 L1532.1 644 L1532.7 662.8 L1533.3 652.5 L1533.9 658.1 L1534.5 651.5 L1535.1 651.4 L1535.7 663.1 L1536.3 641 L1536.9 642 L1537.4 659.3 L1538 659.6 L1538.6 629 L1539.2 650.6 L1539.8 661.1 L1540.4 648.5 L1541 660.8 L1541.6 719.6 L1542.2 732.6 L1542.8 727.3 L1543.3 744.6 L1543.9 714.5 L1544.5 724.8 L1545.1 746.4 L1545.7 725.3 L1546.3 753.6 L1546.9 777 L1547.5 719.3 L1548.1 683.2 L1548.7 683.8 L1549.2 682.5 L1549.8 678 L1550.4 672.6 L1551 713.3 L1551.6 900.1 L1552.2 910.5 L1552.8 910.5 L1553.4 910.5 L1554 910.5 L1554.6 910.5 L1555.1 910.5 L1555.7 910.5 L1556.3 877.2 L1556.9 792.8 L1557.5 792.7 L1558.1 812.2 L1558.7 910.4 L1559.3 910.2 L1559.9 910.5 L1560.5 910.5 L1561 910.5 L1561.6 910.5 L1562.2 910.5 L1562.8 910.5 L1563.4 910.5 L1564 910.5 L1564.6 910.5 L1565.2 910.5 L1565.8 910.5 L1566.4 910.5 L1566.9 910.5 L1567.5 910.5 L1568.1 910.5 L1568.7 910.5 L1569.3 910.5 L1569.9 910.5 L1570.5 910.5 L1571.1 910.5 L1571.7 910.5 L1572.3 910.5 L1572.8 910.5 L1573.4 910.5 L1574 910.5 L1574.6 910.5 L1575.2 910.5 L1575.8 910.5 L1576.4 910.5 L1577 910.5 L1577.6 910.5 L1578.2 910.5 L1578.7 910.5 L1579.3 910.5 L1579.9 910.5 L1580.5 910.5 L1581.1 910.4 L1581.7 910.4 L1582.3 910.4 L1582.9 910.4 L1583.5 910.4 L1584.1 910.4 L1584.6 910.4 L1585.2 910.4 L1585.8 910.4 L1586.4 910.4 L1587 910.4 L1587.6 910.4 L1588.2 910.4 L1588.8 910.4 L1589.4 910.4 L1590 910.4 L1590.5 910.4 L1591.1 910.4 L1591.7 910.4 L1592.3 910.4 L1592.9 910.4 L1593.5 910.4 L1594.1 910.4 L1594.7 910.4 L1595.3 910.4 L1595.9 910.4 L1596.4 910.4 L1597 910.4 L1597.6 910.4 L1598.2 910.4 L1598.8 910.4 L1599.4 910.4 L1600 910.4 L1600.6 910.4 L1601.2 910.4 L1601.8 910.4 L1602.3 910.4 L1602.9 910.4 L1603.5 910.4 L1604.1 910.4 L1604.7 910.4 L1605.3 910.4 L1605.9 910.4 L1606.5 910.4 L1607.1 910.4 L1607.7 910.4 L1608.2 910.4 L1608.8 910.4 L1609.4 910.4 L1610 910.4 L1610.6 910.4 L1611.2 910.4 L1611.8 910.4 L1612.4 910.4 L1613 910.4 L1613.6 910.4 L1614.1 910.4 L1614.7 910.4 L1615.3 910.4 L1615.9 910.4 L1616.5 910.4 L1617.1 910.4 L1617.7 910.4 L1618.3 910.4 L1618.9 910.4 L1619.5 910.4 L1620 910.4 L1620.6 910.4 L1621.2 910.4 L1621.8 910.4 L1622.4 910.4 L1623 910.4 L1623.6 910.3 L1624.2 910.3 L1624.8 910.3 L1625.4 910.3 L1625.9 910.3 L1626.5 910.3 L1627.1 910.3 L1627.7 910.3 L1628.3 910.3 L1628.9 910.3 L1629.5 910.3 L1630.1 910.3 L1630.7 910.3 L1631.3 910.3 L1631.8 910.3 L1632.4 910.3 L1633 910.3 L1633.6 910.3 L1634.2 910.3 L1634.8 910.3 L1635.4 910.3 L1636 910.3 L1636.6 910.3 L1637.2 910.3 L1637.7 910.3 L1638.3 910.3 L1638.9 910.3 L1639.5 910.3 L1640.1 910.3 L1640.7 910.3 L1641.3 910.3 L1641.9 910.3 L1642.5 910.3 L1643.1 910.3 L1643.6 910.3 L1644.2 910.3 L1644.8 910.3 L1645.4 910.3 L1646 910.3 L1646.6 910.3 L1647.2 910.3 L1647.8 910.3 L1648.4 910.3 L1649 910.3 L1649.5 910.3 L1650.1 910.3 L1650.7 910.3 L1651.3 910.3 L1651.9 910.3 L1652.5 910.3 L1653.1 910.3 L1653.7 910.3 L1654.3 910.3 L1654.9 910.3 L1655.4 910.3 L1656 910.3 L1656.6 910.3 L1657.2 910.3 L1657.8 910.3 L1658.4 910.3 L1659 910.3 L1659.6 910.3 L1660.2 910.3 L1660.8 910.3 L1661.3 910.3 L1661.9 910.3 L1662.5 910.3 L1663.1 910.3 L1663.7 910.3 L1664.3 910.3 L1664.9 910.3 L1665.5 910.2 L1666.1 910.2 L1666.7 910.2 L1667.2 910.2 L1667.8 910.2 L1668.4 910.2 L1669 910.2 L1669.6 910.2 L1670.2 910.2 L1670.8 910.2 L1671.4 910.2 L1672 910.2 L1672.6 910.2 L1673.1 910.2 L1673.7 910.2 L1674.3 910.2 L1674.9 910.2 L1675.5 910.2 L1676.1 910.2 L1676.7 910.2 L1677.3 910.2 L1677.9 910.2 L1678.5 910.2 L1679 910.2 L1679.6 910.2 L1680.2 910.2 L1680.8 910.2 L1681.4 910.2 L1682 910.2 L1682.6 910.2 L1683.2 910.2 L1683.8 910.2 L1684.4 910.2 L1684.9 910.2 L1685.5 910.2 L1686.1 910.2 L1686.7 910.2 L1687.3 910.2 L1687.9 910.2 L1688.5 910.2 L1689.1 910.2 L1689.7 910.2 L1690.3 910.2 L1690.8 910.2 L1691.4 910.2 L1692 910.2 L1692.6 910.2 L1693.2 910.2 L1693.8 910.2 L1694.4 910.2 L1695 910.2 L1695.6 910.2 L1696.2 910.2 L1696.7 910.2 L1697.3 910.2 L1697.9 910.2 L1698.5 910.2 L1699.1 910.2 L1699.7 910.2 L1700.3 910.2 L1700.9 910.2 L1701.5 910.2 L1702.1 910.2 L1702.6 910.2 L1703.2 910.2 L1703.8 910.2 L1704.4 910.2 L1705 910.2 L1705.6 910.2 L1706.2 910.2 L1706.8 910.2 L1707.4 910.2 L1708 910.1 L1708.5 910.1 L1709.1 910.1 L1709.7 910.1 L1710.3 910.1 L1710.9 910.1 L1711.5 910.1 L1712.1 910.1 L1712.7 910.1 L1713.3 910.1 L1713.9 910.1 L1714.4 910.1 L1715 910.1 L1715.6 910.1 L1716.2 910.1 L1716.8 910.1 L1717.4 910.1 L1718 910.1 L1718.6 910 L1719.2 909.9 L1719.8 909.8 L1720.3 909.8 L1720.9 909.7 L1721.5 909.6 L1722.1 909.5 L1722.7 909.4 L1723.3 909.3 L1723.9 909.2 L1724.5 909.2 L1725.1 909.1 L1725.7 909 L1726.2 909 L1726.8 897.6 L1727.4 908.8 L1728 908.8 L1728.6 908.9 L1729.2 908.8 L1729.8 908.7 L1730.4 908.7 L1731 901 L1731.6 908.6 L1732.1 908.3 L1732.7 908.5 L1733.3 907.1 L1733.9 906.1 L1734.5 904.5 L1735.1 901.4 L1735.7 905.6 L1736.3 902.3 L1736.9 903.9 L1737.5 902.5 L1738 906.8 L1738.6 903.9 L1739.2 900.8 L1739.8 903.8 L1740.4 901.4 L1741 904.6 L1741.6 903.4 L1742.2 900.2 L1742.8 905.8 L1743.4 903.2 L1743.9 902.4 L1744.5 902 L1745.1 900.6 L1745.7 900.4 L1746.3 899.8 L1746.9 901.2 L1747.5 898.2 L1748.1 902.6 L1748.7 896.2 L1749.3 900.8 L1749.8 900.3 L1750.4 900.1 L1751 902.8 L1751.6 902.2 L1752.2 902.5 L1752.8 901.8 L1753.4 900.1 L1754 897.9 L1754.6 904.2 L1755.2 899.2 L1755.7 900.9 L1756.3 899.5 L1756.9 901.3 L1757.5 899.4 L1758.1 898.5 L1758.7 901.6 L1759.3 896.9 L1759.9 899.9 L1760.5 899.6 L1761.1 900.5 L1761.6 899.6 L1762.2 901.8 L1762.8 899.6 L1763.4 902.4 L1764 900.6 L1764.6 897.8 L1765.2 899.6 L1765.8 899.8 L1766.4 898.8 L1767 903.7 L1767.5 899.8 L1768.1 900.5 L1768.7 898.2 L1769.3 893.1 L1769.9 880.5 L1770.5 836.7 L1771.1 855.2 L1771.7 794.1 L1772.3 732.3 L1772.9 702.8 L1773.4 713.2 L1774 725.1 L1774.6 731.8 L1775.2 748.1 L1775.8 737.4 L1776.4 773.1 L1777 772.2 L1777.6 796.4 L1778.2 807.8 L1778.8 796 L1779.3 789.3 L1779.9 830.2 L1780.5 837.5 L1781.1 788.8 L1781.7 735.7 L1782.3 739 L1782.9 746.1 L1783.5 747.6 L1784.1 789.2 L1784.7 857.4 L1785.2 888.9 L1785.8 898.7 L1786.4 902.6 L1787 901.5 L1787.6 903.8 L1788.2 899.4 L1788.8 901.1 L1789.4 900.2 L1790 898.1 L1790.6 903.6 L1791.1 901.9 L1791.7 897.9 L1792.3 898.5 L1792.9 901 L1793.5 902.6 L1794.1 901.9 L1794.7 898.6 L1795.3 896.2 L1795.9 896.4 L1796.5 897.3 L1797 903.9 L1797.6 890.8 L1798.2 900.2 L1798.8 902.7 L1799.4 899.1 L1800 902.3 L1800.6 896.8 L1801.2 901.3 L1801.8 894.2 L1802.4 902.8 L1802.9 900 L1803.5 898.7 L1804.1 901.2 L1804.7 898.8 L1805.3 899.8 L1805.9 900.5 L1806.5 901.3 L1807.1 898.1 L1807.7 902.2 L1808.3 904.6 L1808.8 900.8 L1809.4 899 L1810 902.7 L1810.6 885.7 L1811.2 902.7 L1811.8 902.9 L1812.4 903 L1813 901.9 L1813.6 899.5 L1814.2 897.8 L1814.7 901.5 L1815.3 899.3 L1815.9 900.8 L1816.5 902.3 L1817.1 899.7 L1817.7 903.2 L1818.3 902.2 L1818.9 897.4 L1819.5 902.8 L1820.1 898.5 L1820.6 897.7 L1821.2 901.1 L1821.8 902.4 L1822.4 902.4 L1823 901.7 L1823.6 897.8 L1824.2 901.8 L1824.8 903.8 L1825.4 898 L1826 903.7 L1826.5 899.6 L1827.1 898.9 L1827.7 901.6 L1828.3 902.6 L1828.9 899 L1829.5 897.8 L1830.1 899.3 L1830.7 900.5 L1831.3 902.3 L1831.9 899.5 L1832.4 903.5 L1833 900.2 L1833.6 904.3 L1834.2 900.6 L1834.8 899.9 L1835.4 899.1 L1836 897.8 L1836.6 902.1 L1837.2 898.6 L1837.8 900.2 L1838.3 893.1 L1838.9 902 L1839.5 893.5 L1840.1 898.4 L1840.7 898.4 L1841.3 898.6 L1841.9 895.8 L1842.5 894.7 L1843.1 896.8 L1843.7 899.9 L1844.2 895.6 L1844.8 901.1 L1845.4 896.2 L1846 896.4 L1846.6 895.7 L1847.2 897.9 L1847.8 895.8 L1848.4 896.8 L1849 895.8 L1849.6 897.8 L1850.1 895.6 L1850.7 900.5 L1851.3 892 L1851.9 898.6 L1852.5 894.8 L1853.1 898.8 L1853.7 891.6 L1854.3 899.9 L1854.9 895.4 L1855.5 898.4 L1856 892.7 L1856.6 898.9 L1857.2 896.9 L1857.8 898.3 L1858.4 893.9 L1859 899.7 L1859.6 896.9 L1860.2 889.8 L1860.8 896.9 L1861.4 891.2 L1861.9 891.8 L1862.5 895.1 L1863.1 897.4 L1863.7 894.9 L1864.3 891.5 L1864.9 899.9 L1865.5 893.4 L1866.1 894.9 L1866.7 895.4 L1867.3 858.4 L1867.8 837.8 L1868.4 835.4 L1869 831.8 L1869.6 822 L1870.2 809.1 L1870.8 806.7 L1871.4 849 L1872 894.7 L1872.6 903 L1873.2 898.1 L1873.7 901.9 L1874.3 899.3 L1874.9 901.2 L1875.5 900.4 L1876.1 902.6 L1876.7 897.8 L1877.3 896.1 L1877.9 898.8 L1878.5 901.3 L1879.1 895.3 L1879.6 899.2 L1880.2 900.1 L1880.8 901.4 L1881.4 900.9 L1882 902.1 L1882.6 899.7 L1883.2 898.9 L1883.8 899.1 L1884.4 896.8 L1885 899.1 L1885.5 902.3 L1886.1 903.2 L1886.7 901.1 L1887.3 903.3 L1887.9 900.9 L1888.5 903.5 L1889.1 899.1 L1889.7 903 L1890.3 897.2 L1890.9 898.6 L1891.4 896.4 L1892 893 L1892.6 903 L1893.2 899.8 L1893.8 899.1 L1894.4 897.1 L1895 900.9 L1895 912.5 L1047.8 912.5 Z" fill="#3f699d" fill-opacity="0.2" stroke="none"/>
<path d="M1047.8 904.7 L1048.3 902.2 L1048.9 902.5 L1049.5 903.3 L1050.1 904.6 L1050.7 901.6 L1051.3 901.5 L1051.9 903.2 L1052.5 903.3 L1053.1 904.6 L1053.6 905.4 L1054.2 904 L1054.8 902.9 L1055.4 905.3 L1056 901.6 L1056.6 904.7 L1057.2 904.7 L1057.8 905.5 L1058.4 900.3 L1059 891.2 L1059.5 901.1 L1060.1 902.8 L1060.7 905.6 L1061.3 904.4 L1061.9 903.5 L1062.5 905.4 L1063.1 900.6 L1063.7 904.3 L1064.3 905.3 L1064.9 901.5 L1065.4 905.5 L1066 895 L1066.6 903.9 L1067.2 903.4 L1067.8 904.5 L1068.4 903.8 L1069 905.2 L1069.6 905.7 L1070.2 900.1 L1070.8 901.5 L1071.3 896.7 L1071.9 887.5 L1072.5 894.7 L1073.1 895.5 L1073.7 898.9 L1074.3 899.2 L1074.9 901.2 L1075.5 900 L1076.1 904.8 L1076.7 902.5 L1077.2 899.9 L1077.8 904.4 L1078.4 899.8 L1079 900.4 L1079.6 903.5 L1080.2 903.9 L1080.8 903.6 L1081.4 903.5 L1082 895.7 L1082.6 902.1 L1083.1 904.6 L1083.7 904.3 L1084.3 887.7 L1084.9 882.3 L1085.5 890.1 L1086.1 890.2 L1086.7 889.4 L1087.3 892.8 L1087.9 897.8 L1088.5 894.4 L1089 895 L1089.6 894.5 L1090.2 898.1 L1090.8 898.2 L1091.4 897 L1092 891.9 L1092.6 897.1 L1093.2 895.1 L1093.8 897.4 L1094.4 898.6 L1094.9 898.8 L1095.5 893.6 L1096.1 896.5 L1096.7 902.1 L1097.3 903.1 L1097.9 904.1 L1098.5 902.8 L1099.1 902.4 L1099.7 905.5 L1100.3 902.2 L1100.8 902.4 L1101.4 904.6 L1102 902.9 L1102.6 905.1 L1103.2 905.7 L1103.8 906.3 L1104.4 902.9 L1105 906.6 L1105.6 905.2 L1106.2 900.5 L1106.7 900.7 L1107.3 902.8 L1107.9 900.2 L1108.5 905.1 L1109.1 906.1 L1109.7 907.3 L1110.3 906.7 L1110.9 907.8 L1111.5 908.1 L1112.1 907.1 L1112.6 903.9 L1113.2 896.2 L1113.8 903.2 L1114.4 904 L1115 904.6 L1115.6 902.4 L1116.2 903.9 L1116.8 903.2 L1117.4 905.1 L1118 902.5 L1118.5 896.1 L1119.1 896.6 L1119.7 893.1 L1120.3 898.5 L1120.9 900 L1121.5 900.3 L1122.1 900.8 L1122.7 904.5 L1123.3 903.1 L1123.9 904.7 L1124.4 901.4 L1125 905.8 L1125.6 902 L1126.2 899.9 L1126.8 905.8 L1127.4 902.7 L1128 902.3 L1128.6 900.7 L1129.2 904.2 L1129.8 906.7 L1130.3 906 L1130.9 902.4 L1131.5 902.8 L1132.1 907.3 L1132.7 906.4 L1133.3 904.3 L1133.9 904.6 L1134.5 901.7 L1135.1 904 L1135.7 897.7 L1136.2 899.8 L1136.8 904.1 L1137.4 900.9 L1138 902.7 L1138.6 901.3 L1139.2 903.6 L1139.8 894 L1140.4 903.9 L1141 902.8 L1141.6 900.6 L1142.1 901.7 L1142.7 904.5 L1143.3 900.6 L1143.9 899.3 L1144.5 900.1 L1145.1 900 L1145.7 904.6 L1146.3 902.1 L1146.9 901.4 L1147.5 893.8 L1148 900.5 L1148.6 894.5 L1149.2 899.8 L1149.8 894.6 L1150.4 902.1 L1151 905.1 L1151.6 903.2 L1152.2 903.7 L1152.8 899.1 L1153.4 903.8 L1153.9 902.4 L1154.5 902 L1155.1 898.8 L1155.7 888.1 L1156.3 902.1 L1156.9 903 L1157.5 901.6 L1158.1 899.8 L1158.7 904.5 L1159.3 901.9 L1159.8 903.1 L1160.4 902.9 L1161 905.7 L1161.6 901 L1162.2 899.7 L1162.8 904.2 L1163.4 904.4 L1164 899.6 L1164.6 905.5 L1165.2 904.5 L1165.7 901.3 L1166.3 893.6 L1166.9 894.3 L1167.5 898 L1168.1 897.7 L1168.7 901.5 L1169.3 897.5 L1169.9 899.1 L1170.5 898.5 L1171.1 899.4 L1171.6 899.4 L1172.2 900.5 L1172.8 902 L1173.4 900.6 L1174 901.7 L1174.6 898.8 L1175.2 897.9 L1175.8 898.7 L1176.4 900.5 L1177 901.8 L1177.5 900.9 L1178.1 900.3 L1178.7 899.4 L1179.3 897 L1179.9 902.5 L1180.5 900.4 L1181.1 900.3 L1181.7 898.9 L1182.3 897.6 L1182.9 898.4 L1183.4 899.5 L1184 898.6 L1184.6 899.3 L1185.2 897.9 L1185.8 899.1 L1186.4 899.2 L1187 901.8 L1187.6 897.6 L1188.2 901.1 L1188.8 899.7 L1189.3 898.3 L1189.9 897.4 L1190.5 897.6 L1191.1 904.6 L1191.7 903.1 L1192.3 903.1 L1192.9 902.6 L1193.5 904.1 L1194.1 901.4 L1194.7 904.4 L1195.2 903.1 L1195.8 898.1 L1196.4 899.9 L1197 902.1 L1197.6 904.2 L1198.2 898 L1198.8 900.2 L1199.4 903.7 L1200 902.9 L1200.6 900.7 L1201.1 900.4 L1201.7 903.4 L1202.3 898.1 L1202.9 900.6 L1203.5 899.9 L1204.1 893.7 L1204.7 900.7 L1205.3 895.7 L1205.9 900.4 L1206.5 896.6 L1207 899.7 L1207.6 898.8 L1208.2 892.5 L1208.8 898.3 L1209.4 901.6 L1210 900.3 L1210.6 902.7 L1211.2 903.3 L1211.8 902 L1212.4 902.7 L1212.9 885.2 L1213.5 897.9 L1214.1 905.8 L1214.7 899.5 L1215.3 898.2 L1215.9 900.6 L1216.5 905.9 L1217.1 902.5 L1217.7 905.8 L1218.3 901.5 L1218.8 899.8 L1219.4 901.1 L1220 902.9 L1220.6 897.9 L1221.2 902.4 L1221.8 900.6 L1222.4 899.3 L1223 894.5 L1223.6 900.3 L1224.2 902.2 L1224.7 896.5 L1225.3 895.8 L1225.9 898.4 L1226.5 902.7 L1227.1 902.7 L1227.7 903.1 L1228.3 902 L1228.9 904.2 L1229.5 900 L1230.1 899.6 L1230.6 898.9 L1231.2 899.3 L1231.8 906.1 L1232.4 904.3 L1233 907.8 L1233.6 905.3 L1234.2 907.4 L1234.8 908.8 L1235.4 910.8 L1236 911 L1236.5 909.2 L1237.1 909.8 L1237.7 909.8 L1238.3 910.2 L1238.9 909.3 L1239.5 910.5 L1240.1 910.7 L1240.7 910.5 L1241.3 910.6 L1241.9 909.8 L1242.4 909.1 L1243 911.1 L1243.6 911.1 L1244.2 910.1 L1244.8 909.7 L1245.4 910.9 L1246 910.7 L1246.6 911.1 L1247.2 911.1 L1247.8 910.2 L1248.3 909.8 L1248.9 909.8 L1249.5 911 L1250.1 911.1 L1250.7 909.1 L1251.3 910.2 L1251.9 910.5 L1252.5 909.8 L1253.1 909.7 L1253.7 910.2 L1254.2 911.1 L1254.8 909.4 L1255.4 910.9 L1256 911.2 L1256.6 910.7 L1257.2 910.3 L1257.8 910 L1258.4 911 L1259 909.8 L1259.6 910.4 L1260.1 911.1 L1260.7 909.5 L1261.3 909.6 L1261.9 909.3 L1262.5 910 L1263.1 911 L1263.7 909.7 L1264.3 909.4 L1264.9 910.3 L1265.5 909.4 L1266 909.2 L1266.6 910.7 L1267.2 909.3 L1267.8 909.4 L1268.4 909.8 L1269 911.3 L1269.6 910.8 L1270.2 911 L1270.8 911 L1271.4 699 L1271.9 911 L1272.5 911 L1273.1 911 L1273.7 911 L1274.3 911 L1274.9 911 L1275.5 911 L1276.1 911 L1276.7 911 L1277.3 703.4 L1277.8 632 L1278.4 635.9 L1279 639.1 L1279.6 636.4 L1280.2 637.3 L1280.8 632.9 L1281.4 628 L1282 638.1 L1282.6 835.8 L1283.2 911 L1283.7 911 L1284.3 911 L1284.9 911 L1285.5 911 L1286.1 911 L1286.7 826.5 L1287.3 769.8 L1287.9 783 L1288.5 768.7 L1289.1 782.3 L1289.6 794 L1290.2 790.7 L1290.8 784.1 L1291.4 761 L1292 772.4 L1292.6 775.3 L1293.2 814.8 L1293.8 910 L1294.4 910 L1295 905.7 L1295.5 888.9 L1296.1 883.6 L1296.7 883.1 L1297.3 882.6 L1297.9 882 L1298.5 881.5 L1299.1 878.4 L1299.7 846.9 L1300.3 841.1 L1300.9 828.9 L1301.4 796.8 L1302 814.5 L1302.6 811 L1303.2 832.7 L1303.8 783.5 L1304.4 788.6 L1305 786.5 L1305.6 731.9 L1306.2 813.3 L1306.8 685.1 L1307.3 661.6 L1307.9 657.4 L1308.5 674.2 L1309.1 652 L1309.7 679.3 L1310.3 656.6 L1310.9 673.4 L1311.5 655 L1312.1 678.5 L1312.7 667.1 L1313.2 668.6 L1313.8 660 L1314.4 654.5 L1315 660.7 L1315.6 679.1 L1316.2 688.2 L1316.8 680.6 L1317.4 681.4 L1318 679.2 L1318.6 695.5 L1319.1 683.5 L1319.7 683.6 L1320.3 700 L1320.9 697.6 L1321.5 692.6 L1322.1 702 L1322.7 690.6 L1323.3 702.2 L1323.9 695.9 L1324.5 724.4 L1325 715.9 L1325.6 710.9 L1326.2 706.8 L1326.8 703.2 L1327.4 712.8 L1328 704.8 L1328.6 712.2 L1329.2 706.6 L1329.8 712.9 L1330.4 716.6 L1330.9 718.1 L1331.5 719.9 L1332.1 708.1 L1332.7 715.2 L1333.3 721.2 L1333.9 704.8 L1334.5 711.3 L1335.1 724.6 L1335.7 710.4 L1336.3 714.4 L1336.8 733.6 L1337.4 806.4 L1338 799.7 L1338.6 808 L1339.2 804.6 L1339.8 804.6 L1340.4 808.1 L1341 808.3 L1341.6 802.9 L1342.2 804.6 L1342.7 807 L1343.3 806.3 L1343.9 787.4 L1344.5 645.1 L1345.1 645.2 L1345.7 645.3 L1346.3 645.4 L1346.9 645.5 L1347.5 645.6 L1348.1 671.6 L1348.6 712.9 L1349.2 754.2 L1349.8 795.4 L1350.4 804.4 L1351 805.3 L1351.6 805.5 L1352.2 806.3 L1352.8 760.5 L1353.4 708.8 L1354 675.2 L1354.5 677.4 L1355.1 679.6 L1355.7 681.8 L1356.3 686.5 L1356.9 694 L1357.5 701.5 L1358.1 709 L1358.7 739.2 L1359.3 784.4 L1359.9 804.9 L1360.4 804.8 L1361 805.5 L1361.6 805.3 L1362.2 804.3 L1362.8 806 L1363.4 805.8 L1364 803.9 L1364.6 802 L1365.2 804.1 L1365.8 802.7 L1366.3 809.8 L1366.9 812.1 L1367.5 815.8 L1368.1 818.2 L1368.7 823.4 L1369.3 821.3 L1369.9 814.8 L1370.5 808.3 L1371.1 801.9 L1371.7 792.4 L1372.2 781.7 L1372.8 771 L1373.4 783.3 L1374 809.5 L1374.6 820.8 L1375.2 820.4 L1375.8 820 L1376.4 805.4 L1377 801.5 L1377.6 802.3 L1378.1 763.8 L1378.7 635.3 L1379.3 627.5 L1379.9 620 L1380.5 627.3 L1381.1 634.3 L1381.7 641.3 L1382.3 648.4 L1382.9 728 L1383.5 805 L1384 804.6 L1384.6 804.2 L1385.2 803.8 L1385.8 803.4 L1386.4 803 L1387 910 L1387.6 910 L1388.2 910 L1388.8 693 L1389.4 702.3 L1389.9 711.3 L1390.5 716.7 L1391.1 715.1 L1391.7 717 L1392.3 718.8 L1392.9 714.6 L1393.5 719.3 L1394.1 720.8 L1394.7 727.4 L1395.3 730.6 L1395.8 744.4 L1396.4 752.1 L1397 760.2 L1397.6 764.6 L1398.2 753.1 L1398.8 781.3 L1399.4 803.7 L1400 858.1 L1400.6 887.3 L1401.2 909.5 L1401.7 910 L1402.3 910 L1402.9 910 L1403.5 910 L1404.1 910 L1404.7 910 L1405.3 910 L1405.9 910 L1406.5 910 L1407.1 910.1 L1407.6 902.5 L1408.2 827.1 L1408.8 798.1 L1409.4 792.9 L1410 794.4 L1410.6 780.9 L1411.2 784.1 L1411.8 808.4 L1412.4 777.5 L1413 805.6 L1413.5 804.1 L1414.1 783.9 L1414.7 809.8 L1415.3 805 L1415.9 801.2 L1416.5 808.6 L1417.1 808.8 L1417.7 799.6 L1418.3 802.5 L1418.9 799.3 L1419.4 797.6 L1420 794.9 L1420.6 793.6 L1421.2 794.7 L1421.8 789.5 L1422.4 802.1 L1423 794.8 L1423.6 795.5 L1424.2 782.4 L1424.8 791.8 L1425.3 797.8 L1425.9 791.7 L1426.5 801 L1427.1 804.2 L1427.7 799 L1428.3 804.1 L1428.9 805.8 L1429.5 804.8 L1430.1 797.6 L1430.7 789.8 L1431.2 805.4 L1431.8 793.3 L1432.4 804.5 L1433 796.5 L1433.6 801.3 L1434.2 798.1 L1434.8 791.8 L1435.4 798.9 L1436 799.4 L1436.6 791.6 L1437.1 804.5 L1437.7 800.4 L1438.3 792.6 L1438.9 789.4 L1439.5 785.7 L1440.1 802.2 L1440.7 794.7 L1441.3 797.4 L1441.9 777.7 L1442.5 767.5 L1443 790.6 L1443.6 781.3 L1444.2 746.4 L1444.8 776.1 L1445.4 769.2 L1446 777.6 L1446.6 788 L1447.2 788 L1447.8 836.7 L1448.4 910.5 L1448.9 910.5 L1449.5 910.5 L1450.1 910.5 L1450.7 910.5 L1451.3 910.5 L1451.9 910.5 L1452.5 910.5 L1453.1 910.5 L1453.7 910.5 L1454.3 910.5 L1454.8 910.5 L1455.4 910.5 L1456 910.5 L1456.6 910.5 L1457.2 910.5 L1457.8 910.5 L1458.4 910.5 L1459 910.5 L1459.6 910.5 L1460.2 910.5 L1460.7 910.5 L1461.3 910.5 L1461.9 910.5 L1462.5 910.5 L1463.1 910.5 L1463.7 910.5 L1464.3 910.5 L1464.9 910.5 L1465.5 910.5 L1466.1 910.5 L1466.6 910.5 L1467.2 910.5 L1467.8 910.5 L1468.4 910.5 L1469 910.5 L1469.6 910.5 L1470.2 910.5 L1470.8 910.5 L1471.4 910.5 L1472 910.5 L1472.5 910.5 L1473.1 910.5 L1473.7 910.5 L1474.3 910.5 L1474.9 910.5 L1475.5 910.5 L1476.1 910.5 L1476.7 910.5 L1477.3 910.5 L1477.9 910.5 L1478.4 910.5 L1479 910.5 L1479.6 910.5 L1480.2 910.5 L1480.8 910.5 L1481.4 910.5 L1482 910.5 L1482.6 910.5 L1483.2 910.5 L1483.8 910.5 L1484.3 910.5 L1484.9 910.5 L1485.5 910.5 L1486.1 910.5 L1486.7 910.5 L1487.3 910.5 L1487.9 910.5 L1488.5 910.5 L1489.1 910.5 L1489.7 910.5 L1490.2 910.5 L1490.8 910.5 L1491.4 910.5 L1492 910.5 L1492.6 910.5 L1493.2 910.5 L1493.8 910.5 L1494.4 910.5 L1495 910.5 L1495.6 910.5 L1496.1 910.5 L1496.7 910.5 L1497.3 910.5 L1497.9 910.5 L1498.5 910.5 L1499.1 910.5 L1499.7 910.5 L1500.3 910.5 L1500.9 910.5 L1501.5 910.5 L1502 910.5 L1502.6 910.5 L1503.2 910.5 L1503.8 910.5 L1504.4 910.5 L1505 910.5 L1505.6 910.5 L1506.2 910.5 L1506.8 910.5 L1507.4 910.5 L1507.9 910.5 L1508.5 910.5 L1509.1 910.5 L1509.7 910.5 L1510.3 910.5 L1510.9 910.5 L1511.5 910.5 L1512.1 910.5 L1512.7 910.5 L1513.3 910.5 L1513.8 910.5 L1514.4 910.5 L1515 910.5 L1515.6 910.5 L1516.2 910.5 L1516.8 910.5 L1517.4 910.5 L1518 910.5 L1518.6 910.5 L1519.2 910.5 L1519.7 910.5 L1520.3 910.5 L1520.9 910.5 L1521.5 910.5 L1522.1 721 L1522.7 650.2 L1523.3 650.5 L1523.9 651.7 L1524.5 644.2 L1525.1 613 L1525.6 686 L1526.2 665.7 L1526.8 656.2 L1527.4 642 L1528 649 L1528.6 639.9 L1529.2 641.8 L1529.8 650.5 L1530.4 644.2 L1531 654.2 L1531.5 651.9 L1532.1 644 L1532.7 663.3 L1533.3 657.7 L1533.9 657.5 L1534.5 658.4 L1535.1 656.5 L1535.7 663.8 L1536.3 641 L1536.9 642.4 L1537.4 661.1 L1538 662.2 L1538.6 629 L1539.2 647.3 L1539.8 661.4 L1540.4 648.1 L1541 660.9 L1541.6 708.9 L1542.2 698.5 L1542.8 708.6 L1543.3 779.5 L1543.9 674.1 L1544.5 693.9 L1545.1 742.7 L1545.7 700.3 L1546.3 733.7 L1546.9 774.2 L1547.5 716.2 L1548.1 682.9 L1548.7 686.1 L1549.2 686.6 L1549.8 680.4 L1550.4 674.5 L1551 713.3 L1551.6 900.1 L1552.2 910.5 L1552.8 910.5 L1553.4 910.5 L1554 910.5 L1554.6 910.5 L1555.1 910.5 L1555.7 910.5 L1556.3 877.2 L1556.9 792.8 L1557.5 792.7 L1558.1 812.2 L1558.7 910.4 L1559.3 910.2 L1559.9 910.5 L1560.5 910.5 L1561 910.5 L1561.6 910.5 L1562.2 910.5 L1562.8 910.5 L1563.4 910.5 L1564 910.5 L1564.6 910.5 L1565.2 910.5 L1565.8 910.5 L1566.4 910.5 L1566.9 910.5 L1567.5 910.5 L1568.1 910.5 L1568.7 910.5 L1569.3 910.5 L1569.9 910.5 L1570.5 910.5 L1571.1 910.5 L1571.7 910.5 L1572.3 910.5 L1572.8 910.5 L1573.4 910.5 L1574 910.5 L1574.6 910.5 L1575.2 910.5 L1575.8 910.5 L1576.4 910.5 L1577 910.5 L1577.6 910.5 L1578.2 910.5 L1578.7 910.5 L1579.3 910.5 L1579.9 910.5 L1580.5 910.5 L1581.1 910.4 L1581.7 910.4 L1582.3 910.4 L1582.9 910.4 L1583.5 910.4 L1584.1 910.4 L1584.6 910.4 L1585.2 910.4 L1585.8 910.4 L1586.4 910.4 L1587 910.4 L1587.6 910.4 L1588.2 910.4 L1588.8 910.4 L1589.4 910.4 L1590 910.4 L1590.5 910.4 L1591.1 910.4 L1591.7 910.4 L1592.3 910.4 L1592.9 910.4 L1593.5 910.4 L1594.1 910.4 L1594.7 910.4 L1595.3 910.4 L1595.9 910.4 L1596.4 910.4 L1597 910.4 L1597.6 910.4 L1598.2 910.4 L1598.8 910.4 L1599.4 910.4 L1600 910.4 L1600.6 910.4 L1601.2 910.4 L1601.8 910.4 L1602.3 910.4 L1602.9 910.4 L1603.5 910.4 L1604.1 910.4 L1604.7 910.4 L1605.3 910.4 L1605.9 910.4 L1606.5 910.4 L1607.1 910.4 L1607.7 910.4 L1608.2 910.4 L1608.8 910.4 L1609.4 910.4 L1610 910.4 L1610.6 910.4 L1611.2 910.4 L1611.8 910.4 L1612.4 910.4 L1613 910.4 L1613.6 910.4 L1614.1 910.4 L1614.7 910.4 L1615.3 910.4 L1615.9 910.4 L1616.5 910.4 L1617.1 910.4 L1617.7 910.4 L1618.3 910.4 L1618.9 910.4 L1619.5 910.4 L1620 910.4 L1620.6 910.4 L1621.2 910.4 L1621.8 910.4 L1622.4 910.4 L1623 910.4 L1623.6 910.3 L1624.2 910.3 L1624.8 910.3 L1625.4 910.3 L1625.9 910.3 L1626.5 910.3 L1627.1 910.3 L1627.7 910.3 L1628.3 910.3 L1628.9 910.3 L1629.5 910.3 L1630.1 910.3 L1630.7 910.3 L1631.3 910.3 L1631.8 910.3 L1632.4 910.3 L1633 910.3 L1633.6 910.3 L1634.2 910.3 L1634.8 910.3 L1635.4 910.3 L1636 910.3 L1636.6 910.3 L1637.2 910.3 L1637.7 910.3 L1638.3 910.3 L1638.9 910.3 L1639.5 910.3 L1640.1 910.3 L1640.7 910.3 L1641.3 910.3 L1641.9 910.3 L1642.5 910.3 L1643.1 910.3 L1643.6 910.3 L1644.2 910.3 L1644.8 910.3 L1645.4 910.3 L1646 910.3 L1646.6 910.3 L1647.2 910.3 L1647.8 910.3 L1648.4 910.3 L1649 910.3 L1649.5 910.3 L1650.1 910.3 L1650.7 910.3 L1651.3 910.3 L1651.9 910.3 L1652.5 910.3 L1653.1 910.3 L1653.7 910.3 L1654.3 910.3 L1654.9 910.3 L1655.4 910.3 L1656 910.3 L1656.6 910.3 L1657.2 910.3 L1657.8 910.3 L1658.4 910.3 L1659 910.3 L1659.6 910.3 L1660.2 910.3 L1660.8 910.3 L1661.3 910.3 L1661.9 910.3 L1662.5 910.3 L1663.1 910.3 L1663.7 910.3 L1664.3 910.3 L1664.9 910.3 L1665.5 910.2 L1666.1 910.2 L1666.7 910.2 L1667.2 910.2 L1667.8 910.2 L1668.4 910.2 L1669 910.2 L1669.6 910.2 L1670.2 910.2 L1670.8 910.2 L1671.4 910.2 L1672 910.2 L1672.6 910.2 L1673.1 910.2 L1673.7 910.2 L1674.3 910.2 L1674.9 910.2 L1675.5 910.2 L1676.1 910.2 L1676.7 910.2 L1677.3 910.2 L1677.9 910.2 L1678.5 910.2 L1679 910.2 L1679.6 910.2 L1680.2 910.2 L1680.8 910.2 L1681.4 910.2 L1682 910.2 L1682.6 910.2 L1683.2 910.2 L1683.8 910.2 L1684.4 910.2 L1684.9 910.2 L1685.5 910.2 L1686.1 910.2 L1686.7 910.2 L1687.3 910.2 L1687.9 910.2 L1688.5 910.2 L1689.1 910.2 L1689.7 910.2 L1690.3 910.2 L1690.8 910.2 L1691.4 910.2 L1692 910.2 L1692.6 910.2 L1693.2 910.2 L1693.8 910.2 L1694.4 910.2 L1695 910.2 L1695.6 910.2 L1696.2 910.2 L1696.7 910.2 L1697.3 910.2 L1697.9 910.2 L1698.5 910.2 L1699.1 910.2 L1699.7 910.2 L1700.3 910.2 L1700.9 910.2 L1701.5 910.2 L1702.1 910.2 L1702.6 910.2 L1703.2 910.2 L1703.8 910.2 L1704.4 910.2 L1705 910.2 L1705.6 910.2 L1706.2 910.2 L1706.8 910.2 L1707.4 910.2 L1708 910.1 L1708.5 910.1 L1709.1 910.1 L1709.7 910.1 L1710.3 910.1 L1710.9 910.1 L1711.5 910.1 L1712.1 910.1 L1712.7 910.1 L1713.3 910.1 L1713.9 910.1 L1714.4 910.1 L1715 910.1 L1715.6 910.1 L1716.2 910.1 L1716.8 910.1 L1717.4 910.1 L1718 910.1 L1718.6 910 L1719.2 909.9 L1719.8 909.8 L1720.3 909.8 L1720.9 909.7 L1721.5 909.6 L1722.1 909.5 L1722.7 909.4 L1723.3 909.3 L1723.9 909.2 L1724.5 909.2 L1725.1 909.1 L1725.7 909 L1726.2 908.9 L1726.8 897.6 L1727.4 908.7 L1728 908.7 L1728.6 909 L1729.2 908.9 L1729.8 908.8 L1730.4 908.8 L1731 901 L1731.6 908.8 L1732.1 908.5 L1732.7 908.3 L1733.3 907.9 L1733.9 905.8 L1734.5 905.9 L1735.1 900.7 L1735.7 906.6 L1736.3 899.3 L1736.9 902.1 L1737.5 903.8 L1738 906.7 L1738.6 902 L1739.2 900.3 L1739.8 904.7 L1740.4 901.3 L1741 903.1 L1741.6 906.6 L1742.2 899.7 L1742.8 905.1 L1743.4 903.6 L1743.9 900.8 L1744.5 899.5 L1745.1 899.6 L1745.7 903.1 L1746.3 896.6 L1746.9 903.9 L1747.5 900.1 L1748.1 901.4 L1748.7 896.3 L1749.3 898.1 L1749.8 898.9 L1750.4 897 L1751 902.2 L1751.6 901.2 L1752.2 904.3 L1752.8 902.2 L1753.4 903.5 L1754 898 L1754.6 904.1 L1755.2 895.7 L1755.7 899.5 L1756.3 901.2 L1756.9 904.2 L1757.5 901.2 L1758.1 899.9 L1758.7 904 L1759.3 894.9 L1759.9 902.1 L1760.5 901.3 L1761.1 902.8 L1761.6 902 L1762.2 902.9 L1762.8 896.5 L1763.4 904.5 L1764 902 L1764.6 899.6 L1765.2 900.9 L1765.8 902.4 L1766.4 900.8 L1767 904.5 L1767.5 902.6 L1768.1 901 L1768.7 896.7 L1769.3 893.2 L1769.9 880.6 L1770.5 836.7 L1771.1 855.2 L1771.7 794.1 L1772.3 732.3 L1772.9 702.8 L1773.4 717.1 L1774 726.5 L1774.6 723.3 L1775.2 736.2 L1775.8 726 L1776.4 796.5 L1777 740.7 L1777.6 794.5 L1778.2 805.3 L1778.8 807.3 L1779.3 780.8 L1779.9 819 L1780.5 837.5 L1781.1 788.8 L1781.7 735.7 L1782.3 739 L1782.9 746.1 L1783.5 747.6 L1784.1 789.2 L1784.7 857.4 L1785.2 888 L1785.8 898.9 L1786.4 904.6 L1787 901.4 L1787.6 904.3 L1788.2 897.9 L1788.8 900.8 L1789.4 900 L1790 896.7 L1790.6 904.2 L1791.1 903.5 L1791.7 898.2 L1792.3 900.1 L1792.9 901.7 L1793.5 902.4 L1794.1 900 L1794.7 896.5 L1795.3 896.4 L1795.9 896.8 L1796.5 896.1 L1797 904.1 L1797.6 890.8 L1798.2 897.7 L1798.8 903.3 L1799.4 900.9 L1800 901.4 L1800.6 896.1 L1801.2 901.7 L1801.8 894.2 L1802.4 903.6 L1802.9 896.9 L1803.5 897.9 L1804.1 904.1 L1804.7 896.2 L1805.3 902.3 L1805.9 898.8 L1806.5 900.5 L1807.1 897.4 L1807.7 901.2 L1808.3 904.7 L1808.8 900.6 L1809.4 897.5 L1810 901.9 L1810.6 885.7 L1811.2 901.6 L1811.8 902.4 L1812.4 902.4 L1813 903.4 L1813.6 901.1 L1814.2 896.3 L1814.7 900.2 L1815.3 898.4 L1815.9 903.8 L1816.5 902.3 L1817.1 900.3 L1817.7 902.2 L1818.3 904.7 L1818.9 897.3 L1819.5 904.1 L1820.1 899.6 L1820.6 896 L1821.2 903 L1821.8 903.1 L1822.4 902.6 L1823 900.7 L1823.6 896.1 L1824.2 904 L1824.8 903.3 L1825.4 897 L1826 903.1 L1826.5 899.5 L1827.1 898.9 L1827.7 904.7 L1828.3 904.7 L1828.9 898.5 L1829.5 896.8 L1830.1 899.2 L1830.7 901.4 L1831.3 904.3 L1831.9 900.9 L1832.4 904.2 L1833 902.7 L1833.6 904.6 L1834.2 898.9 L1834.8 898.3 L1835.4 900.3 L1836 900.9 L1836.6 902.2 L1837.2 902.5 L1837.8 901.8 L1838.3 891.3 L1838.9 902.4 L1839.5 895.1 L1840.1 898.4 L1840.7 896.8 L1841.3 900.1 L1841.9 891.4 L1842.5 893.9 L1843.1 899 L1843.7 898.7 L1844.2 892.3 L1844.8 901.5 L1845.4 892.9 L1846 896.4 L1846.6 897.1 L1847.2 897.5 L1847.8 896.4 L1848.4 901.3 L1849 899.2 L1849.6 897.9 L1850.1 899.6 L1850.7 900.9 L1851.3 892.7 L1851.9 897.1 L1852.5 892.4 L1853.1 897.5 L1853.7 889.2 L1854.3 899.4 L1854.9 896 L1855.5 897.2 L1856 891.9 L1856.6 900.6 L1857.2 895.7 L1857.8 896.9 L1858.4 894.6 L1859 899.6 L1859.6 895.8 L1860.2 889.4 L1860.8 900.8 L1861.4 889.7 L1861.9 889.9 L1862.5 897.2 L1863.1 901 L1863.7 896.7 L1864.3 890.3 L1864.9 901.4 L1865.5 893.5 L1866.1 893.4 L1866.7 895.9 L1867.3 858.4 L1867.8 837.8 L1868.4 835.4 L1869 831.8 L1869.6 822 L1870.2 809.1 L1870.8 806.7 L1871.4 849 L1872 894.6 L1872.6 903.8 L1873.2 897.1 L1873.7 902.8 L1874.3 895.9 L1874.9 899.5 L1875.5 901.1 L1876.1 903.4 L1876.7 896.4 L1877.3 896.4 L1877.9 895.1 L1878.5 899.7 L1879.1 895.6 L1879.6 896 L1880.2 898.8 L1880.8 902.3 L1881.4 899.5 L1882 902.3 L1882.6 897 L1883.2 900.1 L1883.8 896.3 L1884.4 896 L1885 897.7 L1885.5 903.5 L1886.1 902.3 L1886.7 904.4 L1887.3 902.3 L1887.9 903.9 L1888.5 902.7 L1889.1 897.2 L1889.7 904.1 L1890.3 895.7 L1890.9 895.6 L1891.4 897.5 L1892 893 L1892.6 902.7 L1893.2 901.1 L1893.8 899.3 L1894.4 895.6 L1895 904.7 L1895 912.5 L1047.8 912.5 Z" fill="#9e3b39" fill-opacity="0.2" stroke="none"/>
<path d="M1047.8 903 L1048.3 903.2 L1048.9 903.6 L1049.5 902.1 L1050.1 904.6 L1050.7 902.9 L1051.3 901.9 L1051.9 903.5 L1052.5 902.3 L1053.1 904.6 L1053.6 903.4 L1054.2 904.1 L1054.8 902.8 L1055.4 903.5 L1056 901.9 L1056.6 903.1 L1057.2 903.7 L1057.8 905.5 L1058.4 900.6 L1059 891.2 L1059.5 902.4 L1060.1 903.7 L1060.7 903.9 L1061.3 903.8 L1061.9 902.4 L1062.5 904 L1063.1 900.5 L1063.7 903.8 L1064.3 904.1 L1064.9 902.1 L1065.4 905.2 L1066 895 L1066.6 904.2 L1067.2 902.8 L1067.8 903.1 L1068.4 903.4 L1069 905.3 L1069.6 904.2 L1070.2 900.7 L1070.8 901.7 L1071.3 899.1 L1071.9 887.5 L1072.5 897.9 L1073.1 895.4 L1073.7 899.9 L1074.3 900.1 L1074.9 901.8 L1075.5 900.2 L1076.1 902.3 L1076.7 903 L1077.2 901.3 L1077.8 903.5 L1078.4 901.4 L1079 901.1 L1079.6 903.2 L1080.2 903.7 L1080.8 903.1 L1081.4 903.2 L1082 899.1 L1082.6 899.5 L1083.1 903.7 L1083.7 903.2 L1084.3 889.5 L1084.9 882.7 L1085.5 887.3 L1086.1 890.1 L1086.7 890.2 L1087.3 895.2 L1087.9 895.2 L1088.5 895.9 L1089 895.1 L1089.6 895.4 L1090.2 897.7 L1090.8 897.7 L1091.4 897.4 L1092 894.7 L1092.6 896.5 L1093.2 894.4 L1093.8 896.4 L1094.4 898.4 L1094.9 897.1 L1095.5 895.7 L1096.1 897.6 L1096.7 900.9 L1097.3 902.5 L1097.9 904.6 L1098.5 902.9 L1099.1 903.5 L1099.7 905.3 L1100.3 903.2 L1100.8 902.3 L1101.4 904.2 L1102 903.8 L1102.6 904.6 L1103.2 905.1 L1103.8 906.1 L1104.4 903.1 L1105 905.3 L1105.6 904 L1106.2 900 L1106.7 902.5 L1107.3 902.7 L1107.9 900.8 L1108.5 904.5 L1109.1 906.2 L1109.7 906.5 L1110.3 906.7 L1110.9 907.6 L1111.5 908.2 L1112.1 905.7 L1112.6 905 L1113.2 896.2 L1113.8 903.8 L1114.4 904.3 L1115 903.9 L1115.6 903.4 L1116.2 904.2 L1116.8 903.9 L1117.4 904.7 L1118 902.5 L1118.5 898 L1119.1 896.8 L1119.7 893.1 L1120.3 897.5 L1120.9 901.1 L1121.5 900.9 L1122.1 900.8 L1122.7 905 L1123.3 903.9 L1123.9 904.1 L1124.4 902.4 L1125 904.1 L1125.6 901.9 L1126.2 901.4 L1126.8 905.4 L1127.4 903.6 L1128 903.3 L1128.6 902.7 L1129.2 904 L1129.8 906.9 L1130.3 904.7 L1130.9 903.3 L1131.5 904.7 L1132.1 906.5 L1132.7 905.1 L1133.3 904.4 L1133.9 903.3 L1134.5 902.9 L1135.1 901.9 L1135.7 900.5 L1136.2 899.9 L1136.8 901 L1137.4 899.7 L1138 903 L1138.6 901.2 L1139.2 903.8 L1139.8 894 L1140.4 902.1 L1141 901.6 L1141.6 902.2 L1142.1 902.1 L1142.7 903.1 L1143.3 901.9 L1143.9 899.5 L1144.5 899.7 L1145.1 900.7 L1145.7 903.9 L1146.3 900.9 L1146.9 899.6 L1147.5 896.4 L1148 900.1 L1148.6 896.9 L1149.2 897 L1149.8 895.6 L1150.4 900.8 L1151 903 L1151.6 901.3 L1152.2 904 L1152.8 900.7 L1153.4 902 L1153.9 901.6 L1154.5 902.5 L1155.1 899.8 L1155.7 888.1 L1156.3 903.3 L1156.9 904 L1157.5 902.6 L1158.1 901.8 L1158.7 904 L1159.3 901.1 L1159.8 904 L1160.4 902.9 L1161 903.7 L1161.6 901.7 L1162.2 901.1 L1162.8 903.1 L1163.4 905 L1164 899.8 L1164.6 904.1 L1165.2 902.4 L1165.7 898.1 L1166.3 896.6 L1166.9 897.1 L1167.5 899 L1168.1 898 L1168.7 898.9 L1169.3 896.7 L1169.9 899.2 L1170.5 898.2 L1171.1 898.4 L1171.6 899.5 L1172.2 898.2 L1172.8 899.6 L1173.4 899.8 L1174 899.9 L1174.6 898.5 L1175.2 898.4 L1175.8 899.7 L1176.4 900.9 L1177 901.8 L1177.5 901.6 L1178.1 899.1 L1178.7 900.2 L1179.3 899.2 L1179.9 902 L1180.5 901.2 L1181.1 900.5 L1181.7 899.8 L1182.3 899.4 L1182.9 899.3 L1183.4 900 L1184 899.7 L1184.6 898.9 L1185.2 899.4 L1185.8 899.5 L1186.4 898.7 L1187 900 L1187.6 899 L1188.2 901.7 L1188.8 898.8 L1189.3 899.1 L1189.9 899.2 L1190.5 900.1 L1191.1 904.2 L1191.7 903.1 L1192.3 903.5 L1192.9 903.3 L1193.5 901.5 L1194.1 900.5 L1194.7 904.3 L1195.2 902.7 L1195.8 898.6 L1196.4 900.6 L1197 903 L1197.6 903.7 L1198.2 899.9 L1198.8 899.5 L1199.4 902.7 L1200 902.6 L1200.6 900.7 L1201.1 902 L1201.7 902.2 L1202.3 898.6 L1202.9 899.3 L1203.5 899.6 L1204.1 896.1 L1204.7 901.1 L1205.3 897.9 L1205.9 900.5 L1206.5 897.2 L1207 897.7 L1207.6 899.4 L1208.2 894.7 L1208.8 897.6 L1209.4 901 L1210 901.7 L1210.6 900.7 L1211.2 902.2 L1211.8 902.2 L1212.4 902.8 L1212.9 885.2 L1213.5 898 L1214.1 905 L1214.7 901.1 L1215.3 899.7 L1215.9 902.4 L1216.5 904.9 L1217.1 900.9 L1217.7 904.3 L1218.3 900.7 L1218.8 901.4 L1219.4 897.9 L1220 899.6 L1220.6 899.2 L1221.2 900.7 L1221.8 899 L1222.4 898.8 L1223 895.8 L1223.6 900.7 L1224.2 900.8 L1224.7 898.1 L1225.3 895.9 L1225.9 899.1 L1226.5 898.4 L1227.1 901.1 L1227.7 903.6 L1228.3 902.4 L1228.9 904.5 L1229.5 900.2 L1230.1 901.8 L1230.6 900 L1231.2 901.1 L1231.8 904.3 L1232.4 905.3 L1233 906.7 L1233.6 905.6 L1234.2 908.2 L1234.8 909.5 L1235.4 910.6 L1236 910.5 L1236.5 909.8 L1237.1 910.3 L1237.7 910 L1238.3 909.8 L1238.9 909.9 L1239.5 909.8 L1240.1 910.4 L1240.7 910.7 L1241.3 910.8 L1241.9 910.1 L1242.4 909.5 L1243 911 L1243.6 911.1 L1244.2 910.2 L1244.8 910.1 L1245.4 910.7 L1246 910.6 L1246.6 910.5 L1247.2 910.7 L1247.8 910.5 L1248.3 910.2 L1248.9 909.6 L1249.5 911 L1250.1 911.1 L1250.7 909.9 L1251.3 909.9 L1251.9 910.4 L1252.5 909.5 L1253.1 909.8 L1253.7 910.4 L1254.2 910.9 L1254.8 909.5 L1255.4 910.9 L1256 910.5 L1256.6 910.6 L1257.2 910.6 L1257.8 910.3 L1258.4 910.7 L1259 910.3 L1259.6 909.9 L1260.1 910.3 L1260.7 909.8 L1261.3 909.5 L1261.9 909.6 L1262.5 910.1 L1263.1 911 L1263.7 909.5 L1264.3 909.4 L1264.9 910.4 L1265.5 909.9 L1266 910 L1266.6 910.5 L1267.2 909.4 L1267.8 909.9 L1268.4 910.2 L1269 910.9 L1269.6 910.5 L1270.2 911 L1270.8 911 L1271.4 699 L1271.9 911 L1272.5 911 L1273.1 911 L1273.7 911 L1274.3 911 L1274.9 911 L1275.5 911 L1276.1 911 L1276.7 911 L1277.3 703.4 L1277.8 632 L1278.4 635.2 L1279 638.4 L1279.6 635.2 L1280.2 635.1 L1280.8 633.5 L1281.4 628 L1282 638 L1282.6 835.8 L1283.2 911 L1283.7 911 L1284.3 911 L1284.9 911 L1285.5 911 L1286.1 911 L1286.7 821.5 L1287.3 780.3 L1287.9 777.7 L1288.5 770 L1289.1 782.1 L1289.6 783.1 L1290.2 787.4 L1290.8 788.9 L1291.4 761 L1292 779 L1292.6 773.7 L1293.2 813 L1293.8 910 L1294.4 910 L1295 905.7 L1295.5 888.9 L1296.1 883.6 L1296.7 883.1 L1297.3 882.6 L1297.9 882 L1298.5 881.5 L1299.1 878.4 L1299.7 846.9 L1300.3 841.1 L1300.9 828.7 L1301.4 808.2 L1302 817.4 L1302.6 817.8 L1303.2 826.4 L1303.8 798.2 L1304.4 782.3 L1305 795.2 L1305.6 746.6 L1306.2 810.8 L1306.8 687.1 L1307.3 669.8 L1307.9 665.8 L1308.5 665.3 L1309.1 650.2 L1309.7 681.8 L1310.3 669 L1310.9 677.7 L1311.5 655 L1312.1 667.4 L1312.7 674.3 L1313.2 677.4 L1313.8 646.4 L1314.4 660.4 L1315 672 L1315.6 678.3 L1316.2 681.4 L1316.8 686.4 L1317.4 682.1 L1318 681.5 L1318.6 690.8 L1319.1 686.6 L1319.7 687.3 L1320.3 697.1 L1320.9 698.7 L1321.5 693.5 L1322.1 701.4 L1322.7 694.5 L1323.3 703.3 L1323.9 699.4 L1324.5 724.7 L1325 714.3 L1325.6 710.8 L1326.2 706.4 L1326.8 704.8 L1327.4 712.7 L1328 708.8 L1328.6 710.2 L1329.2 706.4 L1329.8 710.2 L1330.4 714.3 L1330.9 714.8 L1331.5 720.1 L1332.1 711.5 L1332.7 711.5 L1333.3 719.3 L1333.9 711.7 L1334.5 713.5 L1335.1 717.6 L1335.7 716 L1336.3 718.6 L1336.8 733.1 L1337.4 804.3 L1338 803 L1338.6 808.6 L1339.2 803.8 L1339.8 807.1 L1340.4 808.4 L1341 807 L1341.6 802.3 L1342.2 803.3 L1342.7 807.6 L1343.3 807.4 L1343.9 786.9 L1344.5 645.1 L1345.1 645.2 L1345.7 645.3 L1346.3 645.4 L1346.9 645.5 L1347.5 645.6 L1348.1 671.6 L1348.6 712.9 L1349.2 754.2 L1349.8 795.4 L1350.4 804.5 L1351 804.7 L1351.6 804.6 L1352.2 805.6 L1352.8 758.8 L1353.4 708.4 L1354 675.2 L1354.5 677.4 L1355.1 679.6 L1355.7 681.8 L1356.3 686.5 L1356.9 694 L1357.5 701.5 L1358.1 709 L1358.7 739.2 L1359.3 784.4 L1359.9 804.9 L1360.4 804.8 L1361 805 L1361.6 804.6 L1362.2 804 L1362.8 805.3 L1363.4 804.9 L1364 804 L1364.6 801.5 L1365.2 803.8 L1365.8 803 L1366.3 809 L1366.9 811.9 L1367.5 815.1 L1368.1 818.7 L1368.7 823.2 L1369.3 821.3 L1369.9 814.8 L1370.5 808.3 L1371.1 801.9 L1371.7 792.4 L1372.2 781.7 L1372.8 771 L1373.4 783.3 L1374 809.5 L1374.6 820.8 L1375.2 820.4 L1375.8 820 L1376.4 805.4 L1377 801.5 L1377.6 802.3 L1378.1 763.8 L1378.7 635.3 L1379.3 627.5 L1379.9 620 L1380.5 627.3 L1381.1 634.3 L1381.7 641.3 L1382.3 648.4 L1382.9 728 L1383.5 805 L1384 804.6 L1384.6 804.2 L1385.2 803.8 L1385.8 803.4 L1386.4 803 L1387 910 L1387.6 910 L1388.2 910 L1388.8 693 L1389.4 702 L1389.9 712.2 L1390.5 714.9 L1391.1 716.2 L1391.7 713.5 L1392.3 715.6 L1392.9 711.9 L1393.5 714.6 L1394.1 717.6 L1394.7 727.3 L1395.3 732.5 L1395.8 743.7 L1396.4 748.1 L1397 758.8 L1397.6 760.8 L1398.2 760.1 L1398.8 782.4 L1399.4 803.7 L1400 858.1 L1400.6 887.3 L1401.2 909.5 L1401.7 910 L1402.3 910 L1402.9 910 L1403.5 910 L1404.1 910 L1404.7 910 L1405.3 910 L1405.9 910 L1406.5 910 L1407.1 910.1 L1407.6 902.4 L1408.2 823.1 L1408.8 803.7 L1409.4 797.8 L1410 796.6 L1410.6 784.6 L1411.2 789.9 L1411.8 810.1 L1412.4 786.6 L1413 800.5 L1413.5 798.1 L1414.1 791.3 L1414.7 809.4 L1415.3 807.6 L1415.9 802.2 L1416.5 805.5 L1417.1 809.6 L1417.7 801.6 L1418.3 802.7 L1418.9 800.8 L1419.4 802.1 L1420 801.3 L1420.6 800.8 L1421.2 799.6 L1421.8 790.4 L1422.4 802.9 L1423 791.3 L1423.6 792 L1424.2 786.9 L1424.8 794.1 L1425.3 796.4 L1425.9 789.7 L1426.5 800.6 L1427.1 804 L1427.7 793.5 L1428.3 799.6 L1428.9 803.2 L1429.5 802.4 L1430.1 800.4 L1430.7 791.8 L1431.2 798.9 L1431.8 794.6 L1432.4 799.4 L1433 794.2 L1433.6 801 L1434.2 796.3 L1434.8 789 L1435.4 796.1 L1436 801 L1436.6 792.3 L1437.1 800.2 L1437.7 796.5 L1438.3 792.6 L1438.9 788.6 L1439.5 785.8 L1440.1 802.6 L1440.7 796 L1441.3 799.3 L1441.9 773.7 L1442.5 777.6 L1443 786.6 L1443.6 776.4 L1444.2 757.8 L1444.8 779.4 L1445.4 771.3 L1446 781.1 L1446.6 788 L1447.2 788 L1447.8 836.7 L1448.4 910.5 L1448.9 910.5 L1449.5 910.5 L1450.1 910.5 L1450.7 910.5 L1451.3 910.5 L1451.9 910.5 L1452.5 910.5 L1453.1 910.5 L1453.7 910.5 L1454.3 910.5 L1454.8 910.5 L1455.4 910.5 L1456 910.5 L1456.6 910.5 L1457.2 910.5 L1457.8 910.5 L1458.4 910.5 L1459 910.5 L1459.6 910.5 L1460.2 910.5 L1460.7 910.5 L1461.3 910.5 L1461.9 910.5 L1462.5 910.5 L1463.1 910.5 L1463.7 910.5 L1464.3 910.5 L1464.9 910.5 L1465.5 910.5 L1466.1 910.5 L1466.6 910.5 L1467.2 910.5 L1467.8 910.5 L1468.4 910.5 L1469 910.5 L1469.6 910.5 L1470.2 910.5 L1470.8 910.5 L1471.4 910.5 L1472 910.5 L1472.5 910.5 L1473.1 910.5 L1473.7 910.5 L1474.3 910.5 L1474.9 910.5 L1475.5 910.5 L1476.1 910.5 L1476.7 910.5 L1477.3 910.5 L1477.9 910.5 L1478.4 910.5 L1479 910.5 L1479.6 910.5 L1480.2 910.5 L1480.8 910.5 L1481.4 910.5 L1482 910.5 L1482.6 910.5 L1483.2 910.5 L1483.8 910.5 L1484.3 910.5 L1484.9 910.5 L1485.5 910.5 L1486.1 910.5 L1486.7 910.5 L1487.3 910.5 L1487.9 910.5 L1488.5 910.5 L1489.1 910.5 L1489.7 910.5 L1490.2 910.5 L1490.8 910.5 L1491.4 910.5 L1492 910.5 L1492.6 910.5 L1493.2 910.5 L1493.8 910.5 L1494.4 910.5 L1495 910.5 L1495.6 910.5 L1496.1 910.5 L1496.7 910.5 L1497.3 910.5 L1497.9 910.5 L1498.5 910.5 L1499.1 910.5 L1499.7 910.5 L1500.3 910.5 L1500.9 910.5 L1501.5 910.5 L1502 910.5 L1502.6 910.5 L1503.2 910.5 L1503.8 910.5 L1504.4 910.5 L1505 910.5 L1505.6 910.5 L1506.2 910.5 L1506.8 910.5 L1507.4 910.5 L1507.9 910.5 L1508.5 910.5 L1509.1 910.5 L1509.7 910.5 L1510.3 910.5 L1510.9 910.5 L1511.5 910.5 L1512.1 910.5 L1512.7 910.5 L1513.3 910.5 L1513.8 910.5 L1514.4 910.5 L1515 910.5 L1515.6 910.5 L1516.2 910.5 L1516.8 910.5 L1517.4 910.5 L1518 910.5 L1518.6 910.5 L1519.2 910.5 L1519.7 910.5 L1520.3 910.5 L1520.9 910.5 L1521.5 910.5 L1522.1 721 L1522.7 650.8 L1523.3 652.2 L1523.9 650 L1524.5 646 L1525.1 613 L1525.6 686 L1526.2 663.6 L1526.8 658.6 L1527.4 642 L1528 653.5 L1528.6 646 L1529.2 646.7 L1529.8 653.4 L1530.4 650.4 L1531 654.6 L1531.5 656.4 L1532.1 644 L1532.7 662.8 L1533.3 652.5 L1533.9 658.1 L1534.5 651.5 L1535.1 651.4 L1535.7 663.1 L1536.3 641 L1536.9 642 L1537.4 659.3 L1538 659.6 L1538.6 629 L1539.2 650.6 L1539.8 661.1 L1540.4 648.5 L1541 660.8 L1541.6 719.6 L1542.2 732.6 L1542.8 727.3 L1543.3 744.6 L1543.9 714.5 L1544.5 724.8 L1545.1 746.4 L1545.7 725.3 L1546.3 753.6 L1546.9 777 L1547.5 719.3 L1548.1 683.2 L1548.7 683.8 L1549.2 682.5 L1549.8 678 L1550.4 672.6 L1551 713.3 L1551.6 900.1 L1552.2 910.5 L1552.8 910.5 L1553.4 910.5 L1554 910.5 L1554.6 910.5 L1555.1 910.5 L1555.7 910.5 L1556.3 877.2 L1556.9 792.8 L1557.5 792.7 L1558.1 812.2 L1558.7 910.4 L1559.3 910.2 L1559.9 910.5 L1560.5 910.5 L1561 910.5 L1561.6 910.5 L1562.2 910.5 L1562.8 910.5 L1563.4 910.5 L1564 910.5 L1564.6 910.5 L1565.2 910.5 L1565.8 910.5 L1566.4 910.5 L1566.9 910.5 L1567.5 910.5 L1568.1 910.5 L1568.7 910.5 L1569.3 910.5 L1569.9 910.5 L1570.5 910.5 L1571.1 910.5 L1571.7 910.5 L1572.3 910.5 L1572.8 910.5 L1573.4 910.5 L1574 910.5 L1574.6 910.5 L1575.2 910.5 L1575.8 910.5 L1576.4 910.5 L1577 910.5 L1577.6 910.5 L1578.2 910.5 L1578.7 910.5 L1579.3 910.5 L1579.9 910.5 L1580.5 910.5 L1581.1 910.4 L1581.7 910.4 L1582.3 910.4 L1582.9 910.4 L1583.5 910.4 L1584.1 910.4 L1584.6 910.4 L1585.2 910.4 L1585.8 910.4 L1586.4 910.4 L1587 910.4 L1587.6 910.4 L1588.2 910.4 L1588.8 910.4 L1589.4 910.4 L1590 910.4 L1590.5 910.4 L1591.1 910.4 L1591.7 910.4 L1592.3 910.4 L1592.9 910.4 L1593.5 910.4 L1594.1 910.4 L1594.7 910.4 L1595.3 910.4 L1595.9 910.4 L1596.4 910.4 L1597 910.4 L1597.6 910.4 L1598.2 910.4 L1598.8 910.4 L1599.4 910.4 L1600 910.4 L1600.6 910.4 L1601.2 910.4 L1601.8 910.4 L1602.3 910.4 L1602.9 910.4 L1603.5 910.4 L1604.1 910.4 L1604.7 910.4 L1605.3 910.4 L1605.9 910.4 L1606.5 910.4 L1607.1 910.4 L1607.7 910.4 L1608.2 910.4 L1608.8 910.4 L1609.4 910.4 L1610 910.4 L1610.6 910.4 L1611.2 910.4 L1611.8 910.4 L1612.4 910.4 L1613 910.4 L1613.6 910.4 L1614.1 910.4 L1614.7 910.4 L1615.3 910.4 L1615.9 910.4 L1616.5 910.4 L1617.1 910.4 L1617.7 910.4 L1618.3 910.4 L1618.9 910.4 L1619.5 910.4 L1620 910.4 L1620.6 910.4 L1621.2 910.4 L1621.8 910.4 L1622.4 910.4 L1623 910.4 L1623.6 910.3 L1624.2 910.3 L1624.8 910.3 L1625.4 910.3 L1625.9 910.3 L1626.5 910.3 L1627.1 910.3 L1627.7 910.3 L1628.3 910.3 L1628.9 910.3 L1629.5 910.3 L1630.1 910.3 L1630.7 910.3 L1631.3 910.3 L1631.8 910.3 L1632.4 910.3 L1633 910.3 L1633.6 910.3 L1634.2 910.3 L1634.8 910.3 L1635.4 910.3 L1636 910.3 L1636.6 910.3 L1637.2 910.3 L1637.7 910.3 L1638.3 910.3 L1638.9 910.3 L1639.5 910.3 L1640.1 910.3 L1640.7 910.3 L1641.3 910.3 L1641.9 910.3 L1642.5 910.3 L1643.1 910.3 L1643.6 910.3 L1644.2 910.3 L1644.8 910.3 L1645.4 910.3 L1646 910.3 L1646.6 910.3 L1647.2 910.3 L1647.8 910.3 L1648.4 910.3 L1649 910.3 L1649.5 910.3 L1650.1 910.3 L1650.7 910.3 L1651.3 910.3 L1651.9 910.3 L1652.5 910.3 L1653.1 910.3 L1653.7 910.3 L1654.3 910.3 L1654.9 910.3 L1655.4 910.3 L1656 910.3 L1656.6 910.3 L1657.2 910.3 L1657.8 910.3 L1658.4 910.3 L1659 910.3 L1659.6 910.3 L1660.2 910.3 L1660.8 910.3 L1661.3 910.3 L1661.9 910.3 L1662.5 910.3 L1663.1 910.3 L1663.7 910.3 L1664.3 910.3 L1664.9 910.3 L1665.5 910.2 L1666.1 910.2 L1666.7 910.2 L1667.2 910.2 L1667.8 910.2 L1668.4 910.2 L1669 910.2 L1669.6 910.2 L1670.2 910.2 L1670.8 910.2 L1671.4 910.2 L1672 910.2 L1672.6 910.2 L1673.1 910.2 L1673.7 910.2 L1674.3 910.2 L1674.9 910.2 L1675.5 910.2 L1676.1 910.2 L1676.7 910.2 L1677.3 910.2 L1677.9 910.2 L1678.5 910.2 L1679 910.2 L1679.6 910.2 L1680.2 910.2 L1680.8 910.2 L1681.4 910.2 L1682 910.2 L1682.6 910.2 L1683.2 910.2 L1683.8 910.2 L1684.4 910.2 L1684.9 910.2 L1685.5 910.2 L1686.1 910.2 L1686.7 910.2 L1687.3 910.2 L1687.9 910.2 L1688.5 910.2 L1689.1 910.2 L1689.7 910.2 L1690.3 910.2 L1690.8 910.2 L1691.4 910.2 L1692 910.2 L1692.6 910.2 L1693.2 910.2 L1693.8 910.2 L1694.4 910.2 L1695 910.2 L1695.6 910.2 L1696.2 910.2 L1696.7 910.2 L1697.3 910.2 L1697.9 910.2 L1698.5 910.2 L1699.1 910.2 L1699.7 910.2 L1700.3 910.2 L1700.9 910.2 L1701.5 910.2 L1702.1 910.2 L1702.6 910.2 L1703.2 910.2 L1703.8 910.2 L1704.4 910.2 L1705 910.2 L1705.6 910.2 L1706.2 910.2 L1706.8 910.2 L1707.4 910.2 L1708 910.1 L1708.5 910.1 L1709.1 910.1 L1709.7 910.1 L1710.3 910.1 L1710.9 910.1 L1711.5 910.1 L1712.1 910.1 L1712.7 910.1 L1713.3 910.1 L1713.9 910.1 L1714.4 910.1 L1715 910.1 L1715.6 910.1 L1716.2 910.1 L1716.8 910.1 L1717.4 910.1 L1718 910.1 L1718.6 910 L1719.2 909.9 L1719.8 909.8 L1720.3 909.8 L1720.9 909.7 L1721.5 909.6 L1722.1 909.5 L1722.7 909.4 L1723.3 909.3 L1723.9 909.2 L1724.5 909.2 L1725.1 909.1 L1725.7 909 L1726.2 909 L1726.8 897.6 L1727.4 908.8 L1728 908.8 L1728.6 908.9 L1729.2 908.8 L1729.8 908.7 L1730.4 908.7 L1731 901 L1731.6 908.6 L1732.1 908.3 L1732.7 908.5 L1733.3 907.1 L1733.9 906.1 L1734.5 904.5 L1735.1 901.4 L1735.7 905.6 L1736.3 902.3 L1736.9 903.9 L1737.5 902.5 L1738 906.8 L1738.6 903.9 L1739.2 900.8 L1739.8 903.8 L1740.4 901.4 L1741 904.6 L1741.6 903.4 L1742.2 900.2 L1742.8 905.8 L1743.4 903.2 L1743.9 902.4 L1744.5 902 L1745.1 900.6 L1745.7 900.4 L1746.3 899.8 L1746.9 901.2 L1747.5 898.2 L1748.1 902.6 L1748.7 896.2 L1749.3 900.8 L1749.8 900.3 L1750.4 900.1 L1751 902.8 L1751.6 902.2 L1752.2 902.5 L1752.8 901.8 L1753.4 900.1 L1754 897.9 L1754.6 904.2 L1755.2 899.2 L1755.7 900.9 L1756.3 899.5 L1756.9 901.3 L1757.5 899.4 L1758.1 898.5 L1758.7 901.6 L1759.3 896.9 L1759.9 899.9 L1760.5 899.6 L1761.1 900.5 L1761.6 899.6 L1762.2 901.8 L1762.8 899.6 L1763.4 902.4 L1764 900.6 L1764.6 897.8 L1765.2 899.6 L1765.8 899.8 L1766.4 898.8 L1767 903.7 L1767.5 899.8 L1768.1 900.5 L1768.7 898.2 L1769.3 893.1 L1769.9 880.5 L1770.5 836.7 L1771.1 855.2 L1771.7 794.1 L1772.3 732.3 L1772.9 702.8 L1773.4 713.2 L1774 725.1 L1774.6 731.8 L1775.2 748.1 L1775.8 737.4 L1776.4 773.1 L1777 772.2 L1777.6 796.4 L1778.2 807.8 L1778.8 796 L1779.3 789.3 L1779.9 830.2 L1780.5 837.5 L1781.1 788.8 L1781.7 735.7 L1782.3 739 L1782.9 746.1 L1783.5 747.6 L1784.1 789.2 L1784.7 857.4 L1785.2 888.9 L1785.8 898.7 L1786.4 902.6 L1787 901.5 L1787.6 903.8 L1788.2 899.4 L1788.8 901.1 L1789.4 900.2 L1790 898.1 L1790.6 903.6 L1791.1 901.9 L1791.7 897.9 L1792.3 898.5 L1792.9 901 L1793.5 902.6 L1794.1 901.9 L1794.7 898.6 L1795.3 896.2 L1795.9 896.4 L1796.5 897.3 L1797 903.9 L1797.6 890.8 L1798.2 900.2 L1798.8 902.7 L1799.4 899.1 L1800 902.3 L1800.6 896.8 L1801.2 901.3 L1801.8 894.2 L1802.4 902.8 L1802.9 900 L1803.5 898.7 L1804.1 901.2 L1804.7 898.8 L1805.3 899.8 L1805.9 900.5 L1806.5 901.3 L1807.1 898.1 L1807.7 902.2 L1808.3 904.6 L1808.8 900.8 L1809.4 899 L1810 902.7 L1810.6 885.7 L1811.2 902.7 L1811.8 902.9 L1812.4 903 L1813 901.9 L1813.6 899.5 L1814.2 897.8 L1814.7 901.5 L1815.3 899.3 L1815.9 900.8 L1816.5 902.3 L1817.1 899.7 L1817.7 903.2 L1818.3 902.2 L1818.9 897.4 L1819.5 902.8 L1820.1 898.5 L1820.6 897.7 L1821.2 901.1 L1821.8 902.4 L1822.4 902.4 L1823 901.7 L1823.6 897.8 L1824.2 901.8 L1824.8 903.8 L1825.4 898 L1826 903.7 L1826.5 899.6 L1827.1 898.9 L1827.7 901.6 L1828.3 902.6 L1828.9 899 L1829.5 897.8 L1830.1 899.3 L1830.7 900.5 L1831.3 902.3 L1831.9 899.5 L1832.4 903.5 L1833 900.2 L1833.6 904.3 L1834.2 900.6 L1834.8 899.9 L1835.4 899.1 L1836 897.8 L1836.6 902.1 L1837.2 898.6 L1837.8 900.2 L1838.3 893.1 L1838.9 902 L1839.5 893.5 L1840.1 898.4 L1840.7 898.4 L1841.3 898.6 L1841.9 895.8 L1842.5 894.7 L1843.1 896.8 L1843.7 899.9 L1844.2 895.6 L1844.8 901.1 L1845.4 896.2 L1846 896.4 L1846.6 895.7 L1847.2 897.9 L1847.8 895.8 L1848.4 896.8 L1849 895.8 L1849.6 897.8 L1850.1 895.6 L1850.7 900.5 L1851.3 892 L1851.9 898.6 L1852.5 894.8 L1853.1 898.8 L1853.7 891.6 L1854.3 899.9 L1854.9 895.4 L1855.5 898.4 L1856 892.7 L1856.6 898.9 L1857.2 896.9 L1857.8 898.3 L1858.4 893.9 L1859 899.7 L1859.6 896.9 L1860.2 889.8 L1860.8 896.9 L1861.4 891.2 L1861.9 891.8 L1862.5 895.1 L1863.1 897.4 L1863.7 894.9 L1864.3 891.5 L1864.9 899.9 L1865.5 893.4 L1866.1 894.9 L1866.7 895.4 L1867.3 858.4 L1867.8 837.8 L1868.4 835.4 L1869 831.8 L1869.6 822 L1870.2 809.1 L1870.8 806.7 L1871.4 849 L1872 894.7 L1872.6 903 L1873.2 898.1 L1873.7 901.9 L1874.3 899.3 L1874.9 901.2 L1875.5 900.4 L1876.1 902.6 L1876.7 897.8 L1877.3 896.1 L1877.9 898.8 L1878.5 901.3 L1879.1 895.3 L1879.6 899.2 L1880.2 900.1 L1880.8 901.4 L1881.4 900.9 L1882 902.1 L1882.6 899.7 L1883.2 898.9 L1883.8 899.1 L1884.4 896.8 L1885 899.1 L1885.5 902.3 L1886.1 903.2 L1886.7 901.1 L1887.3 903.3 L1887.9 900.9 L1888.5 903.5 L1889.1 899.1 L1889.7 903 L1890.3 897.2 L1890.9 898.6 L1891.4 896.4 L1892 893 L1892.6 903 L1893.2 899.8 L1893.8 899.1 L1894.4 897.1 L1895 900.9" fill="none" stroke="#3f699d" stroke-width="2" stroke-linejoin="round" stroke-linecap="round"/>
<path d="M1047.8 904.7 L1048.3 902.2 L1048.9 902.5 L1049.5 903.3 L1050.1 904.6 L1050.7 901.6 L1051.3 901.5 L1051.9 903.2 L1052.5 903.3 L1053.1 904.6 L1053.6 905.4 L1054.2 904 L1054.8 902.9 L1055.4 905.3 L1056 901.6 L1056.6 904.7 L1057.2 904.7 L1057.8 905.5 L1058.4 900.3 L1059 891.2 L1059.5 901.1 L1060.1 902.8 L1060.7 905.6 L1061.3 904.4 L1061.9 903.5 L1062.5 905.4 L1063.1 900.6 L1063.7 904.3 L1064.3 905.3 L1064.9 901.5 L1065.4 905.5 L1066 895 L1066.6 903.9 L1067.2 903.4 L1067.8 904.5 L1068.4 903.8 L1069 905.2 L1069.6 905.7 L1070.2 900.1 L1070.8 901.5 L1071.3 896.7 L1071.9 887.5 L1072.5 894.7 L1073.1 895.5 L1073.7 898.9 L1074.3 899.2 L1074.9 901.2 L1075.5 900 L1076.1 904.8 L1076.7 902.5 L1077.2 899.9 L1077.8 904.4 L1078.4 899.8 L1079 900.4 L1079.6 903.5 L1080.2 903.9 L1080.8 903.6 L1081.4 903.5 L1082 895.7 L1082.6 902.1 L1083.1 904.6 L1083.7 904.3 L1084.3 887.7 L1084.9 882.3 L1085.5 890.1 L1086.1 890.2 L1086.7 889.4 L1087.3 892.8 L1087.9 897.8 L1088.5 894.4 L1089 895 L1089.6 894.5 L1090.2 898.1 L1090.8 898.2 L1091.4 897 L1092 891.9 L1092.6 897.1 L1093.2 895.1 L1093.8 897.4 L1094.4 898.6 L1094.9 898.8 L1095.5 893.6 L1096.1 896.5 L1096.7 902.1 L1097.3 903.1 L1097.9 904.1 L1098.5 902.8 L1099.1 902.4 L1099.7 905.5 L1100.3 902.2 L1100.8 902.4 L1101.4 904.6 L1102 902.9 L1102.6 905.1 L1103.2 905.7 L1103.8 906.3 L1104.4 902.9 L1105 906.6 L1105.6 905.2 L1106.2 900.5 L1106.7 900.7 L1107.3 902.8 L1107.9 900.2 L1108.5 905.1 L1109.1 906.1 L1109.7 907.3 L1110.3 906.7 L1110.9 907.8 L1111.5 908.1 L1112.1 907.1 L1112.6 903.9 L1113.2 896.2 L1113.8 903.2 L1114.4 904 L1115 904.6 L1115.6 902.4 L1116.2 903.9 L1116.8 903.2 L1117.4 905.1 L1118 902.5 L1118.5 896.1 L1119.1 896.6 L1119.7 893.1 L1120.3 898.5 L1120.9 900 L1121.5 900.3 L1122.1 900.8 L1122.7 904.5 L1123.3 903.1 L1123.9 904.7 L1124.4 901.4 L1125 905.8 L1125.6 902 L1126.2 899.9 L1126.8 905.8 L1127.4 902.7 L1128 902.3 L1128.6 900.7 L1129.2 904.2 L1129.8 906.7 L1130.3 906 L1130.9 902.4 L1131.5 902.8 L1132.1 907.3 L1132.7 906.4 L1133.3 904.3 L1133.9 904.6 L1134.5 901.7 L1135.1 904 L1135.7 897.7 L1136.2 899.8 L1136.8 904.1 L1137.4 900.9 L1138 902.7 L1138.6 901.3 L1139.2 903.6 L1139.8 894 L1140.4 903.9 L1141 902.8 L1141.6 900.6 L1142.1 901.7 L1142.7 904.5 L1143.3 900.6 L1143.9 899.3 L1144.5 900.1 L1145.1 900 L1145.7 904.6 L1146.3 902.1 L1146.9 901.4 L1147.5 893.8 L1148 900.5 L1148.6 894.5 L1149.2 899.8 L1149.8 894.6 L1150.4 902.1 L1151 905.1 L1151.6 903.2 L1152.2 903.7 L1152.8 899.1 L1153.4 903.8 L1153.9 902.4 L1154.5 902 L1155.1 898.8 L1155.7 888.1 L1156.3 902.1 L1156.9 903 L1157.5 901.6 L1158.1 899.8 L1158.7 904.5 L1159.3 901.9 L1159.8 903.1 L1160.4 902.9 L1161 905.7 L1161.6 901 L1162.2 899.7 L1162.8 904.2 L1163.4 904.4 L1164 899.6 L1164.6 905.5 L1165.2 904.5 L1165.7 901.3 L1166.3 893.6 L1166.9 894.3 L1167.5 898 L1168.1 897.7 L1168.7 901.5 L1169.3 897.5 L1169.9 899.1 L1170.5 898.5 L1171.1 899.4 L1171.6 899.4 L1172.2 900.5 L1172.8 902 L1173.4 900.6 L1174 901.7 L1174.6 898.8 L1175.2 897.9 L1175.8 898.7 L1176.4 900.5 L1177 901.8 L1177.5 900.9 L1178.1 900.3 L1178.7 899.4 L1179.3 897 L1179.9 902.5 L1180.5 900.4 L1181.1 900.3 L1181.7 898.9 L1182.3 897.6 L1182.9 898.4 L1183.4 899.5 L1184 898.6 L1184.6 899.3 L1185.2 897.9 L1185.8 899.1 L1186.4 899.2 L1187 901.8 L1187.6 897.6 L1188.2 901.1 L1188.8 899.7 L1189.3 898.3 L1189.9 897.4 L1190.5 897.6 L1191.1 904.6 L1191.7 903.1 L1192.3 903.1 L1192.9 902.6 L1193.5 904.1 L1194.1 901.4 L1194.7 904.4 L1195.2 903.1 L1195.8 898.1 L1196.4 899.9 L1197 902.1 L1197.6 904.2 L1198.2 898 L1198.8 900.2 L1199.4 903.7 L1200 902.9 L1200.6 900.7 L1201.1 900.4 L1201.7 903.4 L1202.3 898.1 L1202.9 900.6 L1203.5 899.9 L1204.1 893.7 L1204.7 900.7 L1205.3 895.7 L1205.9 900.4 L1206.5 896.6 L1207 899.7 L1207.6 898.8 L1208.2 892.5 L1208.8 898.3 L1209.4 901.6 L1210 900.3 L1210.6 902.7 L1211.2 903.3 L1211.8 902 L1212.4 902.7 L1212.9 885.2 L1213.5 897.9 L1214.1 905.8 L1214.7 899.5 L1215.3 898.2 L1215.9 900.6 L1216.5 905.9 L1217.1 902.5 L1217.7 905.8 L1218.3 901.5 L1218.8 899.8 L1219.4 901.1 L1220 902.9 L1220.6 897.9 L1221.2 902.4 L1221.8 900.6 L1222.4 899.3 L1223 894.5 L1223.6 900.3 L1224.2 902.2 L1224.7 896.5 L1225.3 895.8 L1225.9 898.4 L1226.5 902.7 L1227.1 902.7 L1227.7 903.1 L1228.3 902 L1228.9 904.2 L1229.5 900 L1230.1 899.6 L1230.6 898.9 L1231.2 899.3 L1231.8 906.1 L1232.4 904.3 L1233 907.8 L1233.6 905.3 L1234.2 907.4 L1234.8 908.8 L1235.4 910.8 L1236 911 L1236.5 909.2 L1237.1 909.8 L1237.7 909.8 L1238.3 910.2 L1238.9 909.3 L1239.5 910.5 L1240.1 910.7 L1240.7 910.5 L1241.3 910.6 L1241.9 909.8 L1242.4 909.1 L1243 911.1 L1243.6 911.1 L1244.2 910.1 L1244.8 909.7 L1245.4 910.9 L1246 910.7 L1246.6 911.1 L1247.2 911.1 L1247.8 910.2 L1248.3 909.8 L1248.9 909.8 L1249.5 911 L1250.1 911.1 L1250.7 909.1 L1251.3 910.2 L1251.9 910.5 L1252.5 909.8 L1253.1 909.7 L1253.7 910.2 L1254.2 911.1 L1254.8 909.4 L1255.4 910.9 L1256 911.2 L1256.6 910.7 L1257.2 910.3 L1257.8 910 L1258.4 911 L1259 909.8 L1259.6 910.4 L1260.1 911.1 L1260.7 909.5 L1261.3 909.6 L1261.9 909.3 L1262.5 910 L1263.1 911 L1263.7 909.7 L1264.3 909.4 L1264.9 910.3 L1265.5 909.4 L1266 909.2 L1266.6 910.7 L1267.2 909.3 L1267.8 909.4 L1268.4 909.8 L1269 911.3 L1269.6 910.8 L1270.2 911 L1270.8 911 L1271.4 699 L1271.9 911 L1272.5 911 L1273.1 911 L1273.7 911 L1274.3 911 L1274.9 911 L1275.5 911 L1276.1 911 L1276.7 911 L1277.3 703.4 L1277.8 632 L1278.4 635.9 L1279 639.1 L1279.6 636.4 L1280.2 637.3 L1280.8 632.9 L1281.4 628 L1282 638.1 L1282.6 835.8 L1283.2 911 L1283.7 911 L1284.3 911 L1284.9 911 L1285.5 911 L1286.1 911 L1286.7 826.5 L1287.3 769.8 L1287.9 783 L1288.5 768.7 L1289.1 782.3 L1289.6 794 L1290.2 790.7 L1290.8 784.1 L1291.4 761 L1292 772.4 L1292.6 775.3 L1293.2 814.8 L1293.8 910 L1294.4 910 L1295 905.7 L1295.5 888.9 L1296.1 883.6 L1296.7 883.1 L1297.3 882.6 L1297.9 882 L1298.5 881.5 L1299.1 878.4 L1299.7 846.9 L1300.3 841.1 L1300.9 828.9 L1301.4 796.8 L1302 814.5 L1302.6 811 L1303.2 832.7 L1303.8 783.5 L1304.4 788.6 L1305 786.5 L1305.6 731.9 L1306.2 813.3 L1306.8 685.1 L1307.3 661.6 L1307.9 657.4 L1308.5 674.2 L1309.1 652 L1309.7 679.3 L1310.3 656.6 L1310.9 673.4 L1311.5 655 L1312.1 678.5 L1312.7 667.1 L1313.2 668.6 L1313.8 660 L1314.4 654.5 L1315 660.7 L1315.6 679.1 L1316.2 688.2 L1316.8 680.6 L1317.4 681.4 L1318 679.2 L1318.6 695.5 L1319.1 683.5 L1319.7 683.6 L1320.3 700 L1320.9 697.6 L1321.5 692.6 L1322.1 702 L1322.7 690.6 L1323.3 702.2 L1323.9 695.9 L1324.5 724.4 L1325 715.9 L1325.6 710.9 L1326.2 706.8 L1326.8 703.2 L1327.4 712.8 L1328 704.8 L1328.6 712.2 L1329.2 706.6 L1329.8 712.9 L1330.4 716.6 L1330.9 718.1 L1331.5 719.9 L1332.1 708.1 L1332.7 715.2 L1333.3 721.2 L1333.9 704.8 L1334.5 711.3 L1335.1 724.6 L1335.7 710.4 L1336.3 714.4 L1336.8 733.6 L1337.4 806.4 L1338 799.7 L1338.6 808 L1339.2 804.6 L1339.8 804.6 L1340.4 808.1 L1341 808.3 L1341.6 802.9 L1342.2 804.6 L1342.7 807 L1343.3 806.3 L1343.9 787.4 L1344.5 645.1 L1345.1 645.2 L1345.7 645.3 L1346.3 645.4 L1346.9 645.5 L1347.5 645.6 L1348.1 671.6 L1348.6 712.9 L1349.2 754.2 L1349.8 795.4 L1350.4 804.4 L1351 805.3 L1351.6 805.5 L1352.2 806.3 L1352.8 760.5 L1353.4 708.8 L1354 675.2 L1354.5 677.4 L1355.1 679.6 L1355.7 681.8 L1356.3 686.5 L1356.9 694 L1357.5 701.5 L1358.1 709 L1358.7 739.2 L1359.3 784.4 L1359.9 804.9 L1360.4 804.8 L1361 805.5 L1361.6 805.3 L1362.2 804.3 L1362.8 806 L1363.4 805.8 L1364 803.9 L1364.6 802 L1365.2 804.1 L1365.8 802.7 L1366.3 809.8 L1366.9 812.1 L1367.5 815.8 L1368.1 818.2 L1368.7 823.4 L1369.3 821.3 L1369.9 814.8 L1370.5 808.3 L1371.1 801.9 L1371.7 792.4 L1372.2 781.7 L1372.8 771 L1373.4 783.3 L1374 809.5 L1374.6 820.8 L1375.2 820.4 L1375.8 820 L1376.4 805.4 L1377 801.5 L1377.6 802.3 L1378.1 763.8 L1378.7 635.3 L1379.3 627.5 L1379.9 620 L1380.5 627.3 L1381.1 634.3 L1381.7 641.3 L1382.3 648.4 L1382.9 728 L1383.5 805 L1384 804.6 L1384.6 804.2 L1385.2 803.8 L1385.8 803.4 L1386.4 803 L1387 910 L1387.6 910 L1388.2 910 L1388.8 693 L1389.4 702.3 L1389.9 711.3 L1390.5 716.7 L1391.1 715.1 L1391.7 717 L1392.3 718.8 L1392.9 714.6 L1393.5 719.3 L1394.1 720.8 L1394.7 727.4 L1395.3 730.6 L1395.8 744.4 L1396.4 752.1 L1397 760.2 L1397.6 764.6 L1398.2 753.1 L1398.8 781.3 L1399.4 803.7 L1400 858.1 L1400.6 887.3 L1401.2 909.5 L1401.7 910 L1402.3 910 L1402.9 910 L1403.5 910 L1404.1 910 L1404.7 910 L1405.3 910 L1405.9 910 L1406.5 910 L1407.1 910.1 L1407.6 902.5 L1408.2 827.1 L1408.8 798.1 L1409.4 792.9 L1410 794.4 L1410.6 780.9 L1411.2 784.1 L1411.8 808.4 L1412.4 777.5 L1413 805.6 L1413.5 804.1 L1414.1 783.9 L1414.7 809.8 L1415.3 805 L1415.9 801.2 L1416.5 808.6 L1417.1 808.8 L1417.7 799.6 L1418.3 802.5 L1418.9 799.3 L1419.4 797.6 L1420 794.9 L1420.6 793.6 L1421.2 794.7 L1421.8 789.5 L1422.4 802.1 L1423 794.8 L1423.6 795.5 L1424.2 782.4 L1424.8 791.8 L1425.3 797.8 L1425.9 791.7 L1426.5 801 L1427.1 804.2 L1427.7 799 L1428.3 804.1 L1428.9 805.8 L1429.5 804.8 L1430.1 797.6 L1430.7 789.8 L1431.2 805.4 L1431.8 793.3 L1432.4 804.5 L1433 796.5 L1433.6 801.3 L1434.2 798.1 L1434.8 791.8 L1435.4 798.9 L1436 799.4 L1436.6 791.6 L1437.1 804.5 L1437.7 800.4 L1438.3 792.6 L1438.9 789.4 L1439.5 785.7 L1440.1 802.2 L1440.7 794.7 L1441.3 797.4 L1441.9 777.7 L1442.5 767.5 L1443 790.6 L1443.6 781.3 L1444.2 746.4 L1444.8 776.1 L1445.4 769.2 L1446 777.6 L1446.6 788 L1447.2 788 L1447.8 836.7 L1448.4 910.5 L1448.9 910.5 L1449.5 910.5 L1450.1 910.5 L1450.7 910.5 L1451.3 910.5 L1451.9 910.5 L1452.5 910.5 L1453.1 910.5 L1453.7 910.5 L1454.3 910.5 L1454.8 910.5 L1455.4 910.5 L1456 910.5 L1456.6 910.5 L1457.2 910.5 L1457.8 910.5 L1458.4 910.5 L1459 910.5 L1459.6 910.5 L1460.2 910.5 L1460.7 910.5 L1461.3 910.5 L1461.9 910.5 L1462.5 910.5 L1463.1 910.5 L1463.7 910.5 L1464.3 910.5 L1464.9 910.5 L1465.5 910.5 L1466.1 910.5 L1466.6 910.5 L1467.2 910.5 L1467.8 910.5 L1468.4 910.5 L1469 910.5 L1469.6 910.5 L1470.2 910.5 L1470.8 910.5 L1471.4 910.5 L1472 910.5 L1472.5 910.5 L1473.1 910.5 L1473.7 910.5 L1474.3 910.5 L1474.9 910.5 L1475.5 910.5 L1476.1 910.5 L1476.7 910.5 L1477.3 910.5 L1477.9 910.5 L1478.4 910.5 L1479 910.5 L1479.6 910.5 L1480.2 910.5 L1480.8 910.5 L1481.4 910.5 L1482 910.5 L1482.6 910.5 L1483.2 910.5 L1483.8 910.5 L1484.3 910.5 L1484.9 910.5 L1485.5 910.5 L1486.1 910.5 L1486.7 910.5 L1487.3 910.5 L1487.9 910.5 L1488.5 910.5 L1489.1 910.5 L1489.7 910.5 L1490.2 910.5 L1490.8 910.5 L1491.4 910.5 L1492 910.5 L1492.6 910.5 L1493.2 910.5 L1493.8 910.5 L1494.4 910.5 L1495 910.5 L1495.6 910.5 L1496.1 910.5 L1496.7 910.5 L1497.3 910.5 L1497.9 910.5 L1498.5 910.5 L1499.1 910.5 L1499.7 910.5 L1500.3 910.5 L1500.9 910.5 L1501.5 910.5 L1502 910.5 L1502.6 910.5 L1503.2 910.5 L1503.8 910.5 L1504.4 910.5 L1505 910.5 L1505.6 910.5 L1506.2 910.5 L1506.8 910.5 L1507.4 910.5 L1507.9 910.5 L1508.5 910.5 L1509.1 910.5 L1509.7 910.5 L1510.3 910.5 L1510.9 910.5 L1511.5 910.5 L1512.1 910.5 L1512.7 910.5 L1513.3 910.5 L1513.8 910.5 L1514.4 910.5 L1515 910.5 L1515.6 910.5 L1516.2 910.5 L1516.8 910.5 L1517.4 910.5 L1518 910.5 L1518.6 910.5 L1519.2 910.5 L1519.7 910.5 L1520.3 910.5 L1520.9 910.5 L1521.5 910.5 L1522.1 721 L1522.7 650.2 L1523.3 650.5 L1523.9 651.7 L1524.5 644.2 L1525.1 613 L1525.6 686 L1526.2 665.7 L1526.8 656.2 L1527.4 642 L1528 649 L1528.6 639.9 L1529.2 641.8 L1529.8 650.5 L1530.4 644.2 L1531 654.2 L1531.5 651.9 L1532.1 644 L1532.7 663.3 L1533.3 657.7 L1533.9 657.5 L1534.5 658.4 L1535.1 656.5 L1535.7 663.8 L1536.3 641 L1536.9 642.4 L1537.4 661.1 L1538 662.2 L1538.6 629 L1539.2 647.3 L1539.8 661.4 L1540.4 648.1 L1541 660.9 L1541.6 708.9 L1542.2 698.5 L1542.8 708.6 L1543.3 779.5 L1543.9 674.1 L1544.5 693.9 L1545.1 742.7 L1545.7 700.3 L1546.3 733.7 L1546.9 774.2 L1547.5 716.2 L1548.1 682.9 L1548.7 686.1 L1549.2 686.6 L1549.8 680.4 L1550.4 674.5 L1551 713.3 L1551.6 900.1 L1552.2 910.5 L1552.8 910.5 L1553.4 910.5 L1554 910.5 L1554.6 910.5 L1555.1 910.5 L1555.7 910.5 L1556.3 877.2 L1556.9 792.8 L1557.5 792.7 L1558.1 812.2 L1558.7 910.4 L1559.3 910.2 L1559.9 910.5 L1560.5 910.5 L1561 910.5 L1561.6 910.5 L1562.2 910.5 L1562.8 910.5 L1563.4 910.5 L1564 910.5 L1564.6 910.5 L1565.2 910.5 L1565.8 910.5 L1566.4 910.5 L1566.9 910.5 L1567.5 910.5 L1568.1 910.5 L1568.7 910.5 L1569.3 910.5 L1569.9 910.5 L1570.5 910.5 L1571.1 910.5 L1571.7 910.5 L1572.3 910.5 L1572.8 910.5 L1573.4 910.5 L1574 910.5 L1574.6 910.5 L1575.2 910.5 L1575.8 910.5 L1576.4 910.5 L1577 910.5 L1577.6 910.5 L1578.2 910.5 L1578.7 910.5 L1579.3 910.5 L1579.9 910.5 L1580.5 910.5 L1581.1 910.4 L1581.7 910.4 L1582.3 910.4 L1582.9 910.4 L1583.5 910.4 L1584.1 910.4 L1584.6 910.4 L1585.2 910.4 L1585.8 910.4 L1586.4 910.4 L1587 910.4 L1587.6 910.4 L1588.2 910.4 L1588.8 910.4 L1589.4 910.4 L1590 910.4 L1590.5 910.4 L1591.1 910.4 L1591.7 910.4 L1592.3 910.4 L1592.9 910.4 L1593.5 910.4 L1594.1 910.4 L1594.7 910.4 L1595.3 910.4 L1595.9 910.4 L1596.4 910.4 L1597 910.4 L1597.6 910.4 L1598.2 910.4 L1598.8 910.4 L1599.4 910.4 L1600 910.4 L1600.6 910.4 L1601.2 910.4 L1601.8 910.4 L1602.3 910.4 L1602.9 910.4 L1603.5 910.4 L1604.1 910.4 L1604.7 910.4 L1605.3 910.4 L1605.9 910.4 L1606.5 910.4 L1607.1 910.4 L1607.7 910.4 L1608.2 910.4 L1608.8 910.4 L1609.4 910.4 L1610 910.4 L1610.6 910.4 L1611.2 910.4 L1611.8 910.4 L1612.4 910.4 L1613 910.4 L1613.6 910.4 L1614.1 910.4 L1614.7 910.4 L1615.3 910.4 L1615.9 910.4 L1616.5 910.4 L1617.1 910.4 L1617.7 910.4 L1618.3 910.4 L1618.9 910.4 L1619.5 910.4 L1620 910.4 L1620.6 910.4 L1621.2 910.4 L1621.8 910.4 L1622.4 910.4 L1623 910.4 L1623.6 910.3 L1624.2 910.3 L1624.8 910.3 L1625.4 910.3 L1625.9 910.3 L1626.5 910.3 L1627.1 910.3 L1627.7 910.3 L1628.3 910.3 L1628.9 910.3 L1629.5 910.3 L1630.1 910.3 L1630.7 910.3 L1631.3 910.3 L1631.8 910.3 L1632.4 910.3 L1633 910.3 L1633.6 910.3 L1634.2 910.3 L1634.8 910.3 L1635.4 910.3 L1636 910.3 L1636.6 910.3 L1637.2 910.3 L1637.7 910.3 L1638.3 910.3 L1638.9 910.3 L1639.5 910.3 L1640.1 910.3 L1640.7 910.3 L1641.3 910.3 L1641.9 910.3 L1642.5 910.3 L1643.1 910.3 L1643.6 910.3 L1644.2 910.3 L1644.8 910.3 L1645.4 910.3 L1646 910.3 L1646.6 910.3 L1647.2 910.3 L1647.8 910.3 L1648.4 910.3 L1649 910.3 L1649.5 910.3 L1650.1 910.3 L1650.7 910.3 L1651.3 910.3 L1651.9 910.3 L1652.5 910.3 L1653.1 910.3 L1653.7 910.3 L1654.3 910.3 L1654.9 910.3 L1655.4 910.3 L1656 910.3 L1656.6 910.3 L1657.2 910.3 L1657.8 910.3 L1658.4 910.3 L1659 910.3 L1659.6 910.3 L1660.2 910.3 L1660.8 910.3 L1661.3 910.3 L1661.9 910.3 L1662.5 910.3 L1663.1 910.3 L1663.7 910.3 L1664.3 910.3 L1664.9 910.3 L1665.5 910.2 L1666.1 910.2 L1666.7 910.2 L1667.2 910.2 L1667.8 910.2 L1668.4 910.2 L1669 910.2 L1669.6 910.2 L1670.2 910.2 L1670.8 910.2 L1671.4 910.2 L1672 910.2 L1672.6 910.2 L1673.1 910.2 L1673.7 910.2 L1674.3 910.2 L1674.9 910.2 L1675.5 910.2 L1676.1 910.2 L1676.7 910.2 L1677.3 910.2 L1677.9 910.2 L1678.5 910.2 L1679 910.2 L1679.6 910.2 L1680.2 910.2 L1680.8 910.2 L1681.4 910.2 L1682 910.2 L1682.6 910.2 L1683.2 910.2 L1683.8 910.2 L1684.4 910.2 L1684.9 910.2 L1685.5 910.2 L1686.1 910.2 L1686.7 910.2 L1687.3 910.2 L1687.9 910.2 L1688.5 910.2 L1689.1 910.2 L1689.7 910.2 L1690.3 910.2 L1690.8 910.2 L1691.4 910.2 L1692 910.2 L1692.6 910.2 L1693.2 910.2 L1693.8 910.2 L1694.4 910.2 L1695 910.2 L1695.6 910.2 L1696.2 910.2 L1696.7 910.2 L1697.3 910.2 L1697.9 910.2 L1698.5 910.2 L1699.1 910.2 L1699.7 910.2 L1700.3 910.2 L1700.9 910.2 L1701.5 910.2 L1702.1 910.2 L1702.6 910.2 L1703.2 910.2 L1703.8 910.2 L1704.4 910.2 L1705 910.2 L1705.6 910.2 L1706.2 910.2 L1706.8 910.2 L1707.4 910.2 L1708 910.1 L1708.5 910.1 L1709.1 910.1 L1709.7 910.1 L1710.3 910.1 L1710.9 910.1 L1711.5 910.1 L1712.1 910.1 L1712.7 910.1 L1713.3 910.1 L1713.9 910.1 L1714.4 910.1 L1715 910.1 L1715.6 910.1 L1716.2 910.1 L1716.8 910.1 L1717.4 910.1 L1718 910.1 L1718.6 910 L1719.2 909.9 L1719.8 909.8 L1720.3 909.8 L1720.9 909.7 L1721.5 909.6 L1722.1 909.5 L1722.7 909.4 L1723.3 909.3 L1723.9 909.2 L1724.5 909.2 L1725.1 909.1 L1725.7 909 L1726.2 908.9 L1726.8 897.6 L1727.4 908.7 L1728 908.7 L1728.6 909 L1729.2 908.9 L1729.8 908.8 L1730.4 908.8 L1731 901 L1731.6 908.8 L1732.1 908.5 L1732.7 908.3 L1733.3 907.9 L1733.9 905.8 L1734.5 905.9 L1735.1 900.7 L1735.7 906.6 L1736.3 899.3 L1736.9 902.1 L1737.5 903.8 L1738 906.7 L1738.6 902 L1739.2 900.3 L1739.8 904.7 L1740.4 901.3 L1741 903.1 L1741.6 906.6 L1742.2 899.7 L1742.8 905.1 L1743.4 903.6 L1743.9 900.8 L1744.5 899.5 L1745.1 899.6 L1745.7 903.1 L1746.3 896.6 L1746.9 903.9 L1747.5 900.1 L1748.1 901.4 L1748.7 896.3 L1749.3 898.1 L1749.8 898.9 L1750.4 897 L1751 902.2 L1751.6 901.2 L1752.2 904.3 L1752.8 902.2 L1753.4 903.5 L1754 898 L1754.6 904.1 L1755.2 895.7 L1755.7 899.5 L1756.3 901.2 L1756.9 904.2 L1757.5 901.2 L1758.1 899.9 L1758.7 904 L1759.3 894.9 L1759.9 902.1 L1760.5 901.3 L1761.1 902.8 L1761.6 902 L1762.2 902.9 L1762.8 896.5 L1763.4 904.5 L1764 902 L1764.6 899.6 L1765.2 900.9 L1765.8 902.4 L1766.4 900.8 L1767 904.5 L1767.5 902.6 L1768.1 901 L1768.7 896.7 L1769.3 893.2 L1769.9 880.6 L1770.5 836.7 L1771.1 855.2 L1771.7 794.1 L1772.3 732.3 L1772.9 702.8 L1773.4 717.1 L1774 726.5 L1774.6 723.3 L1775.2 736.2 L1775.8 726 L1776.4 796.5 L1777 740.7 L1777.6 794.5 L1778.2 805.3 L1778.8 807.3 L1779.3 780.8 L1779.9 819 L1780.5 837.5 L1781.1 788.8 L1781.7 735.7 L1782.3 739 L1782.9 746.1 L1783.5 747.6 L1784.1 789.2 L1784.7 857.4 L1785.2 888 L1785.8 898.9 L1786.4 904.6 L1787 901.4 L1787.6 904.3 L1788.2 897.9 L1788.8 900.8 L1789.4 900 L1790 896.7 L1790.6 904.2 L1791.1 903.5 L1791.7 898.2 L1792.3 900.1 L1792.9 901.7 L1793.5 902.4 L1794.1 900 L1794.7 896.5 L1795.3 896.4 L1795.9 896.8 L1796.5 896.1 L1797 904.1 L1797.6 890.8 L1798.2 897.7 L1798.8 903.3 L1799.4 900.9 L1800 901.4 L1800.6 896.1 L1801.2 901.7 L1801.8 894.2 L1802.4 903.6 L1802.9 896.9 L1803.5 897.9 L1804.1 904.1 L1804.7 896.2 L1805.3 902.3 L1805.9 898.8 L1806.5 900.5 L1807.1 897.4 L1807.7 901.2 L1808.3 904.7 L1808.8 900.6 L1809.4 897.5 L1810 901.9 L1810.6 885.7 L1811.2 901.6 L1811.8 902.4 L1812.4 902.4 L1813 903.4 L1813.6 901.1 L1814.2 896.3 L1814.7 900.2 L1815.3 898.4 L1815.9 903.8 L1816.5 902.3 L1817.1 900.3 L1817.7 902.2 L1818.3 904.7 L1818.9 897.3 L1819.5 904.1 L1820.1 899.6 L1820.6 896 L1821.2 903 L1821.8 903.1 L1822.4 902.6 L1823 900.7 L1823.6 896.1 L1824.2 904 L1824.8 903.3 L1825.4 897 L1826 903.1 L1826.5 899.5 L1827.1 898.9 L1827.7 904.7 L1828.3 904.7 L1828.9 898.5 L1829.5 896.8 L1830.1 899.2 L1830.7 901.4 L1831.3 904.3 L1831.9 900.9 L1832.4 904.2 L1833 902.7 L1833.6 904.6 L1834.2 898.9 L1834.8 898.3 L1835.4 900.3 L1836 900.9 L1836.6 902.2 L1837.2 902.5 L1837.8 901.8 L1838.3 891.3 L1838.9 902.4 L1839.5 895.1 L1840.1 898.4 L1840.7 896.8 L1841.3 900.1 L1841.9 891.4 L1842.5 893.9 L1843.1 899 L1843.7 898.7 L1844.2 892.3 L1844.8 901.5 L1845.4 892.9 L1846 896.4 L1846.6 897.1 L1847.2 897.5 L1847.8 896.4 L1848.4 901.3 L1849 899.2 L1849.6 897.9 L1850.1 899.6 L1850.7 900.9 L1851.3 892.7 L1851.9 897.1 L1852.5 892.4 L1853.1 897.5 L1853.7 889.2 L1854.3 899.4 L1854.9 896 L1855.5 897.2 L1856 891.9 L1856.6 900.6 L1857.2 895.7 L1857.8 896.9 L1858.4 894.6 L1859 899.6 L1859.6 895.8 L1860.2 889.4 L1860.8 900.8 L1861.4 889.7 L1861.9 889.9 L1862.5 897.2 L1863.1 901 L1863.7 896.7 L1864.3 890.3 L1864.9 901.4 L1865.5 893.5 L1866.1 893.4 L1866.7 895.9 L1867.3 858.4 L1867.8 837.8 L1868.4 835.4 L1869 831.8 L1869.6 822 L1870.2 809.1 L1870.8 806.7 L1871.4 849 L1872 894.6 L1872.6 903.8 L1873.2 897.1 L1873.7 902.8 L1874.3 895.9 L1874.9 899.5 L1875.5 901.1 L1876.1 903.4 L1876.7 896.4 L1877.3 896.4 L1877.9 895.1 L1878.5 899.7 L1879.1 895.6 L1879.6 896 L1880.2 898.8 L1880.8 902.3 L1881.4 899.5 L1882 902.3 L1882.6 897 L1883.2 900.1 L1883.8 896.3 L1884.4 896 L1885 897.7 L1885.5 903.5 L1886.1 902.3 L1886.7 904.4 L1887.3 902.3 L1887.9 903.9 L1888.5 902.7 L1889.1 897.2 L1889.7 904.1 L1890.3 895.7 L1890.9 895.6 L1891.4 897.5 L1892 893 L1892.6 902.7 L1893.2 901.1 L1893.8 899.3 L1894.4 895.6 L1895 904.7" fill="none" stroke="#9e3b39" stroke-width="2" stroke-linejoin="round" stroke-linecap="round"/>
</g>
<path d="M1047.5 611.7 V913.5 M1047 913.4 H1896.1 M1041.9 912.5 H1047.5 M1041.9 862.5 H1047.5 M1041.9 812.5 H1047.5 M1041.9 762.5 H1047.5 M1041.9 712.5 H1047.5 M1041.9 662.5 H1047.5 M1056.5 912.5 V918.5 M1127.5 912.5 V918.5 M1198.5 912.5 V918.5 M1268.5 912.5 V918.5 M1339.5 912.5 V918.5 M1410.5 912.5 V918.5 M1480.5 912.5 V918.5 M1551.5 912.5 V918.5 M1622.5 912.5 V918.5 M1692.5 912.5 V918.5 M1763.5 912.5 V918.5 M1834.5 912.5 V918.5" stroke="#000" stroke-width="1" fill="none" shape-rendering="crispEdges"/>
<text x="1444" y="594" text-anchor="middle" class="ct">George last 24 Hours</text>
<clipPath id="yc981_575"><rect x="981" y="607" width="70" height="320"/></clipPath>
<g clip-path="url(#yc981_575)" class="al">
<text x="993.3" y="915.8">0</text>
<text x="993.3" y="865.8">100 M</text>
<text x="993.3" y="815.8">200 M</text>
<text x="993.3" y="765.8">300 M</text>
<text x="993.3" y="715.8">400 M</text>
<text x="993.3" y="665.8">500 M</text>
<text x="993.3" y="615">600 M</text>
</g>
<clipPath id="xc981_575"><rect x="981" y="917.5" width="920" height="30"/></clipPath>
<g clip-path="url(#xc981_575)" class="al" text-anchor="middle">
<text x="1056.8" y="935.3">12:00</text>
<text x="1127.5" y="935.3">14:00</text>
<text x="1198.1" y="935.3">16:00</text>
<text x="1268.8" y="935.3">18:00</text>
<text x="1339.5" y="935.3">20:00</text>
<text x="1410.1" y="935.3">22:00</text>
<text x="1480.8" y="935.3">00:00</text>
<text x="1551.5" y="935.3">02:00</text>
<text x="1622.1" y="935.3">04:00</text>
<text x="1692.8" y="935.3">06:00</text>
<text x="1763.5" y="935.3">08:00</text>
<text x="1834.1" y="935.3">10:00</text>
</g>
<g class="lg">
<text x="1237.2" y="967.5" class="lh">Curr</text>
<text x="1300.4" y="967.5" class="lh">Min</text>
<text x="1355.4" y="967.5" class="lh">Max</text>
<text x="1426.3" y="967.5" class="lh">Avg</text>
<rect x="988" y="974.8" width="12" height="12" fill="#3f699d"/>
<text x="1004.2" y="984.5" textLength="221.6" lengthAdjust="spacingAndGlyphs">Outbound traffic on ether1 (bits/sec)</text>
<text x="1237.2" y="984.5">24.814 M</text>
<text x="1300.4" y="984.5">2.525 M</text>
<text x="1355.4" y="984.5">574.885 M</text>
<text x="1426.3" y="984.5">86.440 M</text>
<rect x="988" y="991.9" width="12" height="12" fill="#9e3b39"/>
<text x="1004.2" y="1001.6" textLength="210.6" lengthAdjust="spacingAndGlyphs">Inbound traffic on ether1 (bits/sec)</text>
<text x="1237.2" y="1001.6">24.762 M</text>
<text x="1300.4" y="1001.6">2.293 M</text>
<text x="1355.4" y="1001.6">596.160 M</text>
<text x="1426.3" y="1001.6">86.181 M</text>
</g>
</svg>
<div id="user" class="t">john.mitchell@netxms.ssk.local (4.2-433-g453d89aa43)</div>
<div id="prod" class="t">NetXMS: PRODUCTION</div>
<svg id="icons" width="1920" height="1053" viewBox="0 0 1920 1053" style="left:0;top:0;pointer-events:none">
<defs><linearGradient id="gscroll" x1="0" y1="0" x2="1" y2="1"><stop offset="0" stop-color="#f2f7fe"/><stop offset="1" stop-color="#a6c6f1"/></linearGradient></defs>
<path d="M1836 17.4h8.2" stroke="#333" stroke-width="1.4"/>
<path d="M1869.5 12v-1.6h7.4v7.4h-1.6" stroke="#777" stroke-width="0.9" fill="none"/>
<rect x="1867.6" y="12.9" width="6.9" height="6.6" stroke="#303030" stroke-width="1.4" fill="none"/>
<circle cx="1903.9" cy="14.9" r="9.1" fill="#92b372"/>
<path d="M1900 11l7.8 7.8M1907.8 11l-7.8 7.8" stroke="#fff" stroke-width="1.5"/>
<rect x="1.3" y="66.5" width="1.7" height="1.7" fill="#a59c8f"/><rect x="1.3" y="70.6" width="1.7" height="1.7" fill="#a59c8f"/><rect x="1.3" y="74.7" width="1.7" height="1.7" fill="#a59c8f"/><rect x="1.3" y="78.8" width="1.7" height="1.7" fill="#a59c8f"/>
<rect x="95.2" y="66.5" width="1.7" height="1.7" fill="#a59c8f"/><rect x="95.2" y="70.6" width="1.7" height="1.7" fill="#a59c8f"/><rect x="95.2" y="74.7" width="1.7" height="1.7" fill="#a59c8f"/><rect x="95.2" y="78.8" width="1.7" height="1.7" fill="#a59c8f"/>
<rect x="324.2" y="66.5" width="1.7" height="1.7" fill="#a59c8f"/><rect x="324.2" y="70.6" width="1.7" height="1.7" fill="#a59c8f"/><rect x="324.2" y="74.7" width="1.7" height="1.7" fill="#a59c8f"/><rect x="324.2" y="78.8" width="1.7" height="1.7" fill="#a59c8f"/>
<rect x="364.3" y="66.5" width="1.7" height="1.7" fill="#a59c8f"/><rect x="364.3" y="70.6" width="1.7" height="1.7" fill="#a59c8f"/><rect x="364.3" y="74.7" width="1.7" height="1.7" fill="#a59c8f"/><rect x="364.3" y="78.8" width="1.7" height="1.7" fill="#a59c8f"/>
<g transform="translate(13.5 64.5)"><path d="M12.8 2.1c-.3-1-1.8-.9-1.8.3C7.6 2.6 5.6 5 4.3 7.6 3.4 9.3 2 9.600 1 10.200c-.5.500-.2 1.100.4 1.500l9.200 4.100c.9.300 1.400-.1 1.500-.8.200-1.600.3-3 1.300-4.700 1.400-2.500 1.700-5.300-.1-7.500z" fill="#f2b72c" stroke="#c98a16" stroke-width="0.8"/><path d="M4.600 11.6c-.5 1.300.3 2.300 1.500 2.600 1.100.3 2.100-.3 2.400-1.200z" fill="#fbe39a" stroke="#b87a12" stroke-width="0.6"/><path d="M6 6.500c1.300-1.900 2.800-2.900 4.600-3.100" stroke="#fde9a8" stroke-width="1" fill="none"/></g>
<g transform="translate(44 64.5)"><path d="M2.7 3v11.2M2.7 7.4h4M2.7 13.4h4" stroke="#555a6e" stroke-width="1.1" fill="none"/><circle cx="2.7" cy="2.6" r="2.3" fill="#4fa04f" stroke="#2e7a35" stroke-width="0.8"/><circle cx="7.7" cy="7.6" r="2.3" fill="#4fa04f" stroke="#2e7a35" stroke-width="0.8"/><circle cx="7.7" cy="13.4" r="2.3" fill="#4fa04f" stroke="#2e7a35" stroke-width="0.8"/></g>
<g transform="translate(68 64.5)"><rect x="6.3" y="0.800" width="9.400" height="9" fill="#e8eefc" stroke="#7a96d6" stroke-width="1"/><rect x="9" y="2.600" width="4" height="3.600" fill="#6cc04a"/><rect x="8.500" y="6.600" width="5.200" height="1.200" fill="#4a9a34"/><path d="M.6 5.600h5l1 1.500h7.200v8.100H.6z" fill="#f8d25a" stroke="#e2912e" stroke-width="1" stroke-linejoin="round"/><path d="M1.400 9h11.600" stroke="#fbe9a8" stroke-width="1.200"/></g>
<g transform="translate(108 64.5)"><path d="M3.4 1.5H13c1.500 0 2.300.8 2.300 1.600 0 .9-.7 1.500-1.700 1.500h-1L11.500 12.500H2.300z" fill="url(#gscroll)" stroke="#4f8ad8" stroke-width="1" stroke-linejoin="round"/><path d="M12.600 4.600c.9-.4 1-1.700 0-2.100" fill="none" stroke="#4f8ad8" stroke-width="0.800"/><path d="M2.300 12.500h9.200c0 1.700-.9 2.900-2.400 2.900H2c-1 0-1.600-.7-1.600-1.500s.8-1.400 1.900-1.400z" fill="#e4eefc" stroke="#4f8ad8" stroke-width="1" stroke-linejoin="round"/></g>
<g transform="translate(108 64.5)"><path d="M10.6 6.4L15.9 15.5H5.3z" fill="#f9d54a" stroke="#e09a2a" stroke-width="1" stroke-linejoin="round"/><path d="M10.6 9.3v3.2M10.6 13.4v1" stroke="#9a5a10" stroke-width="1.3"/></g>
<g transform="translate(135 64.5)"><path d="M3.4 1.5H13c1.500 0 2.300.8 2.300 1.600 0 .9-.7 1.500-1.700 1.500h-1L11.500 12.500H2.300z" fill="url(#gscroll)" stroke="#4f8ad8" stroke-width="1" stroke-linejoin="round"/><path d="M12.600 4.600c.9-.4 1-1.700 0-2.100" fill="none" stroke="#4f8ad8" stroke-width="0.800"/><path d="M2.300 12.500h9.200c0 1.700-.9 2.900-2.400 2.900H2c-1 0-1.600-.7-1.600-1.500s.8-1.400 1.900-1.400z" fill="#e4eefc" stroke="#4f8ad8" stroke-width="1" stroke-linejoin="round"/></g>
<g transform="translate(135 64.5)"><path d="M10.6 6.4L15.9 15.5H5.3z" fill="#f9d54a" stroke="#e09a2a" stroke-width="1" stroke-linejoin="round"/><path d="M10.6 9.3v3.2M10.6 13.4v1" stroke="#9a5a10" stroke-width="1.3"/></g>
<g transform="translate(162 64.5)"><path d="M3.4 1.5H13c1.500 0 2.300.8 2.300 1.600 0 .9-.7 1.500-1.700 1.500h-1L11.500 12.500H2.300z" fill="url(#gscroll)" stroke="#4f8ad8" stroke-width="1" stroke-linejoin="round"/><path d="M12.600 4.600c.9-.4 1-1.700 0-2.100" fill="none" stroke="#4f8ad8" stroke-width="0.800"/><path d="M2.300 12.500h9.200c0 1.700-.9 2.900-2.400 2.900H2c-1 0-1.600-.7-1.600-1.500s.8-1.400 1.900-1.400z" fill="#e4eefc" stroke="#4f8ad8" stroke-width="1" stroke-linejoin="round"/></g>
<g transform="translate(162 64.5)"><path d="M10.6 6.4L15.9 15.5H5.3z" fill="#f9d54a" stroke="#e09a2a" stroke-width="1" stroke-linejoin="round"/><path d="M10.6 9.3v3.2M10.6 13.4v1" stroke="#9a5a10" stroke-width="1.3"/></g>
<g transform="translate(189 64.5)"><path d="M3.4 1.5H13c1.500 0 2.300.8 2.300 1.600 0 .9-.7 1.500-1.700 1.500h-1L11.500 12.500H2.300z" fill="url(#gscroll)" stroke="#4f8ad8" stroke-width="1" stroke-linejoin="round"/><path d="M12.600 4.600c.9-.4 1-1.700 0-2.100" fill="none" stroke="#4f8ad8" stroke-width="0.800"/><path d="M2.300 12.500h9.200c0 1.700-.9 2.900-2.400 2.900H2c-1 0-1.600-.7-1.600-1.500s.8-1.400 1.900-1.400z" fill="#e4eefc" stroke="#4f8ad8" stroke-width="1" stroke-linejoin="round"/></g>
<g transform="translate(189 64.5)"><path d="M10.6 6.4L15.9 15.5H5.3z" fill="#f9d54a" stroke="#e09a2a" stroke-width="1" stroke-linejoin="round"/><path d="M10.6 9.3v3.2M10.6 13.4v1" stroke="#9a5a10" stroke-width="1.3"/></g>
<g transform="translate(216 64.5)"><path d="M3.4 1.5H13c1.500 0 2.300.8 2.300 1.600 0 .9-.7 1.500-1.700 1.500h-1L11.500 12.500H2.300z" fill="url(#gscroll)" stroke="#4f8ad8" stroke-width="1" stroke-linejoin="round"/><path d="M12.600 4.600c.9-.4 1-1.700 0-2.100" fill="none" stroke="#4f8ad8" stroke-width="0.800"/><path d="M2.300 12.500h9.200c0 1.700-.9 2.900-2.400 2.900H2c-1 0-1.600-.7-1.600-1.500s.8-1.400 1.900-1.400z" fill="#e4eefc" stroke="#4f8ad8" stroke-width="1" stroke-linejoin="round"/></g>
<g transform="translate(216 64.5)"><path d="M6.2 14.8L11 10" stroke="#e9a92c" stroke-width="2.6" stroke-linecap="round"/><circle cx="12.3" cy="8.8" r="2.9" fill="#f5c24a" stroke="#e09a2a" stroke-width="1"/><circle cx="13" cy="8.1" r="0.9" fill="#fff6d8"/></g>
<g transform="translate(243 64.5)"><path d="M3.4 1.5H13c1.500 0 2.300.8 2.300 1.600 0 .9-.7 1.500-1.700 1.500h-1L11.500 12.500H2.300z" fill="url(#gscroll)" stroke="#4f8ad8" stroke-width="1" stroke-linejoin="round"/><path d="M12.600 4.600c.9-.4 1-1.700 0-2.100" fill="none" stroke="#4f8ad8" stroke-width="0.800"/><path d="M2.300 12.500h9.200c0 1.700-.9 2.900-2.400 2.900H2c-1 0-1.600-.7-1.600-1.500s.8-1.400 1.900-1.400z" fill="#e4eefc" stroke="#4f8ad8" stroke-width="1" stroke-linejoin="round"/></g>
<g transform="translate(243 64.5)"><path d="M10.6 6.4L15.9 15.5H5.3z" fill="#f9d54a" stroke="#e09a2a" stroke-width="1" stroke-linejoin="round"/><path d="M10.6 9.3v3.2M10.6 13.4v1" stroke="#9a5a10" stroke-width="1.3"/></g>
<g transform="translate(270 64.5)"><path d="M3.4 1.5H13c1.500 0 2.300.8 2.300 1.600 0 .9-.7 1.500-1.700 1.500h-1L11.500 12.500H2.300z" fill="url(#gscroll)" stroke="#4f8ad8" stroke-width="1" stroke-linejoin="round"/><path d="M12.600 4.600c.9-.4 1-1.700 0-2.100" fill="none" stroke="#4f8ad8" stroke-width="0.800"/><path d="M2.300 12.500h9.200c0 1.700-.9 2.900-2.400 2.900H2c-1 0-1.600-.7-1.600-1.500s.8-1.400 1.900-1.400z" fill="#e4eefc" stroke="#4f8ad8" stroke-width="1" stroke-linejoin="round"/></g>
<g transform="translate(270 64.5)"><path d="M10.6 6.4L15.9 15.5H5.3z" fill="#f9d54a" stroke="#e09a2a" stroke-width="1" stroke-linejoin="round"/><path d="M10.6 9.3v3.2M10.6 13.4v1" stroke="#9a5a10" stroke-width="1.3"/></g>
<g transform="translate(297 64.5)"><path d="M3.4 1.5H13c1.500 0 2.300.8 2.300 1.600 0 .9-.7 1.500-1.700 1.500h-1L11.500 12.500H2.300z" fill="url(#gscroll)" stroke="#4f8ad8" stroke-width="1" stroke-linejoin="round"/><path d="M12.600 4.600c.9-.4 1-1.700 0-2.100" fill="none" stroke="#4f8ad8" stroke-width="0.800"/><path d="M2.300 12.500h9.200c0 1.700-.9 2.900-2.400 2.900H2c-1 0-1.600-.7-1.600-1.500s.8-1.400 1.900-1.400z" fill="#e4eefc" stroke="#4f8ad8" stroke-width="1" stroke-linejoin="round"/></g>
<g transform="translate(297 64.5)"><path d="M10.6 6.4L15.9 15.5H5.3z" fill="#f9d54a" stroke="#e09a2a" stroke-width="1" stroke-linejoin="round"/><path d="M10.6 9.3v3.2M10.6 13.4v1" stroke="#9a5a10" stroke-width="1.3"/></g>
<g transform="translate(337.500 64.500)"><path d="M7.300 3.200c0-2.400 7.600-2.400 7.600 0v9.600c0 2.300-7.600 2.300-7.600 0z" fill="#d0d0d0" stroke="#555" stroke-width="0.9"/><path d="M11.500 2v12" stroke="#f4f4f4" stroke-width="2.200"/><rect x="0.700" y="6.600" width="7.300" height="9" fill="#fff" stroke="#444" stroke-width="0.9"/><path d="M2.200 9h4.400M2.200 10.800h4.400M2.200 12.600h4.400M2.200 14.300h4.400" stroke="#333" stroke-width="0.8"/></g>
<g transform="translate(376.500 64.500)"><path d="M.5 4.700h15M.5 13h15" stroke="#2f8cf0" stroke-width="1"/><rect x="3.600" y="3.200" width="2.900" height="2.900" fill="#d8121c"/><rect x="9.600" y="3.200" width="2.900" height="2.900" fill="#d8121c"/><rect x="3.600" y="11.500" width="2.900" height="2.900" fill="#d8121c"/><rect x="9.600" y="11.500" width="2.900" height="2.900" fill="#d8121c"/><path d="M8 4.800v5.400M5.800 8l2.200 2.500L10.200 8" stroke="#1c9a2c" stroke-width="1.400" fill="none"/></g>
<g transform="translate(404 64.500)" stroke="#a85f2c" stroke-width="1.100"><rect x="1.300" y="1.500" width="6.600" height="6.600" fill="#ecd2a6"/><path d="M4.600 .2v9.200M0 4.800h9.200" fill="none"/><rect x="6.800" y="7.800" width="8" height="7.600" fill="#ecd2a6"/><path d="M10.800 6.400v10M5.400 11.600h10.600" fill="none"/></g>
<g transform="translate(431.500 64.500)"><rect x="0.900" y="1" width="11.200" height="10.800" fill="#eaf3fd" stroke="#7a7468" stroke-width="1"/><rect x="0.900" y="1" width="11.200" height="2.300" fill="#3f74c4"/><circle cx="11" cy="11.300" r="3.600" fill="#e8f0fb" stroke="#2f63b4" stroke-width="1.500" stroke-dasharray="1.600 1.200"/><path d="M7.800 7.600l5.600 6.400" stroke="#23346a" stroke-width="1.300"/></g>
<g transform="translate(458.500 64.500)"><rect x="0.900" y="1.700" width="13" height="12.600" fill="#eef4fd" stroke="#7aa2e0" stroke-width="1"/><path d="M2.700 3.800h9.400" stroke="#6cc070" stroke-width="1.100"/><path d="M2.700 6.600h2M2.700 9h2M2.700 11.400h2M6 6.600h6M6 9h6M6 11.400h6" stroke="#a9c4ea" stroke-width="1.100"/></g>
<g transform="translate(463.5 69.5) scale(1)"><path d="M1 10.8L2 7.6 8.2 1.4c.9-.8 2.6.7 1.9 1.8L3.9 9.6z" fill="#f6c744" stroke="#d98f24" stroke-width="0.9" stroke-linejoin="round"/><path d="M1 10.8L2 7.6 3.9 9.6z" fill="#f3dcb8" stroke="#8a5a20" stroke-width="0.7"/><path d="M8.2 1.4c.9-.8 2.6.7 1.9 1.8L9 4.2 7.2 2.4z" fill="#f2b8c0" stroke="#c98a90" stroke-width="0.6"/><path d="M1 10.8l.5-1.3.9.8z" fill="#553311"/></g>
<g transform="translate(485.500 64.500)"><path d="M2 2.200l7.600-1.400 1.800 1.300v12l-5.500 1.600L2 14.200z" fill="#efc66a" stroke="#c79a3e" stroke-width="0.800"/><rect x="7.500" y="3.700" width="6.600" height="10.300" fill="#e9f1f6" stroke="#8fb0c4" stroke-width="0.800"/><rect x="8.500" y="5" width="4.400" height="3.600" fill="#5f9fe0"/><rect x="6.600" y="8.300" width="3" height="4.600" fill="#d9a514"/></g>
<g transform="translate(514 64.500)"><rect x="1.100" y="3.400" width="2.600" height="2.600" fill="#5b77b8"/><rect x="1.100" y="7.500" width="2.600" height="2.600" fill="#5b77b8"/><rect x="1.100" y="11.600" width="2.600" height="2.600" fill="#5b77b8"/><path d="M5.400 4.700h6.600M5.400 8.800h6.600M5.400 12.900h6.600" stroke="#4d67a8" stroke-width="1.200"/></g>
<g transform="translate(538.500 64.500)"><rect x="1.100" y="1" width="13" height="13.300" fill="#a9ddf6" stroke="#2f86d6" stroke-width="1.300"/><path d="M1.800 1.700h5.400l4.200 11.900H1.800z" fill="#7ccf52"/><path d="M3.200 3.400l1.300 1.700M4.900 7.300l1.300 1.300M3.200 10.500l1.200 1.200" stroke="#e0242c" stroke-width="1.500"/><path d="M7.200 1.700l4.200 11.900" stroke="#f6dc9a" stroke-width="1.300"/></g>
<g transform="translate(544.5 70) scale(0.95)"><path d="M1 10.8L2 7.6 8.2 1.4c.9-.8 2.6.7 1.9 1.8L3.9 9.6z" fill="#f6c744" stroke="#d98f24" stroke-width="0.9" stroke-linejoin="round"/><path d="M1 10.8L2 7.6 3.9 9.6z" fill="#f3dcb8" stroke="#8a5a20" stroke-width="0.7"/><path d="M8.2 1.4c.9-.8 2.6.7 1.9 1.8L9 4.2 7.2 2.4z" fill="#f2b8c0" stroke="#c98a90" stroke-width="0.6"/><path d="M1 10.8l.5-1.3.9.8z" fill="#553311"/></g>
<g transform="translate(566 64.500)" fill="#f7f7f7" stroke="#c4c4c4" stroke-width="0.900"><path d="M.6 .9h5.700l1.600 1.700v7.600H.6z"/><path d="M3.900 3.200h5.700l1.600 1.700v7.600H3.900z"/><path d="M7.200 5.600h5.600l2.200 2.400v7.300H7.200z"/></g>
<g transform="translate(593.500 64.500)"><circle cx="10.300" cy="6" r="4.900" fill="#e6f0fb" stroke="#2c63ae" stroke-width="1.300"/><path d="M10 3.200v3.200l1.500 1.400" stroke="#23467e" stroke-width="1" fill="none"/><rect x="0.900" y="5.200" width="7.300" height="9.600" fill="#fff" stroke="#5d6f8e" stroke-width="0.900"/><rect x="0.900" y="5.200" width="7.300" height="2" fill="#2c63ae"/><text x="4.600" y="13.600" font-family="Liberation Sans,sans-serif" font-size="6.500" font-weight="bold" fill="#1c2f6a" text-anchor="middle">12</text></g>
<g transform="translate(620 64.500)"><path d="M.4 1.800h4v13H.4M12 1.800h4M12 14.800h4" stroke="#5d8fd6" stroke-width="1" fill="none"/><rect x="1" y="2.300" width="3.600" height="12" fill="#e4eefb"/><rect x="12" y="2.300" width="3.600" height="12" fill="#e4eefb"/><path d="M11.800 1.800v13" stroke="#8fb2e6" stroke-width="1"/><path d="M1 4h3M12.500 4h3" stroke="#58b04c" stroke-width="1"/><path d="M1 6.500h3M1 9h3M1 11.500h3M12.500 6.500h3M12.500 9h3M12.500 11.500h3" stroke="#b9cdea" stroke-width="0.900"/><path d="M5.300 11.400l1.800-.2 3.600-4.200 1.600-.1" stroke="#3f9a3c" stroke-width="2" fill="none" stroke-linecap="round"/></g>
<g transform="translate(648 64.500)"><path d="M2.200 1.300h6.700l2.600 2.500v11.400H2.200z" fill="#fdfbf3" stroke="#ae9862" stroke-width="1.100"/><rect x="1.200" y="6.600" width="11.500" height="3.700" rx="0.800" fill="#f4f7fb" stroke="#2f55a0" stroke-width="1.300"/><path d="M4.200 4h1.600M4.200 8.500h.8M6 8.500h4.300M4.200 12.600h.8M6 12.600h4.300" stroke="#6b8ac8" stroke-width="1.100"/></g>
<g transform="translate(675 64.500)"><path d="M.4 7.300h3.300M.4 9.600h3.300" stroke="#c9961e" stroke-width="0.900"/><path d="M3.400 5.600l3 2.800-3 2.900z" fill="#f8e7a2" stroke="#c9961e" stroke-width="0.900"/><path d="M9.600 3v9.600h2.200M9.600 8.400h2.200" stroke="#4668b4" stroke-width="1.100" fill="none"/><path d="M7.900 4.400l1.700-2.700 1.700 2.700z" fill="#4668b4"/><path d="M12.300 4.600h2.600" stroke="#4668b4" stroke-width="1"/><rect x="12" y="6.800" width="3.100" height="3.100" fill="#fff" stroke="#e04868" stroke-width="1.100"/><rect x="12" y="11" width="3.100" height="3.100" fill="#fff" stroke="#e04868" stroke-width="1.100"/></g>
<g transform="translate(700.500 64.500)"><rect x="7.300" y="1.200" width="8" height="12.600" fill="#d4d4d4" stroke="#8a8a8a" stroke-width="0.900"/><rect x="1" y="3.800" width="11.300" height="9" fill="#e2e2e2" stroke="#8e8e8e" stroke-width="1"/><rect x="2.500" y="5.200" width="8.300" height="5.800" fill="#4a78c8"/></g>
<g transform="translate(705 69.5) scale(1.02)"><path d="M1 10.8L2 7.6 8.2 1.4c.9-.8 2.6.7 1.9 1.8L3.9 9.6z" fill="#f6c744" stroke="#d98f24" stroke-width="0.9" stroke-linejoin="round"/><path d="M1 10.8L2 7.6 3.9 9.6z" fill="#f3dcb8" stroke="#8a5a20" stroke-width="0.7"/><path d="M8.2 1.4c.9-.8 2.6.7 1.9 1.8L9 4.2 7.2 2.4z" fill="#f2b8c0" stroke="#c98a90" stroke-width="0.6"/><path d="M1 10.8l.5-1.3.9.8z" fill="#553311"/></g>
<g transform="translate(727.500 64.500)"><circle cx="11" cy="3.700" r="2.900" fill="#f8d5a4" stroke="#e89a28" stroke-width="1"/><path d="M6.900 11.800c.2-5.200 8.200-5.200 8.400 0z" fill="#5cab4c" stroke="#e89a28" stroke-width="0.800"/><circle cx="5.500" cy="8.300" r="2.700" fill="#f3c9a0" stroke="#8a4a22" stroke-width="1"/><path d="M1.200 15.600c.2-5.500 8.400-5.500 8.600 0z" fill="#4a90dc" stroke="#2b5fa8" stroke-width="0.800"/></g>
<g transform="translate(732.5 69.8) scale(1.0)"><path d="M1 10.8L2 7.6 8.2 1.4c.9-.8 2.6.7 1.9 1.8L3.9 9.6z" fill="#f6c744" stroke="#d98f24" stroke-width="0.9" stroke-linejoin="round"/><path d="M1 10.8L2 7.6 3.9 9.6z" fill="#f3dcb8" stroke="#8a5a20" stroke-width="0.7"/><path d="M8.2 1.4c.9-.8 2.6.7 1.9 1.8L9 4.2 7.2 2.4z" fill="#f2b8c0" stroke="#c98a90" stroke-width="0.6"/><path d="M1 10.8l.5-1.3.9.8z" fill="#553311"/></g>
<g transform="translate(756 64.500)"><path d="M.8 1.500c0-.6.400-.9.900-.9h11c.6 0 .9.400.9.900v9l-4.600 4.900H1.700c-.6 0-.9-.4-.9-.9z" fill="#fafafa" stroke="#cfcfcf" stroke-width="1"/><path d="M13.400 10.600H9.200v4.600z" fill="#fff" stroke="#b8b8b8" stroke-width="0.900"/><path d="M4.500 4.500c2-2 5-1 4 1.300-.6 1.400-2.400 1.600-2.300 3.500" stroke="#ececec" stroke-width="1.600" fill="none"/></g>
<path d="M1892 66.600h20M1892 73.200h20M1892 79.700h20" stroke="#1d1d1d" stroke-width="1.500"/>
<rect x="10.0" y="91.3" width="1.7" height="1.4" fill="#a59c8f"/><rect x="13.7" y="91.3" width="1.7" height="1.4" fill="#a59c8f"/><rect x="17.4" y="91.3" width="1.7" height="1.4" fill="#a59c8f"/><rect x="21.1" y="91.3" width="1.7" height="1.4" fill="#a59c8f"/>
<g stroke="#4d4d4d" stroke-width="1.200" fill="#f5f5f5"><rect x="15.700" y="104.600" width="5" height="3.700"/><rect x="13.400" y="107.200" width="5" height="3.700"/></g><path d="M15.700 105.200h5M13.400 107.800h5" stroke="#4d4d4d" stroke-width="1.800"/>
<g transform="translate(11.8 124.8)"><path d="M2.7 3v11.2M2.7 7.4h4M2.7 13.4h4" stroke="#555a6e" stroke-width="1.1" fill="none"/><circle cx="2.7" cy="2.6" r="2.3" fill="#4fa04f" stroke="#2e7a35" stroke-width="0.8"/><circle cx="7.7" cy="7.6" r="2.3" fill="#4fa04f" stroke="#2e7a35" stroke-width="0.8"/><circle cx="7.7" cy="13.4" r="2.3" fill="#4fa04f" stroke="#2e7a35" stroke-width="0.8"/></g>
<g transform="translate(39 97.400)"><rect x="0.600" y="1.200" width="13.800" height="11.600" rx="1" fill="#f6f9fe" stroke="#6d8fd0" stroke-width="1.100"/><rect x="0.600" y="1.200" width="13.800" height="2.400" fill="#6d8fd0"/><rect x="2.300" y="5" width="2.800" height="2.500" fill="#4b8fe8"/><rect x="6.100" y="5" width="2.800" height="2.500" fill="#49b04a"/><rect x="9.900" y="5" width="2.800" height="2.500" fill="#5aa6f0"/><rect x="2.300" y="8.600" width="2.800" height="2.500" fill="#49b04a"/><rect x="6.100" y="8.600" width="2.800" height="2.500" fill="#f09a2c"/><rect x="9.900" y="8.600" width="2.800" height="2.500" fill="#f2c330"/></g>
<path d="M290.300 101.400l8.300 8.600M298.600 101.400l-8.300 8.600" stroke="#2c2c2c" stroke-width="1.300"/>
<g transform="translate(1552.500 96.500)"><rect x="0.900" y="1" width="13" height="12.800" fill="#eef4fd" stroke="#7aa2e0" stroke-width="1"/><path d="M2.700 3h9.400" stroke="#6cc070" stroke-width="1.100"/><path d="M2.700 5.800h2M2.700 8.200h2M2.700 10.600h2M6 5.800h6M6 8.200h6M6 10.600h6" stroke="#a9c4ea" stroke-width="1.100"/></g>
<g transform="translate(1556 101) scale(1.05)"><path d="M1 10.8L2 7.6 8.2 1.4c.9-.8 2.6.7 1.9 1.8L3.9 9.6z" fill="#f6c744" stroke="#d98f24" stroke-width="0.9" stroke-linejoin="round"/><path d="M1 10.8L2 7.6 3.9 9.6z" fill="#f3dcb8" stroke="#8a5a20" stroke-width="0.7"/><path d="M8.2 1.4c.9-.8 2.6.7 1.9 1.8L9 4.2 7.2 2.4z" fill="#f2b8c0" stroke="#c98a90" stroke-width="0.6"/><path d="M1 10.8l.5-1.3.9.8z" fill="#553311"/></g>
<g transform="translate(1580 96.500)"><path d="M.8 1.500c0-.4.300-.7.700-.7h12c.400 0 .700.300.700.700v12.500c0 .4-.3.700-.7.700H1.500c-.4 0-.7-.3-.7-.7z" fill="#d3ddec" stroke="#a9b9d6" stroke-width="1"/><rect x="3.400" y="0.900" width="8.200" height="6" fill="#f1f4f9"/><path d="M3.400 6.900h8.200" stroke="#e9d8b4" stroke-width="0.800"/><rect x="4.400" y="9.700" width="6" height="4.800" fill="#eef1f6" stroke="#b9c5da" stroke-width="0.600"/><rect x="5.400" y="11" width="3" height="2.500" fill="#ecdcb8"/></g>
<g fill="none"><path d="M1620.700 103.800h10" stroke="#8b8b8b" stroke-width="1.300"/><path d="M1627 100l3.700 3.800-3.700 3.800" stroke="#3b3b3b" stroke-width="1.200"/><path d="M1633 99.200v9.600" stroke="#8b8b8b" stroke-width="1.500"/><path d="M1648.500 103.800h10" stroke="#8b8b8b" stroke-width="1.300"/><path d="M1652 100l-3.700 3.800 3.700 3.800" stroke="#3b3b3b" stroke-width="1.200"/><path d="M1660.200 99.200v9.600" stroke="#8b8b8b" stroke-width="1.500"/></g>
<g transform="translate(1686 96.500)"><rect x="2.500" y="0.900" width="13" height="12" fill="#f3f6fb" stroke="#7f93b8" stroke-width="1"/><rect x="2.500" y="0.900" width="13" height="2.200" fill="#5d76a6"/><path d="M2.500 5.600h13M2.500 8h13M2.500 10.400h13" stroke="#c5d0e4" stroke-width="0.900"/><path d="M7 1v12" stroke="#9fb0ce" stroke-width="0.900"/><path d="M.3 11.300h4v4z" fill="#1f64b4"/></g>
<g transform="translate(1714 96.500)"><rect x="0.600" y="0.900" width="13" height="13" fill="#cfe0f4" stroke="#8c8468" stroke-width="0.900"/><rect x="1.600" y="1.900" width="11" height="11" fill="#7aa6da" stroke="#4a6eae" stroke-width="0.600"/><path d="M2 12.600l3.200-5 2.400 2.600 1.800-1.600 3.200 4z" fill="#f2f2f4"/><path d="M4.800 5.200l2.600 1.200 1.200 3.800-2 1.600-1.600-2.800z" fill="#d8342c"/><circle cx="5.400" cy="4.400" r="1.100" fill="#7a2a1c"/><path d="M9.600 8.200l1.800 1.200-.3 2.400-1.600-.6z" fill="#4e4e56"/></g>
<rect x="1755.200" y="100.300" width="11.600" height="7.600" fill="#3e3e3e"/><path d="M1753.500 101.300v-3h3M1768.500 101.300v-3h-3M1753.500 107v3h3M1768.500 107v3h-3" stroke="#7c7c7c" stroke-width="1.200" fill="none"/><path d="M1756.500 98.300h9M1756.500 110h9M1753.500 101.300v5.700M1768.500 101.300v5.700" stroke="#9a9a9a" stroke-width="0.700"/>
<g transform="translate(1793.500 96.500)" fill="#f7cf4a" stroke="#d69a1a" stroke-width="0.900" stroke-linejoin="round"><path d="M6.400 5.200c1-2.200 3-3.300 4.900-3.300l-.6-1.500 4.400 2.700-2.600 4-.5-1.700c-1.300-.1-2.500.5-3.300 1.700z"/><path d="M9.300 10.600c-1 2.200-3 3.300-4.900 3.300l.6 1.500-4.400-2.700 2.600-4 .5 1.700c1.300.1 2.500-.5 3.300-1.700z"/></g>
<g fill="#fdfdfd" stroke="#5a5a5a" stroke-width="0.900"><circle cx="1836.300" cy="99.700" r="1.700"/><circle cx="1836.300" cy="104.400" r="1.700"/><circle cx="1836.300" cy="109.100" r="1.700"/></g>
<rect x="1866.600" y="98.600" width="8.800" height="3" fill="#fff" stroke="#111" stroke-width="1.100"/>
<rect x="1893.600" y="99" width="8.800" height="8.300" fill="#fff" stroke="#111" stroke-width="1.100"/><path d="M1893 99.300h10" stroke="#111" stroke-width="1.800"/>
<path d="M1018.500 1024v23M1390.500 1024v23" stroke="#d6d6d6" stroke-width="1"/>
<g transform="translate(1025.500 1027)"><path d="M3.600 7V4.600c0-4 7.400-4 7.400 0V7" stroke="#a2a2a2" stroke-width="1.700" fill="none"/><rect x="0.800" y="6.800" width="13" height="8.800" rx="0.800" fill="#f6c44c" stroke="#d88a22" stroke-width="1"/><path d="M2.500 10.300h9.600M2.500 12.400h9.600" stroke="#fbe6a6" stroke-width="1"/><rect x="6.600" y="9.600" width="1.500" height="3.500" fill="#b87a1c"/></g>
<rect x="1635.5" y="1029.8" width="1.7" height="1.7" fill="#a59c8f"/><rect x="1635.5" y="1033.8999999999999" width="1.7" height="1.7" fill="#a59c8f"/><rect x="1635.5" y="1038.0" width="1.7" height="1.7" fill="#a59c8f"/><rect x="1635.5" y="1042.1" width="1.7" height="1.7" fill="#a59c8f"/>
</svg>
<div id="winbottom"></div>
</body></html>
